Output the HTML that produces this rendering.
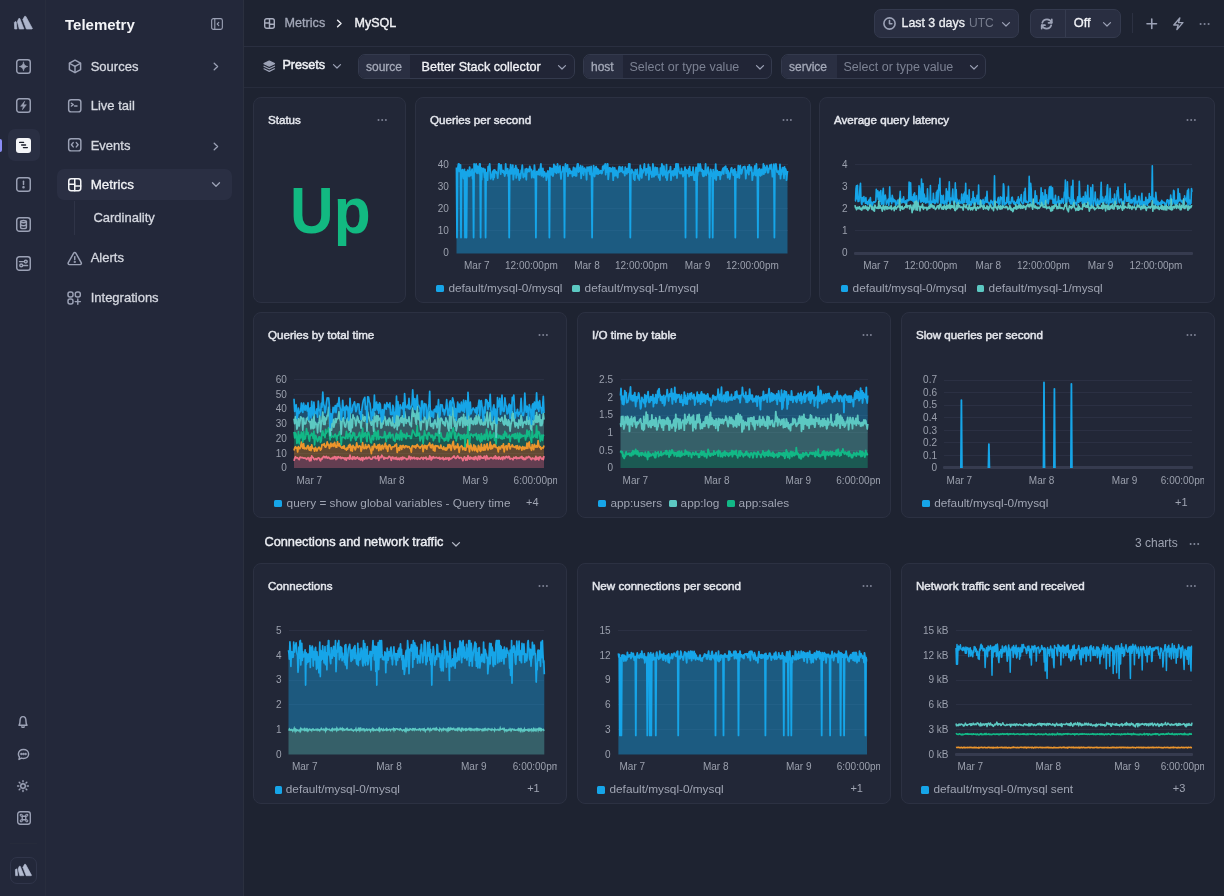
<!DOCTYPE html><html><head><meta charset="utf-8"><style>
html,body{margin:0;padding:0;}
body{width:1224px;height:896px;overflow:hidden;position:relative;background:#1e2331;font-family:"Liberation Sans", sans-serif;}
.t{position:absolute;white-space:nowrap;line-height:1;}
svg{overflow:visible}
.m{-webkit-text-stroke:0.3px currentColor;}
</style></head><body><div id="root" style="position:absolute;left:0;top:0;width:1224px;height:896px;will-change:transform;background:#1e2331;">
<div style="position:absolute;left:0px;top:0px;width:46px;height:896px;background:#23283a;"></div>
<div style="position:absolute;left:46px;top:0px;width:197px;height:896px;background:#23283a;"></div>
<div style="position:absolute;left:45px;top:0px;width:1px;height:896px;background:#282d3d;"></div>
<div style="position:absolute;left:243px;top:0px;width:1px;height:896px;background:#2b303f;"></div>
<div style="position:absolute;left:244px;top:46px;width:980px;height:1px;background:#2a2f40;"></div>
<div style="position:absolute;left:244px;top:87px;width:980px;height:1px;background:#272c3c;"></div>
<svg style="position:absolute;left:14px;top:16px" width="20" height="14" viewBox="14 16 20 14"><g fill="#aeb6cc" stroke="#aeb6cc" stroke-width="0.7" stroke-linejoin="round"><path d="M14.4 22.4 L15.4 21.4 L16.2 21.9 L16.9 28.9 L14.7 29 Z"/><path d="M17.4 21.6 L18.8 18.5 L19.8 18.5 L23.9 28.9 L19.3 29 Z"/><path d="M22.8 19.6 L24.7 16.3 L25.8 16.4 L32.4 28.6 L32 29 L26.4 29 Z"/></g></svg>
<svg style="position:absolute;left:16px;top:59px" width="15" height="15" viewBox="0 0 15 15" fill="none" stroke="#9ca2b6" stroke-width="1.45" stroke-linecap="round" stroke-linejoin="round"><rect x="0.75" y="0.75" width="13.5" height="13.5" rx="2.6"/><path d="M7.5 3.2 C7.9 5.8 9.2 7.1 11.8 7.5 C9.2 7.9 7.9 9.2 7.5 11.8 C7.1 9.2 5.8 7.9 3.2 7.5 C5.8 7.1 7.1 5.8 7.5 3.2 Z" fill="#9ca2b6" stroke-width="0.6"/></svg>
<svg style="position:absolute;left:16px;top:98px" width="15" height="15" viewBox="0 0 15 15" fill="none" stroke="#9ca2b6" stroke-width="1.45" stroke-linecap="round" stroke-linejoin="round"><rect x="0.75" y="0.75" width="13.5" height="13.5" rx="2.6"/><path d="M8.6 3.2 L4.6 8.3 L7.3 8.3 L6.4 11.8 L10.4 6.7 L7.7 6.7 Z" fill="#9ca2b6" stroke-width="0.5"/></svg>
<div style="position:absolute;left:8px;top:129px;width:32px;height:32px;background:#2a2f43;border-radius:7px;"></div>
<div style="position:absolute;left:0px;top:139px;width:2px;height:13px;background:#8b8df7;border-radius:0 2px 2px 0;"></div>
<svg style="position:absolute;left:16px;top:138px" width="15" height="15" viewBox="0 0 15 15"><rect x="0" y="0" width="15" height="15" rx="3" fill="#f4f5f8"/><g stroke="#1b1f2c" stroke-width="1.3" stroke-linecap="round"><path d="M3.6 4.4 H7.6"/><path d="M5.6 7 H9.6"/><path d="M7.4 9.6 H11.4"/></g></svg>
<svg style="position:absolute;left:16px;top:177px" width="15" height="15" viewBox="0 0 15 15" fill="none" stroke="#9ca2b6" stroke-width="1.45" stroke-linecap="round" stroke-linejoin="round"><rect x="0.75" y="0.75" width="13.5" height="13.5" rx="2.6"/><path d="M7.5 4.2 V7.4"/><circle cx="7.5" cy="10.2" r="0.55" fill="#9ca2b6"/></svg>
<svg style="position:absolute;left:16px;top:216.5px" width="15" height="15" viewBox="0 0 15 15" fill="none" stroke="#9ca2b6" stroke-width="1.45" stroke-linecap="round" stroke-linejoin="round"><rect x="0.75" y="0.75" width="13.5" height="13.5" rx="2.6"/><ellipse cx="7.5" cy="4.6" rx="2.9" ry="1.2"/><path d="M4.6 4.6 V10.4 C4.6 11.1 5.9 11.6 7.5 11.6 C9.1 11.6 10.4 11.1 10.4 10.4 V4.6"/><path d="M4.6 7.5 C4.6 8.2 5.9 8.7 7.5 8.7 C9.1 8.7 10.4 8.2 10.4 7.5"/></svg>
<svg style="position:absolute;left:16px;top:256px" width="15" height="15" viewBox="0 0 15 15" fill="none" stroke="#9ca2b6" stroke-width="1.45" stroke-linecap="round" stroke-linejoin="round"><rect x="0.75" y="0.75" width="13.5" height="13.5" rx="2.6"/><path d="M3.5 5.6 H8.3"/><circle cx="9.8" cy="5.6" r="1.4"/><path d="M11.5 9.4 H6.7"/><circle cx="5.2" cy="9.4" r="1.4"/></svg>
<svg style="position:absolute;left:17px;top:715px" width="12" height="14" viewBox="0 0 12 14" fill="none" stroke="#9ca2b6" stroke-width="1.45" stroke-linecap="round" stroke-linejoin="round"><path d="M2 10.2 C3 9.2 3 8.2 3 6.2 C3 3.6 4.3 1.6 6 1.6 C7.7 1.6 9 3.6 9 6.2 C9 8.2 9 9.2 10 10.2 Z"/><path d="M4.8 11.8 C5.2 12.5 6.8 12.5 7.2 11.8"/></svg>
<svg style="position:absolute;left:17px;top:748px" width="13" height="13" viewBox="0 0 13 13" fill="none" stroke="#9ca2b6" stroke-width="1.45" stroke-linecap="round" stroke-linejoin="round"><path d="M6.5 1.4 C9.5 1.4 11.6 3.3 11.6 5.9 C11.6 8.5 9.5 10.4 6.5 10.4 C5.8 10.4 5.1 10.3 4.5 10.1 L2 11.4 L2.5 9.1 C1.8 8.3 1.4 7.2 1.4 5.9 C1.4 3.3 3.5 1.4 6.5 1.4 Z"/><circle cx="4.4" cy="6" r="0.45" fill="#9ca2b6"/><circle cx="6.5" cy="6" r="0.45" fill="#9ca2b6"/><circle cx="8.6" cy="6" r="0.45" fill="#9ca2b6"/></svg>
<svg style="position:absolute;left:17px;top:780px" width="12" height="12" viewBox="0 0 12 12" fill="none" stroke="#9ca2b6" stroke-width="1.45" stroke-linecap="round" stroke-linejoin="round"><circle cx="6" cy="6" r="2.3"/><path d="M6 0.6 V1.8 M6 10.2 V11.4 M0.6 6 H1.8 M10.2 6 H11.4 M2.2 2.2 L3 3 M9 9 L9.8 9.8 M2.2 9.8 L3 9 M9 3 L9.8 2.2"/></svg>
<svg style="position:absolute;left:16.5px;top:811px" width="14" height="14" viewBox="0 0 15 15" fill="none" stroke="#9ca2b6" stroke-width="1.45" stroke-linecap="round" stroke-linejoin="round"><rect x="0.75" y="0.75" width="13.5" height="13.5" rx="2.6"/><path d="M5.6 5.6 H9.4 V9.4 H5.6 Z"/><path d="M5.6 5.6 V4.6 A1.1 1.1 0 1 0 4.6 5.6 H5.6 M9.4 5.6 H10.4 A1.1 1.1 0 1 0 9.4 4.6 V5.6 M9.4 9.4 V10.4 A1.1 1.1 0 1 0 10.4 9.4 H9.4 M5.6 9.4 H4.6 A1.1 1.1 0 1 0 5.6 10.4 V9.4" stroke-width="1.1"/></svg>
<div style="position:absolute;left:10px;top:843px;width:27px;height:1px;background:#262b3b;"></div>
<div style="position:absolute;left:10px;top:856.5px;width:27px;height:27.5px;border:1px solid #30354a;border-radius:7px;box-sizing:border-box;"></div>
<div style="position:absolute;left:0;top:0;transform:translate(1px,848px) scale(0.9);transform-origin:14px 16px">
<svg style="position:absolute;left:14px;top:16px" width="20" height="14" viewBox="14 16 20 14"><g fill="#b3bbd0" stroke="#b3bbd0" stroke-width="0.7" stroke-linejoin="round"><path d="M14.4 22.4 L15.4 21.4 L16.2 21.9 L16.9 28.9 L14.7 29 Z"/><path d="M17.4 21.6 L18.8 18.5 L19.8 18.5 L23.9 28.9 L19.3 29 Z"/><path d="M22.8 19.6 L24.7 16.3 L25.8 16.4 L32.4 28.6 L32 29 L26.4 29 Z"/></g></svg>
</div>
<span class="t" style="left:65.0px;top:17.1px;font-size:15px;font-weight:700;color:#f3f4f7;">Telemetry</span>
<svg style="position:absolute;left:211px;top:18px" width="12" height="12" viewBox="0 0 12 12" fill="none" stroke="#9ca2b6" stroke-width="1.1" stroke-linecap="round" stroke-linejoin="round"><rect x="0.65" y="0.65" width="10.7" height="10.7" rx="1.8"/><path d="M3.8 0.8 V11.2"/><path d="M7.8 4.4 L6.2 6 L7.8 7.6"/></svg>
<svg style="position:absolute;left:67.5px;top:58.5px" width="14" height="15" viewBox="0 0 14 15" fill="none" stroke="#9ca2b6" stroke-width="1.45" stroke-linecap="round" stroke-linejoin="round"><path d="M7 1.2 L12.6 4.2 V10.6 L7 13.6 L1.4 10.6 V4.2 Z"/><path d="M1.6 4.3 L7 7.3 L12.4 4.3"/><path d="M7 7.3 V13.4"/></svg>
<span class="t m" style="left:90.7px;top:60.0px;font-size:13px;font-weight:400;color:#d5d8e0;">Sources</span>
<svg style="position:absolute;left:212px;top:62px" width="8" height="9" viewBox="0 0 8 9" fill="none" stroke="#9ca2b6" stroke-width="1.3" stroke-linecap="round" stroke-linejoin="round"><path d="M2.2 1.2 L5.6 4.5 L2.2 7.8"/></svg>
<svg style="position:absolute;left:68px;top:98.6px" width="13.5" height="13.5" viewBox="0 0 13.5 13.5" fill="none" stroke="#9ca2b6" stroke-width="1.45" stroke-linecap="round" stroke-linejoin="round"><rect x="0.65" y="0.65" width="12.2" height="12.2" rx="2.4"/><path d="M3.4 4.2 L5.2 5.6 L3.4 7"/><path d="M6.6 7 H9"/></svg>
<span class="t m" style="left:90.7px;top:99.2px;font-size:13px;font-weight:400;color:#d5d8e0;">Live tail</span>
<svg style="position:absolute;left:68px;top:138.3px" width="13.5" height="13.5" viewBox="0 0 13.5 13.5" fill="none" stroke="#9ca2b6" stroke-width="1.45" stroke-linecap="round" stroke-linejoin="round"><rect x="0.65" y="0.65" width="12.2" height="12.2" rx="2.4"/><path d="M5.2 4.6 L3.4 6.75 L5.2 8.9"/><path d="M8.3 4.6 L10.1 6.75 L8.3 8.9"/></svg>
<span class="t m" style="left:90.7px;top:138.8px;font-size:13px;font-weight:400;color:#d5d8e0;">Events</span>
<svg style="position:absolute;left:212px;top:141.5px" width="8" height="9" viewBox="0 0 8 9" fill="none" stroke="#9ca2b6" stroke-width="1.3" stroke-linecap="round" stroke-linejoin="round"><path d="M2.2 1.2 L5.6 4.5 L2.2 7.8"/></svg>
<div style="position:absolute;left:57px;top:169px;width:175px;height:31px;background:#2a2f43;border-radius:7px;"></div>
<svg style="position:absolute;left:67.5px;top:178.3px" width="13.5" height="13.5" viewBox="0 0 13.5 13.5" fill="none" stroke="#f4f5f8" stroke-width="1.5" stroke-linecap="round" stroke-linejoin="round"><rect x="0.75" y="0.75" width="12" height="12" rx="2.4"/><path d="M6.75 0.8 V12.7"/><path d="M0.8 6.2 H6.75"/><path d="M6.75 8 H12.7"/></svg>
<span class="t m" style="left:90.7px;top:178.0px;font-size:13.4px;font-weight:400;color:#f3f4f7;">Metrics</span>
<svg style="position:absolute;left:211px;top:181px" width="10" height="7" viewBox="0 0 10 7" fill="none" stroke="#9ca2b6" stroke-width="1.3" stroke-linecap="round" stroke-linejoin="round"><path d="M1.5 1.8 L5 5.2 L8.5 1.8"/></svg>
<div style="position:absolute;left:73.5px;top:201px;width:1px;height:34px;background:#2f3447;"></div>
<span class="t m" style="left:93.4px;top:211.4px;font-size:13px;font-weight:400;color:#d5d8e0;">Cardinality</span>
<svg style="position:absolute;left:66.5px;top:250.5px" width="15.5" height="15" viewBox="0 0 15.5 15" fill="none" stroke="#9ca2b6" stroke-width="1.45" stroke-linecap="round" stroke-linejoin="round"><path d="M7.75 1.4 C8.2 1.4 8.5 1.6 8.8 2.1 L14.2 11.6 C14.7 12.5 14.2 13.6 13.1 13.6 H2.4 C1.3 13.6 0.8 12.5 1.3 11.6 L6.7 2.1 C7 1.6 7.3 1.4 7.75 1.4 Z"/><path d="M7.75 5.6 V8.4"/><circle cx="7.75" cy="10.9" r="0.4" fill="#9ca2b6"/></svg>
<span class="t m" style="left:90.7px;top:251.0px;font-size:13px;font-weight:400;color:#d5d8e0;">Alerts</span>
<svg style="position:absolute;left:66.8px;top:290.8px" width="14.5" height="14" viewBox="0 0 14.5 14" fill="none" stroke="#9ca2b6" stroke-width="1.45" stroke-linecap="round" stroke-linejoin="round"><rect x="1" y="1" width="5" height="5" rx="2"/><rect x="8.3" y="1" width="5" height="5" rx="2"/><rect x="1" y="8" width="5" height="5" rx="2"/><path d="M10.8 8 V13.2 M8.2 10.6 H13.4"/></svg>
<span class="t m" style="left:90.7px;top:290.7px;font-size:13px;font-weight:400;color:#d5d8e0;">Integrations</span>
<svg style="position:absolute;left:264px;top:18px" width="11" height="11" viewBox="0 0 11 11" fill="none" stroke="#a9aebf" stroke-width="1.4" stroke-linecap="round" stroke-linejoin="round"><rect x="0.7" y="0.7" width="9.6" height="9.6" rx="2"/><path d="M5.5 0.7 V10.3"/><path d="M0.7 5 H5.5"/><path d="M5.5 6.3 H10.3"/></svg>
<span class="t m" style="left:284.6px;top:17.3px;font-size:12.6px;font-weight:400;color:#a3a8b8;">Metrics</span>
<svg style="position:absolute;left:335.5px;top:18.5px" width="7" height="9" viewBox="0 0 7 9" fill="none" stroke="#e8eaf0" stroke-width="1.5" stroke-linecap="round" stroke-linejoin="round"><path d="M1.6 1.2 L5 4.5 L1.6 7.8"/></svg>
<span class="t m" style="left:354.6px;top:16.9px;font-size:12.5px;font-weight:400;color:#f1f2f6;-webkit-text-stroke:0.4px currentColor;">MySQL</span>
<div style="position:absolute;left:874px;top:9px;width:145px;height:28.5px;background:#292e41;border:1px solid #343a4e;border-radius:7px;box-sizing:border-box;"></div>
<svg style="position:absolute;left:882.5px;top:17.3px" width="13" height="13" viewBox="0 0 13 13" fill="none" stroke="#9ca2b6" stroke-width="1.6" stroke-linecap="round" stroke-linejoin="round"><circle cx="6.5" cy="6.5" r="5.6"/><path d="M6.5 3.5 V6.7 H8.9"/></svg>
<span class="t m" style="left:901.5px;top:16.7px;font-size:12.4px;font-weight:400;color:#eef0f4;">Last 3 days</span>
<span class="t" style="left:969.0px;top:17.0px;font-size:12px;font-weight:400;color:#777d8e;">UTC</span>
<svg style="position:absolute;left:1000.5px;top:20.5px" width="10" height="7" viewBox="0 0 10 7" fill="none" stroke="#9ca2b6" stroke-width="1.2" stroke-linecap="round" stroke-linejoin="round"><path d="M1.5 1.6 L5 5 L8.5 1.6"/></svg>
<div style="position:absolute;left:1030px;top:9px;width:91px;height:28.5px;background:#292e41;border:1px solid #343a4e;border-radius:7px;box-sizing:border-box;"></div>
<div style="position:absolute;left:1064.5px;top:10px;width:1px;height:26.5px;background:#363c50;"></div>
<svg style="position:absolute;left:1040px;top:17.5px" width="13.5" height="12" viewBox="0 0 13.5 12" fill="none" stroke="#9ca2b6" stroke-width="1.7" stroke-linecap="round" stroke-linejoin="round"><path d="M11.6 4.6 C10.9 2.7 9.1 1.4 7 1.4 C4.8 1.4 2.9 2.8 2.3 4.8"/><path d="M11.8 1.4 V4.8 H8.5"/><path d="M1.9 7.4 C2.6 9.3 4.4 10.6 6.5 10.6 C8.7 10.6 10.6 9.2 11.2 7.2"/><path d="M1.7 10.6 V7.2 H5"/></svg>
<span class="t m" style="left:1073.7px;top:16.6px;font-size:12.8px;font-weight:400;color:#f1f2f6;">Off</span>
<svg style="position:absolute;left:1101.5px;top:20.5px" width="10" height="7" viewBox="0 0 10 7" fill="none" stroke="#9ca2b6" stroke-width="1.2" stroke-linecap="round" stroke-linejoin="round"><path d="M1.5 1.6 L5 5 L8.5 1.6"/></svg>
<div style="position:absolute;left:1132px;top:12.5px;width:1px;height:20.5px;background:#2c3142;"></div>
<svg style="position:absolute;left:1145.5px;top:17.5px" width="11.5" height="11.5" viewBox="0 0 11.5 11.5" fill="none" stroke="#9ca2b6" stroke-width="1.6" stroke-linecap="round" stroke-linejoin="round"><path d="M5.75 1 V10.5 M1 5.75 H10.5"/></svg>
<svg style="position:absolute;left:1172px;top:17px" width="12.5" height="13.5" viewBox="0 0 12.5 13.5" fill="none" stroke="#9ca2b6" stroke-width="1.4" stroke-linecap="round" stroke-linejoin="round"><path d="M7.8 1 L1.8 8 H6.2 L4.9 12.6 L10.9 5.6 H6.5 Z"/></svg>
<svg style="position:absolute;left:1199px;top:21.5px" width="12" height="4" viewBox="0 0 12 4"><g fill="#80869a"><circle cx="1.6" cy="2" r="1.05"/><circle cx="5.6" cy="2" r="1.05"/><circle cx="9.6" cy="2" r="1.05"/></g></svg>
<svg style="position:absolute;left:262.5px;top:60px" width="12.5" height="12.5" viewBox="0 0 12.5 12.5" fill="none" stroke="#9ca2b6" stroke-width="1.2" stroke-linecap="round" stroke-linejoin="round"><path d="M6.25 1 L11.5 3.6 L6.25 6.2 L1 3.6 Z" fill="#9ca2b6"/><path d="M1 6.2 L6.25 8.8 L11.5 6.2"/><path d="M1 8.8 L6.25 11.4 L11.5 8.8"/></svg>
<span class="t m" style="left:282.4px;top:59.3px;font-size:12.6px;font-weight:400;color:#eef0f4;-webkit-text-stroke:0.5px currentColor;">Presets</span>
<svg style="position:absolute;left:332px;top:63px" width="10" height="7" viewBox="0 0 10 7" fill="none" stroke="#9ca2b6" stroke-width="1.2" stroke-linecap="round" stroke-linejoin="round"><path d="M1.5 1.6 L5 5 L8.5 1.6"/></svg>
<div style="position:absolute;left:358px;top:54px;width:217px;height:25px;background:#212536;border:1px solid #343a4d;border-radius:7px;box-sizing:border-box;overflow:hidden;"></div>
<div style="position:absolute;left:359px;top:55px;width:51px;height:23px;background:#2a2f42;border-radius:6px 0 0 6px;"></div>
<span class="t m" style="left:366.0px;top:61.4px;font-size:12px;font-weight:400;color:#a4a9b8;">source</span>
<span class="t m" style="left:421.6px;top:61.1px;font-size:12.6px;font-weight:400;color:#f1f2f6;">Better Stack collector</span>
<svg style="position:absolute;left:557px;top:63.5px" width="10" height="7" viewBox="0 0 10 7" fill="none" stroke="#9ca2b6" stroke-width="1.2" stroke-linecap="round" stroke-linejoin="round"><path d="M1.5 1.6 L5 5 L8.5 1.6"/></svg>
<div style="position:absolute;left:583px;top:54px;width:189px;height:25px;background:#212536;border:1px solid #343a4d;border-radius:7px;box-sizing:border-box;overflow:hidden;"></div>
<div style="position:absolute;left:584px;top:55px;width:39px;height:23px;background:#2a2f42;border-radius:6px 0 0 6px;"></div>
<span class="t m" style="left:591.0px;top:61.4px;font-size:12px;font-weight:400;color:#a4a9b8;">host</span>
<span class="t" style="left:629.5px;top:61.2px;font-size:12.5px;font-weight:400;color:#7b8192;">Select or type value</span>
<svg style="position:absolute;left:755px;top:63.5px" width="10" height="7" viewBox="0 0 10 7" fill="none" stroke="#9ca2b6" stroke-width="1.2" stroke-linecap="round" stroke-linejoin="round"><path d="M1.5 1.6 L5 5 L8.5 1.6"/></svg>
<div style="position:absolute;left:781px;top:54px;width:205px;height:25px;background:#212536;border:1px solid #343a4d;border-radius:7px;box-sizing:border-box;overflow:hidden;"></div>
<div style="position:absolute;left:782px;top:55px;width:55px;height:23px;background:#2a2f42;border-radius:6px 0 0 6px;"></div>
<span class="t m" style="left:789.0px;top:61.4px;font-size:12px;font-weight:400;color:#a4a9b8;">service</span>
<span class="t" style="left:843.5px;top:61.2px;font-size:12.5px;font-weight:400;color:#7b8192;">Select or type value</span>
<svg style="position:absolute;left:968.5px;top:63.5px" width="10" height="7" viewBox="0 0 10 7" fill="none" stroke="#9ca2b6" stroke-width="1.2" stroke-linecap="round" stroke-linejoin="round"><path d="M1.5 1.6 L5 5 L8.5 1.6"/></svg>
<div style="position:absolute;left:253px;top:97px;width:153px;height:206px;background:#222737;border:1px solid #2c3142;border-radius:8px;box-sizing:border-box;"></div>
<span class="t m" style="left:268.0px;top:114.1px;font-size:11.6px;font-weight:400;color:#e6e8ee;-webkit-text-stroke:0.45px currentColor;">Status</span>
<svg style="position:absolute;left:377px;top:118px" width="11" height="4" viewBox="0 0 11 4"><g fill="#7d8294"><circle cx="1.5" cy="2" r="1"/><circle cx="5.2" cy="2" r="1"/><circle cx="8.9" cy="2" r="1"/></g></svg>
<span class="t" style="left:289.5px;top:177.8px;font-size:65px;font-weight:700;color:#12b981;transform:scaleX(0.93);transform-origin:0 0;">Up</span>
<div style="position:absolute;left:415px;top:97px;width:396px;height:206px;background:#222737;border:1px solid #2c3142;border-radius:8px;box-sizing:border-box;"></div>
<span class="t m" style="left:430.0px;top:114.1px;font-size:11.6px;font-weight:400;color:#e6e8ee;-webkit-text-stroke:0.45px currentColor;">Queries per second</span>
<svg style="position:absolute;left:782px;top:118px" width="11" height="4" viewBox="0 0 11 4"><g fill="#7d8294"><circle cx="1.5" cy="2" r="1"/><circle cx="5.2" cy="2" r="1"/><circle cx="8.9" cy="2" r="1"/></g></svg>
<span class="t" style="right:775.2px;top:159.9px;font-size:10px;font-weight:400;color:#9ba0ad;">40</span>
<div style="position:absolute;left:456px;top:164px;width:332px;height:1px;background:#2b3043;"></div>
<span class="t" style="right:775.2px;top:182.0px;font-size:10px;font-weight:400;color:#9ba0ad;">30</span>
<div style="position:absolute;left:456px;top:186px;width:332px;height:1px;background:#2b3043;"></div>
<span class="t" style="right:775.2px;top:204.1px;font-size:10px;font-weight:400;color:#9ba0ad;">20</span>
<div style="position:absolute;left:456px;top:208px;width:332px;height:1px;background:#2b3043;"></div>
<span class="t" style="right:775.2px;top:226.2px;font-size:10px;font-weight:400;color:#9ba0ad;">10</span>
<div style="position:absolute;left:456px;top:230px;width:332px;height:1px;background:#2b3043;"></div>
<span class="t" style="right:775.2px;top:248.2px;font-size:10px;font-weight:400;color:#9ba0ad;">0</span>
<svg style="position:absolute;left:0;top:0" width="1224" height="896" viewBox="0 0 1224 896" fill="none"><path d="M456.5 167.5l.5 70 .5-64 .5-6.7 .5-2.8 .5 0 .5 7.4 .5-.7 .5-5.8 .5 72.6 .5-62.3 .5-4.1 .5-1.5 .5 5 .5 3.9 .5-.7 .5-8.4 .5 68.1 .5-64.2 .5-1.3 .5 65.5 .5-63.4 .6-3.9 .5 5.5 .5-2 .5 2.8 .5-9.3 .5 4.9 .5 3.4 .5-1.6 .5-.9 .5-3.8 .5 9.4 .5-2.1 .5 61 .5-73.5 .5 3.4 .5 4.3 .5-3.2 .5-4.5 .5 8.5 .5 .7 .5-7 .5 3.3 .5-.9 .5 4.9 .5-9.5 .5 0 .5 73.5 .5-69.5 .5 11.6 .5-11.3 .5 3.4 .5-2.4 .5-.8 .5 3.9 .5 5.3 .5-8.3 .5 68.1 .5-65 .5 1.1 .5-.7 .5 7.3 .5-13.5 .5 3.9 .5-4 .6-2.6 .5 7.4 .5 7.4 .5-3.4 .5 1.6 .5-2.7 .5-3 .5 8.4 .5-9.6 .5 7.4 .5-7.6 .5 1.3 .5 1.3 .5-.8 .5 1.8 .5 .2 .5 4.5 .5-6.4 .5-7.8 .5 0 .5 1.9 .5 2.5 .5 5.7 .5-9.3 .5 6.4 .5-.3 .5 1.2 .5-1.6 .5 2.5 .5-1.4 .5 4.5 .5-2.3 .5-9.8 .5 8.9 .5 .4 .5-3.7 .5-.9 .5 7.3 .5-3.9 .5 65.4 .5-67.6 .5 1.2 .5-6.4 .5 9.1 .6-2.9 .5 2.7 .5-8.5 .5 14.6 .5-5.3 .5-.3 .5-5.4 .5 .2 .5-3.3 .5 12.3 .5-9.7 .5 4.7 .5 2 .5-5.1 .5 6.6 .5 3.8 .5-6 .5 4.1 .5-3.6 .5-4.4 .5-.3 .5-4.8 .5 6.8 .5 5.5 .5-3.4 .5 .9 .5 1.3 .5-7.1 .5 4.6 .5 6 .5-11.2 .5 3.5 .5-1.9 .5 1.2 .5-2.3 .5 2.4 .5-5.2 .5 3.2 .5 .2 .5-.3 .5 8.2 .5-5.5 .5 .7 .5-1.9 .6 6.8 .5-12.5 .5 5.9 .5 5.7 .5 60.7 .5-64.6 .5-1.4 .5 2.8 .5-3 .5 3.1 .5-4.9 .5 5.3 .5-2.6 .5-4.6 .5-3.6 .5 11.8 .5-2.5 .5 1.8 .5-6.6 .5 8.4 .5-3.3 .5-1.7 .5 3.8 .5-.1 .5-2.2 .5 6.7 .5-2.6 .5-4.4 .5-2.2 .5 1.4 .5 6.3 .5 58.9 .5-69.9 .5 1 .5 3 .5 3.2 .5-6.4 .5 5.3 .5 2.4 .5-1.8 .5-9.9 .5 5.1 .5-3.6 .5 6.5 .6-5.5 .5 6.4 .5-1.8 .5-7.5 .5 3.1 .5 5.4 .5-1.8 .5-1.2 .5-3.7 .5 7.5 .5 5.7 .5-6 .5-1.1 .5-.3 .5-5 .5 4 .5-2.1 .5 69 .5-69.2 .5-4.3 .5 4.7 .5 2.4 .5 .7 .5-6.9 .5 11.2 .5-3.9 .5-2.2 .5-1.3 .5 4.9 .5-2.9 .5 2.4 .5-1.4 .5 .8 .5 4 .5-5.4 .5-3.6 .5 7.6 .5-3.2 .5-3.8 .5 7.7 .5-4.7 .5 4.8 .5-9 .5-2.9 .6 0 .5 8 .5-4.1 .5 3.2 .5 .2 .5-5.6 .5 12.7 .5-9.6 .5 4.3 .5-6.6 .5 5.3 .5 3.3 .5-4.9 .5-2.1 .5 3.2 .5-1.8 .5 3.9 .5 6.4 .5-12.6 .5 .8 .5 2.6 .5 .2 .5-3.9 .5 6.2 .5 1.4 .5-2 .5-6.1 .5 11.3 .5 59.8 .5-63.6 .5 1.8 .5-10.1 .5 5.6 .5 5.3 .5-3.6 .5-5.1 .5-1.2 .5 7.2 .5-3.4 .5-1.8 .5 5.5 .5-4.3 .5 1.7 .5 1.5 .6-.1 .5-2.3 .5 .8 .5 2.2 .5-.8 .5-6.3 .5 3.5 .5-2.9 .5-1.8 .5 3 .5-4.3 .5 10.7 .5-7.1 .5 4.6 .5-8.2 .5 0 .5 15.3 .5-4.4 .5-6.7 .5-.4 .5 .3 .5 3.5 .5-2.3 .5-.7 .5 3.3 .5-4.6 .5 12.9 .5-11.6 .5 7.4 .5-8.1 .5 5 .5 2.6 .5-5.2 .5 5.3 .5-.7 .5 2.8 .5-6.6 .5-2 .5-2.4 .5 5.3 .5-4.8 .5 3.8 .5 .4 .5-2.7 .6-1.8 .5 5.6 .5-.1 .5 .4 .5-1.4 .5 4.3 .5-8.6 .5 5.8 .5-4 .5 5 .5-5.1 .5-.3 .5 3.8 .5-8.3 .5 5.7 .5-5.7 .5 73.5 .5-63.3 .5-1.1 .5-3.6 .5 1.5 .5 .4 .5 1.6 .5 6.1 .5-6.8 .5 7.9 .5-10.5 .5 4.6 .5-.1 .5-2.4 .5-2.3 .5 7.1 .5 1.8 .5-3 .5 4.6 .5-3.7 .5-10.8 .5 10.9 .5-7.5 .5 9 .5-7.4 .5 2.5 .5-1.1 .5-3 .6-4.9 .5 6.2 .5 .5 .5 4.5 .5-6.4 .5 4.2 .5-4.5 .5 3.8 .5-8 .5 15.4 .5-7.4 .5-5.1 .5 5.1 .5 1.6 .5-1.8 .5 5 .5-5.8 .5-7.3 .5 3.1 .5 9.5 .5-1.1 .5-2.3 .5-5.8 .5 7.5 .5-.4 .5-6.7 .5 .2 .5 5.2 .5 2.7 .5 1.9 .5-3.3 .5 5.7 .5-12.1 .5 6.4 .5-4.9 .5-5.6 .5 1.8 .5 10 .5-8.3 .5-1.4 .5 7.8 .5 1 .5-3.6 .5 6.3 .6-13 .5 15.6 .5-4 .5-3.8 .5 .5 .5-2 .5-.5 .5 1.9 .5-5.7 .5 13.6 .5-8.7 .5 3.3 .5-3.3 .5-.5 .5 4.9 .5-1 .5-6 .5 1.5 .5 4.5 .5-10.9 .5 0 .5 14 .5-7.6 .5-6.4 .5 4 .5 2.5 .5 1.6 .5 1.2 .5-1 .5 1.2 .5-5.1 .5 4.5 .5 .3 .5 3.4 .5-5 .5 3.6 .5-3.2 .5-4.8 .5 70.3 .5-67.9 .5 .5 .5 1.4 .5 1.4 .5 .6 .6-4.7 .5 7.7 .5-9.8 .5 5.4 .5 3.1 .5-1.2 .5 1.2 .5-3.6 .5 3.3 .5-7.8 .5 7.7 .5 5.4 .5-5.2 .5 5.2 .5-8.2 .5-4.7 .5 70.2 .5-60.3 .5-2.7 .5-10.5 .5 5.5 .5 1.5 .5-4 .5-3 .5 2.5 .5 4.7 .5-.6 .5-1.1 .5 5.1 .5 1.7 .5-5.3 .5 5 .5-3.6 .5-.7 .5-7.7 .5 11.3 .5-2.7 .5-.1 .5-2.2 .5-3.1 .5 6.5 .5 1.3 .5 62.5 .5-61.9 .6-6.2 .5 2.3 .5 4.7 .5-2.8 .5 63.9 .5-67.9 .5 4.5 .5-1.7 .5 6.1 .5-2.7 .5-11.7 .5 15.9 .5-7.6 .5-1.9 .5 2.9 .5 2 .5-3.4 .5-.2 .5 .1 .5 7.4 .5-7.1 .5 3 .5-1.1 .5-3.2 .5-1.7 .5-1.1 .5 5.9 .5-6.1 .5-.8 .5 .1 .5-.9 .5 6.9 .5-.2 .5-4.2 .5 8.9 .5-6.7 .5 3.2 .5-1 .5 5.9 .5-3.4 .5-3.7 .5-3.7 .5-.5 .5 4.2 .6 .4 .5 2.7 .5-5.3 .5 2.9 .5-3.7 .5 68.5 .5-65.9 .5 5.9 .5-2.4 .5 2.2 .5-1.1 .5-10.5 .5 4.5 .5 7.8 .5-9.4 .5-2.9 .5 6.7 .5 1.4 .5-1 .5-3.2 .5-1.3 .5-1.5 .5 0 .5 .5 .5-.8 .5 3.3 .5 8.9 .5-6.4 .5-1.8 .5 2.2 .5-6.1 .5 5.3 .5 2.7 .5-9.8 .5 3.5 .5 2.2 .5-2.7 .5-.7 .5 2.8 .5 10.3 .5-6.3 .5-1 .5 2.2 .5-5.2 .6-4 .5 6.9 .5 2.7 .5-11.5 .5 9.5 .5 3.3 .5 60.7 .5-67.6 .5 5.2 .5-6.5 .5 5.2 .5 2.1 .5-4.1 .5-2.4 .5 5.4 .5-4.3 .5 1.8 .5-8.3 .5 10.1 .5-8.3 .5 6.3 .5 .2 .5-3.8 .5-1.1 .5-1.7 .5 3.3 .5 3.8 .5-.3 .5-4.1 .5 .1 .5-3.4 .5 3.7 .5-2.6 .5-1.7 .5 5.5 .5 6.6 .5-1.1 .5 1.2 .5-12.5 .5 73.3 .5-71.7 .5 2.9 .5-4.7 .5 3.3 .6 4.7 .5 .3 .5-1.1 .5 .1 .5 3 .5-2.6 .5-7.2 .5 14.1 .5-8.6 .5 4.6 .5-4.6 .5-2.4 .5 4 .5-3.6 .5 10.3 .5-11.5 .5 7.3 .5-5.1 .5 1.6 .5 9.6 .5-5.6 .5-3.8 0 82.7-.5 0-.5 0-.5 0-.5 0-.5 0-.5 0-.5 0-.5 0-.5 0-.5 0-.5 0-.5 0-.5 0-.5 0-.5 0-.5 0-.5 0-.5 0-.5 0-.5 0-.5 0-.6 0-.5 0-.5 0-.5 0-.5 0-.5 0-.5 0-.5 0-.5 0-.5 0-.5 0-.5 0-.5 0-.5 0-.5 0-.5 0-.5 0-.5 0-.5 0-.5 0-.5 0-.5 0-.5 0-.5 0-.5 0-.5 0-.5 0-.5 0-.5 0-.5 0-.5 0-.5 0-.5 0-.5 0-.5 0-.5 0-.5 0-.5 0-.5 0-.5 0-.5 0-.5 0-.5 0-.5 0-.6 0-.5 0-.5 0-.5 0-.5 0-.5 0-.5 0-.5 0-.5 0-.5 0-.5 0-.5 0-.5 0-.5 0-.5 0-.5 0-.5 0-.5 0-.5 0-.5 0-.5 0-.5 0-.5 0-.5 0-.5 0-.5 0-.5 0-.5 0-.5 0-.5 0-.5 0-.5 0-.5 0-.5 0-.5 0-.5 0-.5 0-.5 0-.5 0-.5 0-.5 0-.5 0-.5 0-.5 0-.6 0-.5 0-.5 0-.5 0-.5 0-.5 0-.5 0-.5 0-.5 0-.5 0-.5 0-.5 0-.5 0-.5 0-.5 0-.5 0-.5 0-.5 0-.5 0-.5 0-.5 0-.5 0-.5 0-.5 0-.5 0-.5 0-.5 0-.5 0-.5 0-.5 0-.5 0-.5 0-.5 0-.5 0-.5 0-.5 0-.5 0-.5 0-.5 0-.5 0-.5 0-.5 0-.5 0-.5 0-.6 0-.5 0-.5 0-.5 0-.5 0-.5 0-.5 0-.5 0-.5 0-.5 0-.5 0-.5 0-.5 0-.5 0-.5 0-.5 0-.5 0-.5 0-.5 0-.5 0-.5 0-.5 0-.5 0-.5 0-.5 0-.5 0-.5 0-.5 0-.5 0-.5 0-.5 0-.5 0-.5 0-.5 0-.5 0-.5 0-.5 0-.5 0-.5 0-.5 0-.5 0-.5 0-.5 0-.5 0-.6 0-.5 0-.5 0-.5 0-.5 0-.5 0-.5 0-.5 0-.5 0-.5 0-.5 0-.5 0-.5 0-.5 0-.5 0-.5 0-.5 0-.5 0-.5 0-.5 0-.5 0-.5 0-.5 0-.5 0-.5 0-.5 0-.5 0-.5 0-.5 0-.5 0-.5 0-.5 0-.5 0-.5 0-.5 0-.5 0-.5 0-.5 0-.5 0-.5 0-.5 0-.5 0-.5 0-.5 0-.6 0-.5 0-.5 0-.5 0-.5 0-.5 0-.5 0-.5 0-.5 0-.5 0-.5 0-.5 0-.5 0-.5 0-.5 0-.5 0-.5 0-.5 0-.5 0-.5 0-.5 0-.5 0-.5 0-.5 0-.5 0-.5 0-.5 0-.5 0-.5 0-.5 0-.5 0-.5 0-.5 0-.5 0-.5 0-.5 0-.5 0-.5 0-.5 0-.5 0-.5 0-.5 0-.5 0-.5 0-.6 0-.5 0-.5 0-.5 0-.5 0-.5 0-.5 0-.5 0-.5 0-.5 0-.5 0-.5 0-.5 0-.5 0-.5 0-.5 0-.5 0-.5 0-.5 0-.5 0-.5 0-.5 0-.5 0-.5 0-.5 0-.5 0-.5 0-.5 0-.5 0-.5 0-.5 0-.5 0-.5 0-.5 0-.5 0-.5 0-.5 0-.5 0-.5 0-.5 0-.5 0-.5 0-.5 0-.5 0-.6 0-.5 0-.5 0-.5 0-.5 0-.5 0-.5 0-.5 0-.5 0-.5 0-.5 0-.5 0-.5 0-.5 0-.5 0-.5 0-.5 0-.5 0-.5 0-.5 0-.5 0-.5 0-.5 0-.5 0-.5 0-.5 0-.5 0-.5 0-.5 0-.5 0-.5 0-.5 0-.5 0-.5 0-.5 0-.5 0-.5 0-.5 0-.5 0-.5 0-.5 0-.5 0-.5 0-.5 0-.6 0-.5 0-.5 0-.5 0-.5 0-.5 0-.5 0-.5 0-.5 0-.5 0-.5 0-.5 0-.5 0-.5 0-.5 0-.5 0-.5 0-.5 0-.5 0-.5 0-.5 0-.5 0-.5 0-.5 0-.5 0-.5 0-.5 0-.5 0-.5 0-.5 0-.5 0-.5 0-.5 0-.5 0-.5 0-.5 0-.5 0-.5 0-.5 0-.5 0-.5 0-.5 0-.5 0-.5 0-.6 0-.5 0-.5 0-.5 0-.5 0-.5 0-.5 0-.5 0-.5 0-.5 0-.5 0-.5 0-.5 0-.5 0-.5 0-.5 0-.5 0-.5 0-.5 0-.5 0-.5 0-.5 0-.5 0-.5 0-.5 0-.5 0-.5 0-.5 0-.5 0-.5 0-.5 0-.5 0-.5 0-.5 0-.5 0-.5 0-.5 0-.5 0-.5 0-.5 0-.5 0-.5 0-.5 0-.5 0-.6 0-.5 0-.5 0-.5 0-.5 0-.5 0-.5 0-.5 0-.5 0-.5 0-.5 0-.5 0-.5 0-.5 0-.5 0-.5 0-.5 0-.5 0-.5 0-.5 0-.5 0-.5 0-.5 0-.5 0-.5 0-.5 0-.5 0-.5 0-.5 0-.5 0-.5 0-.5 0-.5 0-.5 0-.5 0-.5 0-.5 0-.5 0-.5 0-.5 0-.5 0-.5 0-.5 0-.5 0-.6 0-.5 0-.5 0-.5 0-.5 0-.5 0-.5 0-.5 0-.5 0-.5 0-.5 0-.5 0-.5 0-.5 0-.5 0-.5 0-.5 0-.5 0-.5 0-.5 0-.5 0-.5 0-.5 0-.5 0-.5 0-.5 0-.5 0-.5 0-.5 0-.5 0-.5 0-.5 0-.5 0-.5 0-.5 0-.5 0-.5 0-.5 0-.5 0-.5 0-.5 0-.5 0-.5 0-.5 0-.6 0-.5 0-.5 0-.5 0-.5 0-.5 0-.5 0-.5 0-.5 0-.5 0-.5 0-.5 0-.5 0-.5 0-.5 0-.5 0-.5 0-.5 0-.5 0-.5 0-.5 0-.5 0-.5 0-.5 0-.5 0-.5 0-.5 0-.5 0-.5 0-.5 0-.5 0-.5 0-.5 0-.5 0-.5 0-.5 0-.5 0-.5 0-.5 0-.5 0-.5 0-.5 0-.5 0-.5 0-.6 0-.5 0-.5 0-.5 0-.5 0-.5 0-.5 0-.5 0-.5 0-.5 0-.5 0-.5 0-.5 0-.5 0-.5 0-.5 0-.5 0-.5 0-.5 0-.5 0-.5 0-.5 0-.5 0-.5 0-.5 0-.5 0-.5 0-.5 0-.5 0-.5 0-.5 0-.5 0-.5 0-.5 0-.5 0-.5 0-.5 0-.5 0-.5 0-.5 0-.5 0-.5 0-.5 0-.5 0-.6 0-.5 0-.5 0-.5 0-.5 0-.5 0-.5 0-.5 0-.5 0-.5 0-.5 0-.5 0-.5 0-.5 0-.5 0-.5 0-.5 0-.5 0-.5 0-.5 0-.5 0-.5 0Z" fill="rgba(22,165,232,0.42)"/><path d="M456.5 167.5l.5 70 .5-64 .5-6.7 .5-2.8 .5 0 .5 7.4 .5-.7 .5-5.8 .5 72.6 .5-62.3 .5-4.1 .5-1.5 .5 5 .5 3.9 .5-.7 .5-8.4 .5 68.1 .5-64.2 .5-1.3 .5 65.5 .5-63.4 .6-3.9 .5 5.5 .5-2 .5 2.8 .5-9.3 .5 4.9 .5 3.4 .5-1.6 .5-.9 .5-3.8 .5 9.4 .5-2.1 .5 61 .5-73.5 .5 3.4 .5 4.3 .5-3.2 .5-4.5 .5 8.5 .5 .7 .5-7 .5 3.3 .5-.9 .5 4.9 .5-9.5 .5 0 .5 73.5 .5-69.5 .5 11.6 .5-11.3 .5 3.4 .5-2.4 .5-.8 .5 3.9 .5 5.3 .5-8.3 .5 68.1 .5-65 .5 1.1 .5-.7 .5 7.3 .5-13.5 .5 3.9 .5-4 .6-2.6 .5 7.4 .5 7.4 .5-3.4 .5 1.6 .5-2.7 .5-3 .5 8.4 .5-9.6 .5 7.4 .5-7.6 .5 1.3 .5 1.3 .5-.8 .5 1.8 .5 .2 .5 4.5 .5-6.4 .5-7.8 .5 0 .5 1.9 .5 2.5 .5 5.7 .5-9.3 .5 6.4 .5-.3 .5 1.2 .5-1.6 .5 2.5 .5-1.4 .5 4.5 .5-2.3 .5-9.8 .5 8.9 .5 .4 .5-3.7 .5-.9 .5 7.3 .5-3.9 .5 65.4 .5-67.6 .5 1.2 .5-6.4 .5 9.1 .6-2.9 .5 2.7 .5-8.5 .5 14.6 .5-5.3 .5-.3 .5-5.4 .5 .2 .5-3.3 .5 12.3 .5-9.7 .5 4.7 .5 2 .5-5.1 .5 6.6 .5 3.8 .5-6 .5 4.1 .5-3.6 .5-4.4 .5-.3 .5-4.8 .5 6.8 .5 5.5 .5-3.4 .5 .9 .5 1.3 .5-7.1 .5 4.6 .5 6 .5-11.2 .5 3.5 .5-1.9 .5 1.2 .5-2.3 .5 2.4 .5-5.2 .5 3.2 .5 .2 .5-.3 .5 8.2 .5-5.5 .5 .7 .5-1.9 .6 6.8 .5-12.5 .5 5.9 .5 5.7 .5 60.7 .5-64.6 .5-1.4 .5 2.8 .5-3 .5 3.1 .5-4.9 .5 5.3 .5-2.6 .5-4.6 .5-3.6 .5 11.8 .5-2.5 .5 1.8 .5-6.6 .5 8.4 .5-3.3 .5-1.7 .5 3.8 .5-.1 .5-2.2 .5 6.7 .5-2.6 .5-4.4 .5-2.2 .5 1.4 .5 6.3 .5 58.9 .5-69.9 .5 1 .5 3 .5 3.2 .5-6.4 .5 5.3 .5 2.4 .5-1.8 .5-9.9 .5 5.1 .5-3.6 .5 6.5 .6-5.5 .5 6.4 .5-1.8 .5-7.5 .5 3.1 .5 5.4 .5-1.8 .5-1.2 .5-3.7 .5 7.5 .5 5.7 .5-6 .5-1.1 .5-.3 .5-5 .5 4 .5-2.1 .5 69 .5-69.2 .5-4.3 .5 4.7 .5 2.4 .5 .7 .5-6.9 .5 11.2 .5-3.9 .5-2.2 .5-1.3 .5 4.9 .5-2.9 .5 2.4 .5-1.4 .5 .8 .5 4 .5-5.4 .5-3.6 .5 7.6 .5-3.2 .5-3.8 .5 7.7 .5-4.7 .5 4.8 .5-9 .5-2.9 .6 0 .5 8 .5-4.1 .5 3.2 .5 .2 .5-5.6 .5 12.7 .5-9.6 .5 4.3 .5-6.6 .5 5.3 .5 3.3 .5-4.9 .5-2.1 .5 3.2 .5-1.8 .5 3.9 .5 6.4 .5-12.6 .5 .8 .5 2.6 .5 .2 .5-3.9 .5 6.2 .5 1.4 .5-2 .5-6.1 .5 11.3 .5 59.8 .5-63.6 .5 1.8 .5-10.1 .5 5.6 .5 5.3 .5-3.6 .5-5.1 .5-1.2 .5 7.2 .5-3.4 .5-1.8 .5 5.5 .5-4.3 .5 1.7 .5 1.5 .6-.1 .5-2.3 .5 .8 .5 2.2 .5-.8 .5-6.3 .5 3.5 .5-2.9 .5-1.8 .5 3 .5-4.3 .5 10.7 .5-7.1 .5 4.6 .5-8.2 .5 0 .5 15.3 .5-4.4 .5-6.7 .5-.4 .5 .3 .5 3.5 .5-2.3 .5-.7 .5 3.3 .5-4.6 .5 12.9 .5-11.6 .5 7.4 .5-8.1 .5 5 .5 2.6 .5-5.2 .5 5.3 .5-.7 .5 2.8 .5-6.6 .5-2 .5-2.4 .5 5.3 .5-4.8 .5 3.8 .5 .4 .5-2.7 .6-1.8 .5 5.6 .5-.1 .5 .4 .5-1.4 .5 4.3 .5-8.6 .5 5.8 .5-4 .5 5 .5-5.1 .5-.3 .5 3.8 .5-8.3 .5 5.7 .5-5.7 .5 73.5 .5-63.3 .5-1.1 .5-3.6 .5 1.5 .5 .4 .5 1.6 .5 6.1 .5-6.8 .5 7.9 .5-10.5 .5 4.6 .5-.1 .5-2.4 .5-2.3 .5 7.1 .5 1.8 .5-3 .5 4.6 .5-3.7 .5-10.8 .5 10.9 .5-7.5 .5 9 .5-7.4 .5 2.5 .5-1.1 .5-3 .6-4.9 .5 6.2 .5 .5 .5 4.5 .5-6.4 .5 4.2 .5-4.5 .5 3.8 .5-8 .5 15.4 .5-7.4 .5-5.1 .5 5.1 .5 1.6 .5-1.8 .5 5 .5-5.8 .5-7.3 .5 3.1 .5 9.5 .5-1.1 .5-2.3 .5-5.8 .5 7.5 .5-.4 .5-6.7 .5 .2 .5 5.2 .5 2.7 .5 1.9 .5-3.3 .5 5.7 .5-12.1 .5 6.4 .5-4.9 .5-5.6 .5 1.8 .5 10 .5-8.3 .5-1.4 .5 7.8 .5 1 .5-3.6 .5 6.3 .6-13 .5 15.6 .5-4 .5-3.8 .5 .5 .5-2 .5-.5 .5 1.9 .5-5.7 .5 13.6 .5-8.7 .5 3.3 .5-3.3 .5-.5 .5 4.9 .5-1 .5-6 .5 1.5 .5 4.5 .5-10.9 .5 0 .5 14 .5-7.6 .5-6.4 .5 4 .5 2.5 .5 1.6 .5 1.2 .5-1 .5 1.2 .5-5.1 .5 4.5 .5 .3 .5 3.4 .5-5 .5 3.6 .5-3.2 .5-4.8 .5 70.3 .5-67.9 .5 .5 .5 1.4 .5 1.4 .5 .6 .6-4.7 .5 7.7 .5-9.8 .5 5.4 .5 3.1 .5-1.2 .5 1.2 .5-3.6 .5 3.3 .5-7.8 .5 7.7 .5 5.4 .5-5.2 .5 5.2 .5-8.2 .5-4.7 .5 70.2 .5-60.3 .5-2.7 .5-10.5 .5 5.5 .5 1.5 .5-4 .5-3 .5 2.5 .5 4.7 .5-.6 .5-1.1 .5 5.1 .5 1.7 .5-5.3 .5 5 .5-3.6 .5-.7 .5-7.7 .5 11.3 .5-2.7 .5-.1 .5-2.2 .5-3.1 .5 6.5 .5 1.3 .5 62.5 .5-61.9 .6-6.2 .5 2.3 .5 4.7 .5-2.8 .5 63.9 .5-67.9 .5 4.5 .5-1.7 .5 6.1 .5-2.7 .5-11.7 .5 15.9 .5-7.6 .5-1.9 .5 2.9 .5 2 .5-3.4 .5-.2 .5 .1 .5 7.4 .5-7.1 .5 3 .5-1.1 .5-3.2 .5-1.7 .5-1.1 .5 5.9 .5-6.1 .5-.8 .5 .1 .5-.9 .5 6.9 .5-.2 .5-4.2 .5 8.9 .5-6.7 .5 3.2 .5-1 .5 5.9 .5-3.4 .5-3.7 .5-3.7 .5-.5 .5 4.2 .6 .4 .5 2.7 .5-5.3 .5 2.9 .5-3.7 .5 68.5 .5-65.9 .5 5.9 .5-2.4 .5 2.2 .5-1.1 .5-10.5 .5 4.5 .5 7.8 .5-9.4 .5-2.9 .5 6.7 .5 1.4 .5-1 .5-3.2 .5-1.3 .5-1.5 .5 0 .5 .5 .5-.8 .5 3.3 .5 8.9 .5-6.4 .5-1.8 .5 2.2 .5-6.1 .5 5.3 .5 2.7 .5-9.8 .5 3.5 .5 2.2 .5-2.7 .5-.7 .5 2.8 .5 10.3 .5-6.3 .5-1 .5 2.2 .5-5.2 .6-4 .5 6.9 .5 2.7 .5-11.5 .5 9.5 .5 3.3 .5 60.7 .5-67.6 .5 5.2 .5-6.5 .5 5.2 .5 2.1 .5-4.1 .5-2.4 .5 5.4 .5-4.3 .5 1.8 .5-8.3 .5 10.1 .5-8.3 .5 6.3 .5 .2 .5-3.8 .5-1.1 .5-1.7 .5 3.3 .5 3.8 .5-.3 .5-4.1 .5 .1 .5-3.4 .5 3.7 .5-2.6 .5-1.7 .5 5.5 .5 6.6 .5-1.1 .5 1.2 .5-12.5 .5 73.3 .5-71.7 .5 2.9 .5-4.7 .5 3.3 .6 4.7 .5 .3 .5-1.1 .5 .1 .5 3 .5-2.6 .5-7.2 .5 14.1 .5-8.6 .5 4.6 .5-4.6 .5-2.4 .5 4 .5-3.6 .5 10.3 .5-11.5 .5 7.3 .5-5.1 .5 1.6 .5 9.6 .5-5.6 .5-3.8" stroke="#16a5e8" stroke-width="1.8" stroke-linejoin="round"/></svg>
<span class="t" style="left:464.0px;top:260.7px;font-size:10px;font-weight:400;color:#9ba0ad;">Mar 7</span>
<span class="t" style="left:505.0px;top:260.7px;font-size:10px;font-weight:400;color:#9ba0ad;">12:00:00pm</span>
<span class="t" style="left:574.2px;top:260.7px;font-size:10px;font-weight:400;color:#9ba0ad;">Mar 8</span>
<span class="t" style="left:615.0px;top:260.7px;font-size:10px;font-weight:400;color:#9ba0ad;">12:00:00pm</span>
<span class="t" style="left:684.8px;top:260.7px;font-size:10px;font-weight:400;color:#9ba0ad;">Mar 9</span>
<span class="t" style="left:726.0px;top:260.7px;font-size:10px;font-weight:400;color:#9ba0ad;">12:00:00pm</span>
<div style="position:absolute;left:436px;top:284.90000000000003px;width:7.6px;height:7.6px;background:#16a5e8;border-radius:1.5px;"></div>
<span class="t" style="left:448.4px;top:282.6px;font-size:11.8px;font-weight:400;color:#a0a5b3;">default/mysql-0/mysql</span>
<div style="position:absolute;left:572.3px;top:284.90000000000003px;width:7.6px;height:7.6px;background:#5cc8c2;border-radius:1.5px;"></div>
<span class="t" style="left:584.6px;top:282.6px;font-size:11.8px;font-weight:400;color:#a0a5b3;">default/mysql-1/mysql</span>
<div style="position:absolute;left:819px;top:97px;width:396px;height:206px;background:#222737;border:1px solid #2c3142;border-radius:8px;box-sizing:border-box;"></div>
<span class="t m" style="left:834.0px;top:114.1px;font-size:11.6px;font-weight:400;color:#e6e8ee;-webkit-text-stroke:0.45px currentColor;">Average query latency</span>
<svg style="position:absolute;left:1186px;top:118px" width="11" height="4" viewBox="0 0 11 4"><g fill="#7d8294"><circle cx="1.5" cy="2" r="1"/><circle cx="5.2" cy="2" r="1"/><circle cx="8.9" cy="2" r="1"/></g></svg>
<span class="t" style="right:376.4px;top:159.9px;font-size:10px;font-weight:400;color:#9ba0ad;">4</span>
<div style="position:absolute;left:855px;top:164px;width:337px;height:1px;background:#2b3043;"></div>
<span class="t" style="right:376.4px;top:182.0px;font-size:10px;font-weight:400;color:#9ba0ad;">3</span>
<div style="position:absolute;left:855px;top:186px;width:337px;height:1px;background:#2b3043;"></div>
<span class="t" style="right:376.4px;top:204.1px;font-size:10px;font-weight:400;color:#9ba0ad;">2</span>
<div style="position:absolute;left:855px;top:208px;width:337px;height:1px;background:#2b3043;"></div>
<span class="t" style="right:376.4px;top:226.2px;font-size:10px;font-weight:400;color:#9ba0ad;">1</span>
<div style="position:absolute;left:855px;top:230px;width:337px;height:1px;background:#2b3043;"></div>
<span class="t" style="right:376.4px;top:248.2px;font-size:10px;font-weight:400;color:#9ba0ad;">0</span>
<div style="position:absolute;left:854px;top:252px;width:339px;height:3px;background:#363b4f;border-radius:1px;"></div>
<svg style="position:absolute;left:0;top:0" width="1224" height="896" viewBox="0 0 1224 896" fill="none"><path d="M855 201.2l.5-.3 .5-12.3 .5-2.9 .5 13.2 .5-13.7 .5 16.4 .5-1 .5 .6 .5-5.6 .5-8.8 .5-3.6 .5 16.3 .5 3.9 .4 1 .5-6.8 .5 2.3 .5 1.8 .5-5.2 .5 4.3 .5-1.3 .5 3.8 .5-5.8 .5 5.9 .5-.5 .5-1.2 .5 3.1 .5-3.2 .5-1.3 .5-1 .5 4.8 .5-6.6 .5 7.5 .5-2.9 .5 1.2 .5 2.2 .5-2 .5-1.8 .5 0 .5 .5 .5 .3 .4-1.3 .5-.1 .5-11.9 .5 5.5 .5 2 .5-5.8 .5 8.6 .5-4.1 .5-3.3 .5 9.4 .5-7 .5-4 .5 13.6 .5 .4 .5-.8 .5-11.6 .5-3.9 .5 16.4 .5-6.7 .5-1.2 .5-1.6 .5 3.4 .5 5.7 .5-1.5 .5-.9 .5-1.5 .5-1.3 .4 6.4 .5-4.2 .5-14.5 .5 14.6 .5-3.2 .5 3.2 .5 2.3 .5-8.4 .5 2.6 .5 3.9 .5-2.3 .5 2.2 .5-1.5 .5 .4 .5 4.9 .5-.3 .5-1.6 .5-2.7 .5-.7 .5 4 .5-3.5 .5-1.1 .5-.5 .5-7.7 .5 10.5 .5-1.3 .5 2.4 .5-3.7 .4-.1 .5 3.1 .5-5.4 .5 5 .5 .9 .5 .2 .5-2 .5 .8 .5 2.4 .5-4.3 .5 .8 .5-.1 .5 .1 .5-18.6 .5 16.6 .5 1.4 .5-17.2 .5 13.8 .5 3.5 .5-2 .5-1.3 .5 4.5 .5-6.9 .5 8.4 .5-10 .5 8.2 .5-1.5 .4 3.9 .5-7.7 .5 8.4 .5-2 .5 1.2 .5-1.7 .5-15.9 .5 2.6 .5 10.4 .5 .9 .5 2.7 .5-23.3 .5 22.3 .5-1.8 .5-16 .5 18.7 .5-8.3 .5 1.5 .5 6 .5 1.7 .5-4.9 .5 .2 .5 4.3 .5-13.9 .5 11.6 .5 1.6 .5-.4 .4 4.1 .5-.8 .5-19.4 .5 21.5 .5-5.9 .5 .4 .5 1 .5-.6 .5-8.5 .5 9.3 .5-2.8 .5 3.7 .5-1 .5 0 .5-10.2 .5 8.9 .5-11 .5 12.7 .5-10.2 .5-7.9 .5 5 .5-11.5 .5 20.9 .5 6.1 .5-9.9 .5 1.8 .5 5.4 .4 .3 .5-7.6 .5 8.2 .5-1.5 .5 2.2 .5-3.6 .5 1.4 .5-13.2 .5 15.4 .5-13 .5 10 .5-2.6 .5-3.3 .5-13.6 .5 20.4 .5 1.3 .5-5.5 .5 1.6 .5 .3 .5-4.1 .5-6.7 .5 11.6 .5 2.7 .5-2.7 .5-.7 .5-17.1 .5 19 .4-12.3 .5 13.9 .5-4.4 .5 4.1 .5 1.9 .5-1.4 .5-3.7 .5 3.3 .5-.1 .5-1.4 .5 .6 .5-8.4 .5 9.6 .5-.7 .5-.3 .5-8.5 .5 8.3 .5-10.3 .5 6.6 .5-15.5 .5 19.3 .5-2.9 .5-4.3 .5 9.4 .5-5 .5 4 .5-14 .4 16.7 .5-2.2 .5-2.6 .5 3.4 .5-1.8 .5-4.6 .5 3.9 .5-11 .5 10.8 .5 1.9 .5-6.3 .5 6.3 .5-4.1 .5 1.6 .5-2.2 .5-4.1 .5 8.6 .5-1.3 .5-17.6 .5 19.1 .5 .2 .5-2.4 .5-2.1 .5 2.8 .5 1.4 .5-3.2 .5 .3 .5-1.8 .4 5.7 .5-3.3 .5 1.5 .5-1.4 .5-4.6 .5 .5 .5 4.3 .5-10.7 .5 10.5 .5 .7 .5-.2 .5 1 .5 1.2 .5 .9 .5-3.6 .5-1.6 .5 1.6 .5 .8 .5 1.3 .5-2.6 .5 4.9 .5-6.5 .5-24.1 .5 26.2 .5 0 .5 .4 .5-.3 .4 .1 .5 .8 .5-3.8 .5-1.7 .5 7.8 .5-4.6 .5 3.4 .5-7.2 .5 2.1 .5-.6 .5-.7 .5 8 .5-5.6 .5-16.3 .5 2.8 .5 18.4 .5-.3 .5-1.6 .5 .6 .5-.2 .5-6.2 .5 4.5 .5 .6 .5-16.1 .5 18.3 .5-3 .5 1.4 .4 .1 .5 .7 .5-3 .5-3.3 .5-.2 .5 4.2 .5 1.2 .5 1.1 .5-2.5 .5 3.1 .5 .2 .5-1.7 .5 .1 .5-1 .5-2 .5 3.5 .5-6.6 .5 8.7 .5-1.8 .5-4.3 .5 1.3 .5-2.7 .5-3.4 .5 7.8 .5 .4 .5 1 .5-.7 .4-.2 .5-10.8 .5 8.8 .5-12.5 .5 13.6 .5 .3 .5-1.1 .5 1.1 .5 .5 .5 .2 .5-1.8 .5-24.8 .5 22.1 .5 2.9 .5-18.1 .5 5.8 .5 15.6 .5-.2 .5-.3 .5-2.2 .5 2.5 .5-2.7 .5-2.7 .5-8.2 .5 11.3 .5-3.5 .5-2.9 .4 6.8 .5 1.2 .5-1 .5-.1 .5 .6 .5 1.2 .5-4.6 .5 2.8 .5-14.8 .5 15.3 .5 2.2 .5-12.5 .5 12.2 .5-8.9 .5 6.7 .5 1.5 .5-14.6 .5 12.3 .5 .7 .5-8.1 .5 7 .5-1.8 .5 3.9 .5-2.2 .5-12 .5-2.8 .5 12.1 .4-5.3 .5-7.3 .5 10.3 .5 2.5 .5-11.3 .5 15.5 .5-4.2 .5 .6 .5 3.9 .5-3.7 .5-4.7 .5 11.3 .5-3.7 .5 0 .5-1.4 .5 .1 .5-4.9 .5 9.7 .5-5.1 .5-.7 .5 2.2 .5 .7 .5-1.7 .5-3.1 .5 3.1 .5 .1 .5 1.4 .4-4.3 .5-6.9 .5 2 .5-13.9 .5 25.1 .5-1.7 .5-1 .5-20.7 .5 15.5 .5 .7 .5-.5 .5 4 .5-1.7 .5 3.8 .5 .4 .5-17.7 .5 17.3 .5 .5 .5-23.9 .5 25 .5-5.5 .5 .6 .5 3.1 .5-.4 .5-.3 .5 2.3 .5-1.7 .5-4.4 .4-2 .5 4.7 .5 1 .5-21.3 .5 13.1 .5 6.7 .5-1.5 .5-.7 .5-.6 .5 5.3 .5-1.9 .5-5.2 .5 5.3 .5 3.1 .5 .2 .5-13.1 .5 6.7 .5 3.8 .5-3.5 .5-3.3 .5-10.4 .5 19.3 .5-3 .5-3.2 .5 4.1 .5 3.3 .5-18.3 .4 17.3 .5-9.9 .5 3.8 .5-13.8 .5 22.7 .5-6 .5-1 .5 0 .5-8.5 .5 11.2 .5 2 .5 .3 .5-3.6 .5-3 .5 4.9 .5 .1 .5-3 .5 3.4 .5-2.6 .5-7.7 .5-11.8 .5 20 .5-2.5 .5-2.8 .5 7.6 .5-1.8 .5-1.8 .4-2 .5 .4 .5-3 .5 6.9 .5-1.8 .5-13.9 .5-2.9 .5 18.3 .5 2.8 .5-4.9 .5 1.9 .5-14.4 .5 12.9 .5 1.5 .5-1.2 .5 .2 .5-2.9 .5 1.8 .5 2.8 .5-.6 .5-8.8 .5 6.1 .5-1.2 .5 1.8 .5 2.7 .5-13 .5 4.7 .4-8.2 .5 7.9 .5 6.5 .5 1.4 .5-3 .5-.2 .5-.7 .5 1.2 .5 3.7 .5 1.8 .5-3.7 .5-.7 .5 .4 .5 2 .5-19.8 .5 12.3 .5-2.3 .5 7.5 .5-2.4 .5 2.3 .5-4.4 .5 3.4 .5 1.3 .5-10.6 .5 12.2 .5-.3 .5-.5 .4-2.8 .5 3.6 .5-1.4 .5-.8 .5-2.6 .5-.2 .5 7.2 .5-1.7 .5-8.1 .5 7.1 .5-1.4 .5 1.6 .5 1.6 .5-3.5 .5 .4 .5-5.1 .5 5.5 .5 4.1 .5-4.5 .5 2.9 .5-5.9 .5-5 .5 13.9 .5-2.5 .5 2.1 .5-5.3 .5 1.7 .4-.4 .5 2.1 .5-7.7 .5 3.3 .5 2.6 .5 2.4 .5-5.9 .5 3.3 .5-1.6 .5-7.8 .5 8.4 .5-2.1 .5-3 .5 2.5 .5-1.8 .5-31.7 .5 37.9 .5-2 .5-3.6 .5 4.9 .5-2.9 .5 4.3 .5-12 .5 5.1 .5 6.8 .5 .9 .5-3.9 .5 1.8 .4 1.8 .5-2 .5 .4 .5 .8 .5-2.1 .5 2.3 .5-3.9 .5 3 .5-1.9 .5 .9 .5 .6 .5-.6 .5 .7 .5 3.5 .5-.6 .5-1.9 .5-3 .5-1.4 .5 0 .5 2.4 .5 3.3 .5-5.2 .5 3.3 .5-1.1 .5-7.4 .5 5.7 .5-.9 .4 4.4 .5-.5 .5-3.3 .5-10.1 .5 .9 .5 11.4 .5 1.6 .5-3.6 .5 .6 .5 3.2 .5-4.7 .5 3.7 .5-14.6 .5 12.6 .5-.5 .5-7.3 .5 6.4 .5-.3 .5 1.9 .5-.5 .5 1.2 .5-1.5 .5 3.4 .5-5.4 .5 5.7 .5-8.7 .5 4.2 .4-1.5 .5 .1 .5 3.1 .5-5.8 .5-5.3 .5 15.1 .5-16.6 .5 13.6 .5-2.9 .5 5.1 .5-3 .5 1.3 .5-14.6 .5 3.2" stroke="#16a5e8" stroke-width="1.6" stroke-linejoin="round"/><path d="M855 205.1l.5 2.7 .5 0 .5 1.9 .5-2.4 .5 0 .5 1.3 .5-1.3 .5 1.5 .5-2 .5 1.4 .5 1.2 .5-1.1 .5 .9 .4 .9 .5-2.7 .5-.1 .5-1.1 .5 2.6 .5-.7 .5 .1 .5-2.5 .5 1.5 .5 1.9 .5-2 .5 0 .5 3.3 .5-2.8 .5 1 .5 .1 .5-3.8 .5 .3 .5 1 .5 0 .5 3.3 .5-.6 .5-2.2 .5 3.8 .5-.7 .5 1.3 .5-6 .4 1 .5 1.2 .5 .4 .5 .6 .5-.1 .5-1.3 .5 1.6 .5-7.5 .5 6.5 .5 .7 .5-2.4 .5 2.2 .5-.6 .5 1.6 .5 2.1 .5-3.7 .5-1.9 .5 .8 .5 2.9 .5 .6 .5-3 .5-.6 .5 .8 .5 2 .5-2.3 .5 2.3 .5-1.8 .4 .7 .5 .3 .5-1 .5 1.6 .5-1.8 .5-1.3 .5 3.9 .5-1 .5-.4 .5-.1 .5-.8 .5 3.3 .5-3.8 .5-.4 .5 1.6 .5 1.1 .5-1.3 .5-.4 .5-1.2 .5 .3 .5-.7 .5 1.3 .5-8.8 .5 12.2 .5-1.6 .5-2.2 .5 1.6 .5-2 .4 2.9 .5-1.3 .5 1 .5-.6 .5-1.2 .5-.6 .5 .6 .5-3.1 .5 2.9 .5 .7 .5-2.1 .5 .5 .5 0 .5-.4 .5 3.4 .5-3 .5-1 .5 1.9 .5 .7 .5 5.1 .5-3.5 .5-4.1 .5 4.6 .5-1.3 .5-6.3 .5 4.7 .5-5.3 .4 8.5 .5-8.9 .5 5.3 .5 3.7 .5-7.2 .5 3.2 .5 0 .5 .4 .5 4.4 .5-3.2 .5-1.3 .5 1 .5-.4 .5-3 .5 4.6 .5 .7 .5-2.2 .5 .4 .5 .5 .5-.3 .5-.5 .5 .5 .5 2.3 .5-1.7 .5-1 .5 1.4 .5-2.2 .4-.1 .5 1.8 .5-2.5 .5-1.5 .5 .5 .5 2.3 .5-1.7 .5 1.5 .5 1.4 .5-2.3 .5 1.3 .5 .9 .5 1.3 .5-.5 .5-.4 .5-1.6 .5-.9 .5 .9 .5-1.2 .5 3.3 .5-1.4 .5-3.3 .5 .4 .5 2.1 .5 .7 .5 1.4 .5-1.7 .4-.4 .5 2.5 .5-3 .5-.6 .5 .3 .5 2.6 .5-1.7 .5 2.6 .5-4.1 .5 .7 .5 2.1 .5-3.2 .5 .9 .5 2 .5-4 .5 4.8 .5-1.7 .5-1.4 .5 1.8 .5-1.7 .5 1.6 .5-.1 .5 1 .5-6.9 .5 8.9 .5 .4 .5-1.8 .4 .7 .5-4.4 .5 3.6 .5-.7 .5-5.3 .5 4.2 .5-.9 .5-.1 .5 1.6 .5-.3 .5 .3 .5-.6 .5 .5 .5 .9 .5 1.8 .5-5.9 .5 1.6 .5 1 .5-.1 .5 1 .5-2.9 .5 2.9 .5 0 .5 .9 .5 1.1 .5-1.2 .5-3.6 .4 3.6 .5-.9 .5 2.3 .5-2 .5-.2 .5 1.5 .5 .6 .5-2.6 .5 1.3 .5-1.4 .5-4.1 .5 4.3 .5 1.4 .5 1.6 .5-2.6 .5 .2 .5-1.1 .5 1.8 .5-.3 .5-.7 .5-.7 .5 .8 .5-6.9 .5 5.8 .5-.3 .5-.5 .5 1.1 .5 .9 .4 1.4 .5-3.8 .5 2.4 .5-.3 .5 1.1 .5-.1 .5-1.1 .5-1.5 .5 3.1 .5-2.4 .5 3.3 .5-2.1 .5 .2 .5-2.1 .5-.9 .5 1.6 .5 .8 .5 1.4 .5-.4 .5-.8 .5 3 .5-3.6 .5 0 .5-6 .5 6.4 .5-.5 .5 1.3 .4-.5 .5 2 .5-2.8 .5-1.2 .5 1.7 .5-.2 .5 1.7 .5-3 .5 3.3 .5-2.7 .5 1.1 .5 1 .5-2.9 .5 .9 .5 .6 .5 .1 .5 .4 .5 0 .5-1.5 .5 1.3 .5-.9 .5 1.5 .5 1.5 .5-.8 .5-.4 .5-1 .5-1.8 .4 3.9 .5-2.2 .5 3.1 .5-1.1 .5-.4 .5 2.8 .5-1.1 .5-2.8 .5-.1 .5 .5 .5 .5 .5-4.1 .5 3.4 .5 1.1 .5-2.8 .5 .2 .5 1.5 .5-2.4 .5 2 .5-.8 .5-2.6 .5 4.2 .5-2.8 .5 .7 .5 1.7 .5 .2 .5-2.6 .4 1.9 .5-1.3 .5 .2 .5 .6 .5 2.4 .5-3 .5-.9 .5 0 .5-1.1 .5 2.4 .5-.6 .5-1.6 .5 2.3 .5-2.8 .5-.1 .5 1.9 .5-.7 .5 2.2 .5 1.8 .5-10.1 .5 7.2 .5 .3 .5 1 .5-1.8 .5 .9 .5 1.6 .5-1.3 .4 .1 .5 1.6 .5-.4 .5-.9 .5 .9 .5-.8 .5-.5 .5-1.6 .5 .6 .5-3.6 .5 2.9 .5-.8 .5 2.6 .5-.5 .5 .4 .5 .4 .5-.3 .5-6.6 .5 6.5 .5 1.8 .5-1.7 .5 .8 .5 .1 .5-.1 .5-1.2 .5 1.6 .5-.7 .4 2.4 .5 1.2 .5-1 .5-3.9 .5 4.2 .5-2.7 .5-1.7 .5 2.1 .5-3 .5-.5 .5 1.3 .5-1 .5 1.8 .5 1.9 .5-2.2 .5 1 .5 1 .5-.5 .5-4.5 .5 4.4 .5-.3 .5 .9 .5-.9 .5 .1 .5 .4 .5 .3 .5 1.1 .4-.9 .5-1.3 .5-2.6 .5 1.4 .5-.2 .5-2.7 .5 5.1 .5 1.7 .5-1 .5 2.8 .5-3.5 .5-2.5 .5 1.3 .5-.5 .5 .8 .5 1.2 .5-2.2 .5 1.1 .5-2.2 .5 0 .5-3 .5 5.5 .5 0 .5 .9 .5 1.9 .5-1.8 .5-.6 .5-.1 .4 2.1 .5-5.5 .5 5.4 .5-3.6 .5 2.8 .5-.8 .5-.1 .5 .2 .5 .3 .5 .6 .5-5.2 .5 2.3 .5-.4 .5-2.8 .5 3 .5-.1 .5 .9 .5-1.4 .5 .7 .5 .7 .5-5 .5 5.2 .5-.5 .5 4.2 .5-1.9 .5-1.1 .5-.9 .4 1 .5-2.8 .5 2.3 .5-.9 .5 .1 .5 1.6 .5-.8 .5 2.1 .5-.7 .5-.7 .5 .1 .5-.4 .5-.6 .5-2.9 .5 1.8 .5 2 .5-1.2 .5 .9 .5-.1 .5 .1 .5 .3 .5-2.9 .5 2.3 .5 1.2 .5-6.2 .5 5.2 .5-3 .4 1 .5-.6 .5 5.5 .5-4.4 .5-.4 .5-.9 .5 2.7 .5 1.5 .5-3.7 .5 1.4 .5 2.3 .5-.7 .5-2 .5-1 .5 .3 .5 2.3 .5-4 .5 4.7 .5-1.6 .5 1.6 .5-3.4 .5-4.2 .5 4.3 .5 .5 .5 .3 .5-.4 .5 3.1 .4-3.3 .5 .4 .5 2.1 .5-.2 .5-.9 .5-1.8 .5 1 .5 .4 .5 1.9 .5 1.4 .5-7.9 .5 1.6 .5 4.8 .5-1.1 .5-1.3 .5 .7 .5 .2 .5 0 .5 .7 .5 .1 .5-.7 .5-4 .5 2.9 .5 2.2 .5-2.8 .5 1.5 .5 0 .4 1.5 .5 .7 .5-3 .5 1.5 .5-.3 .5 .2 .5-1.1 .5 .8 .5 .7 .5 1.5 .5-2 .5-.6 .5-2 .5 2 .5-.3 .5-1.4 .5 1.6 .5 .4 .5-.1 .5 2.3 .5-3.1 .5 .5 .5 .8 .5 .9 .5-2.4 .5-1.3 .5 3 .4 .1 .5-1.6 .5 2.6 .5 1.4 .5-2.8 .5 .1 .5-.2 .5 .1 .5-1.4 .5 .9 .5 .7 .5 .3 .5-1.4 .5-.3 .5 .4 .5-6.1 .5 10.6 .5-4.1 .5-1.1 .5 .3 .5 2.5 .5-3.3 .5 1.2 .5 1.1 .5-.9 .5 .3 .5 1.1 .5-2 .4 1.9 .5 1.2 .5-.9 .5-1.4 .5 1 .5-2.8 .5 3.7 .5-3.2 .5 1.1 .5 2.7 .5-1.6 .5-1.8 .5 2 .5 1.6 .5-2 .5-2.6 .5 4.7 .5-3.1 .5-.2 .5 .4 .5 1.5 .5 .2 .5-1.9 .5 .1 .5 2.5 .5-10.5 .5 11 .4-1.9 .5 1.3 .5-2.7 .5 .4 .5-.8 .5 1.7 .5-1.7 .5 .3 .5-2.1 .5 3.9 .5-3 .5 .8 .5 .3 .5 1.4 .5-1.1 .5-2.7 .5 5.5 .5-2.8 .5 2.8 .5-4.2 .5 2 .5-1.1 .5 1.1 .5-8.2 .5 9.2 .5-.2 .5 .2 .4-2.2 .5-.7 .5-.2 .5 2 .5 1.1 .5 1.8 .5-4.1 .5 .3 .5 2.2 .5-.9 .5-1.2 .5 .8 .5-1.6 .5 .7" stroke="#5cc8c2" stroke-width="1.6" stroke-linejoin="round"/></svg>
<span class="t" style="left:863.2px;top:260.7px;font-size:10px;font-weight:400;color:#9ba0ad;">Mar 7</span>
<span class="t" style="left:904.5px;top:260.7px;font-size:10px;font-weight:400;color:#9ba0ad;">12:00:00pm</span>
<span class="t" style="left:975.6px;top:260.7px;font-size:10px;font-weight:400;color:#9ba0ad;">Mar 8</span>
<span class="t" style="left:1017.0px;top:260.7px;font-size:10px;font-weight:400;color:#9ba0ad;">12:00:00pm</span>
<span class="t" style="left:1087.8px;top:260.7px;font-size:10px;font-weight:400;color:#9ba0ad;">Mar 9</span>
<span class="t" style="left:1129.6px;top:260.7px;font-size:10px;font-weight:400;color:#9ba0ad;">12:00:00pm</span>
<div style="position:absolute;left:840.5px;top:284.90000000000003px;width:7.6px;height:7.6px;background:#16a5e8;border-radius:1.5px;"></div>
<span class="t" style="left:852.6px;top:282.6px;font-size:11.8px;font-weight:400;color:#a0a5b3;">default/mysql-0/mysql</span>
<div style="position:absolute;left:976.5px;top:284.90000000000003px;width:7.6px;height:7.6px;background:#5cc8c2;border-radius:1.5px;"></div>
<span class="t" style="left:988.6px;top:282.6px;font-size:11.8px;font-weight:400;color:#a0a5b3;">default/mysql-1/mysql</span>
<div style="position:absolute;left:253px;top:312px;width:314px;height:206px;background:#222737;border:1px solid #2c3142;border-radius:8px;box-sizing:border-box;"></div>
<span class="t m" style="left:268.0px;top:329.1px;font-size:11.6px;font-weight:400;color:#e6e8ee;-webkit-text-stroke:0.45px currentColor;">Queries by total time</span>
<svg style="position:absolute;left:538px;top:333px" width="11" height="4" viewBox="0 0 11 4"><g fill="#7d8294"><circle cx="1.5" cy="2" r="1"/><circle cx="5.2" cy="2" r="1"/><circle cx="8.9" cy="2" r="1"/></g></svg>
<span class="t" style="right:937.2px;top:375.0px;font-size:10px;font-weight:400;color:#9ba0ad;">60</span>
<div style="position:absolute;left:294px;top:379px;width:250px;height:1px;background:#2b3043;"></div>
<span class="t" style="right:937.2px;top:389.7px;font-size:10px;font-weight:400;color:#9ba0ad;">50</span>
<div style="position:absolute;left:294px;top:394px;width:250px;height:1px;background:#2b3043;"></div>
<span class="t" style="right:937.2px;top:404.4px;font-size:10px;font-weight:400;color:#9ba0ad;">40</span>
<div style="position:absolute;left:294px;top:409px;width:250px;height:1px;background:#2b3043;"></div>
<span class="t" style="right:937.2px;top:419.1px;font-size:10px;font-weight:400;color:#9ba0ad;">30</span>
<div style="position:absolute;left:294px;top:423px;width:250px;height:1px;background:#2b3043;"></div>
<span class="t" style="right:937.2px;top:433.8px;font-size:10px;font-weight:400;color:#9ba0ad;">20</span>
<div style="position:absolute;left:294px;top:438px;width:250px;height:1px;background:#2b3043;"></div>
<span class="t" style="right:937.2px;top:448.5px;font-size:10px;font-weight:400;color:#9ba0ad;">10</span>
<div style="position:absolute;left:294px;top:453px;width:250px;height:1px;background:#2b3043;"></div>
<span class="t" style="right:937.2px;top:463.2px;font-size:10px;font-weight:400;color:#9ba0ad;">0</span>
<svg style="position:absolute;left:0;top:0" width="1224" height="896" viewBox="0 0 1224 896" fill="none"><path d="M294 460.9l.7-2.6 .8-1.6 .7 1.3 .7-.2 .8 .1 .7 1 .8 .8 .7-2.4 .7-.2 .8 .6 .7 0 .7 0 .8 .5 .7-.3 .8 .5 .7-.3 .7 1.3 .8-.5 .7-1.3 .7 .9 .8 2.3 .7-2.9 .8 2.8 .7-4.8 .7 1.4 .8 .2 .7 1.6 .7 .6 .8-.8 .7-.3 .8 1 .7-1.2 .7-.6 .8 .2 .7 1.8 .7 1.1 .8-2.5 .7 .7 .8-1.3 .7-1.4 .7 .1 .8 1.4 .7-.9 .7-.6 .8 1.8 .7-.4 .8-.6 .7 1.1 .7 .4 .8 .2 .7-.7 .7 .6 .8-1.6 .7 1.4 .8-1.9 .7 .1 .7 2.8 .8-2.5 .7 1.4 .7-1.8 .8 .7 .7 .4 .8-.8 .7 1.6 .7-.9 .8 0 .7 .7 .7-.6 .8 1.7 .7-1.5 .8 2.1 .7-2.3 .7 .4 .8-.5 .7 1.5 .7-4.1 .8 3.6 .7-.4 .8 1 .7-2.6 .7 1.9 .8-1.6 .7 2.2 .7-1.4 .8 .7 .7-1.6 .8 1.4 .7 .9 .7-1.3 .8 2 .7-.4 .7-2 .8 3.1 .7-2.9 .8 1.1 .7 .3 .7-1.2 .8-.6 .7 1.5 .7-.3 .8-1.1 .7-.2 .8 1 .7 .9 .7 .1 .8-.4 .7-1.6 .7 .1 .8 .5 .7-1.2 .8 2 .7-.1 .7 0 .8-2.7 .7 4.6 .7-2.8 .8-.4 .7 .5 .8-2.5 .7 1.4 .7 .5 .8 2 .7-1.6 .7 .9 .8-.4 .7 0 .8 .6 .7-1.2 .7-1.1 .8 .7 .7 .9 .7 2.4 .8-3.3 .7 0 .8 1.6 .7 .3 .7-1.3 .8 1.4 .7-1.7 .7 2.1 .8-.1 .7-1.2 .8 1.6 .7-1.5 .7-.5 .8 2 .7-2.6 .7 1.8 .8-1.4 .7 .4 .8 .6 .7 0 .7 1.2 .8-.9 .7 .1 .7-2.8 .8 .7 .7 2.7 .8-2.3 .7 .7 .7 .8 .8-1.2 .7-.2 .7 1.5 .8-.3 .7-.5 .8 1.3 .7-1.3 .7 .3 .8 .7 .7 .1 .7-1.2 .8-.5 .7 .7 .8 1.3 .7-1.9 .7 .7 .8-.3 .7-.7 .7 2.2 .8-.9 .7 .3 .8 .3 .7-3.2 .7 1.1 .8 2.9 .7-2.5 .7 1.1 .8-1.8 .7 1.1 .8 .1 .7-.2 .7-.4 .8 .5 .7 .4 .7 0 .8-.8 .7 1.9 .8-1.2 .7 .2 .7 .5 .8-1.3 .7 2.2 .7-1.1 .8 .6 .7-1.5 .8 1.3 .7-.8 .7-.3 .8 2.2 .7-2.2 .7 1.2 .8-.5 .7-.2 .8-1.2 .7 0 .7-1.2 .8 1.6 .7 .8 .7 0 .8-1.4 .7-1.1 .8 1.4 .7 1.1 .7-.8 .8 0 .7 .1 .7 1 .8 2 .7-2.2 .8-1.7 .7 .9 .7 2.5 .8-2.4 .7 2.1 .7-4.2 .8 2 .7 1.5 .8-2.1 .7 1.7 .7-1.2 .8 .6 .7 1.2 .7-2.1 .8 2.2 .7-3 .8 1.3 .7 1.4 .7 .7 .8-3.7 .7 .2 .7 3 .8-3.2 .7 1.6 .8 .4 .7-.3 .7 .2 .8-1.9 .7 1.4 .7 2.2 .8-4.2 .7 1.3 .8 2.1 .7-.7 .7 .5 .8-1 .7-.2 .7 .1 .8 .8 .7 .3 .8-1.6 .7 1.1 .7-2.5 .8 3.2 .7-1.8 .7 .8 .8 1.1 .7-2.4 .8 1.3 .7 1.2 .7-.7 .8-1.3 .7 2.4 .7-2.8 .8 .7 .7 1.2 .8-1.8 .7-.6 .7 1.4 .8 .3 .7-1.6 .7 .3 .8 2.5 .7-.7 .8 0 .7 .2 .7 1.1 .8-2.5 .7 .8 .7 0 .8-1.3 .7 1.9 .8-.6 .7-.3 .7 .7 .8-.5 .7-.9 .7 .7 .8-1.4 .7 2.5 .8-1.1 .7 1.9 .7-1.3 .8 1 .7-2.3 .7 .7 .8 .1 .7-1.5 .8 .5 .7 .7 .7 1.3 .8 .7 .7-1.6 .7 .3 .8 .4 .7-.4 .8 1.6 .7-3.5 .7 3 .8-.6 .7-1.4 .7 2.5 .8-2.9 .7-.2 .8 1.4 .7 .8 .7-.8 .8 1.5 .7-3.7 0 12-.7 0-.8 0-.7 0-.7 0-.8 0-.7 0-.8 0-.7 0-.7 0-.8 0-.7 0-.7 0-.8 0-.7 0-.8 0-.7 0-.7 0-.8 0-.7 0-.7 0-.8 0-.7 0-.8 0-.7 0-.7 0-.8 0-.7 0-.7 0-.8 0-.7 0-.8 0-.7 0-.7 0-.8 0-.7 0-.7 0-.8 0-.7 0-.8 0-.7 0-.7 0-.8 0-.7 0-.7 0-.8 0-.7 0-.8 0-.7 0-.7 0-.8 0-.7 0-.7 0-.8 0-.7 0-.8 0-.7 0-.7 0-.8 0-.7 0-.7 0-.8 0-.7 0-.8 0-.7 0-.7 0-.8 0-.7 0-.7 0-.8 0-.7 0-.8 0-.7 0-.7 0-.8 0-.7 0-.7 0-.8 0-.7 0-.8 0-.7 0-.7 0-.8 0-.7 0-.7 0-.8 0-.7 0-.8 0-.7 0-.7 0-.8 0-.7 0-.7 0-.8 0-.7 0-.8 0-.7 0-.7 0-.8 0-.7 0-.7 0-.8 0-.7 0-.8 0-.7 0-.7 0-.8 0-.7 0-.7 0-.8 0-.7 0-.8 0-.7 0-.7 0-.8 0-.7 0-.7 0-.8 0-.7 0-.8 0-.7 0-.7 0-.8 0-.7 0-.7 0-.8 0-.7 0-.8 0-.7 0-.7 0-.8 0-.7 0-.7 0-.8 0-.7 0-.8 0-.7 0-.7 0-.8 0-.7 0-.7 0-.8 0-.7 0-.8 0-.7 0-.7 0-.8 0-.7 0-.7 0-.8 0-.7 0-.8 0-.7 0-.7 0-.8 0-.7 0-.7 0-.8 0-.7 0-.8 0-.7 0-.7 0-.8 0-.7 0-.7 0-.8 0-.7 0-.8 0-.7 0-.7 0-.8 0-.7 0-.7 0-.8 0-.7 0-.8 0-.7 0-.7 0-.8 0-.7 0-.7 0-.8 0-.7 0-.8 0-.7 0-.7 0-.8 0-.7 0-.7 0-.8 0-.7 0-.8 0-.7 0-.7 0-.8 0-.7 0-.7 0-.8 0-.7 0-.8 0-.7 0-.7 0-.8 0-.7 0-.7 0-.8 0-.7 0-.8 0-.7 0-.7 0-.8 0-.7 0-.7 0-.8 0-.7 0-.8 0-.7 0-.7 0-.8 0-.7 0-.7 0-.8 0-.7 0-.8 0-.7 0-.7 0-.8 0-.7 0-.7 0-.8 0-.7 0-.8 0-.7 0-.7 0-.8 0-.7 0-.7 0-.8 0-.7 0-.8 0-.7 0-.7 0-.8 0-.7 0-.7 0-.8 0-.7 0-.8 0-.7 0-.7 0-.8 0-.7 0-.7 0-.8 0-.7 0-.8 0-.7 0-.7 0-.8 0-.7 0-.7 0-.8 0-.7 0-.8 0-.7 0-.7 0-.8 0-.7 0-.7 0-.8 0-.7 0-.8 0-.7 0-.7 0-.8 0-.7 0-.7 0-.8 0-.7 0-.8 0-.7 0-.7 0-.8 0-.7 0-.7 0-.8 0-.7 0-.8 0-.7 0-.7 0-.8 0-.7 0-.7 0-.8 0-.7 0-.8 0-.7 0-.7 0-.8 0-.7 0-.7 0-.8 0-.7 0-.8 0-.7 0-.7 0-.8 0-.7 0-.7 0-.8 0-.7 0-.8 0-.7 0-.7 0-.8 0-.7 0-.7 0-.8 0-.7 0-.8 0-.7 0-.7 0-.8 0-.7 0-.7 0-.8 0-.7 0-.8 0-.7 0-.7 0-.8 0-.7 0-.7 0-.8 0-.7 0-.8 0-.7 0-.7 0-.8 0-.7 0Z" fill="rgba(238,112,136,0.32)"/><path d="M294 450.5l.7-2.5 .8-1.3 .7 1.4 .7-.5 .8 4.4 .7-5.3 .8 2 .7-.1 .7-1.8 .8-4.7 .7 4.1 .7 1.9 .8-4.4 .7 5.1 .8-.9 .7 .8 .7 .2 .8-2.6 .7-.9 .7 3.5 .8 1.3 .7-3.4 .8 3.9 .7-5.9 .7 3.3 .8 .3 .7 .1 .7 2.7 .8-3.8 .7 1.3 .8 2.3 .7-1.7 .7-1.3 .8-.8 .7 1 .7 1.9 .8-1.1 .7-4.3 .8-.1 .7 .4 .7-1.4 .8 3.1 .7 .5 .7-1.4 .8-3.9 .7 3.1 .8-.7 .7 4.1 .7-1.8 .8-3.4 .7 3.3 .7-.7 .8-2.1 .7 2.7 .8-4.1 .7 3.1 .7 1.9 .8-.2 .7-5.5 .7 3.3 .8 1.2 .7-2.5 .8 3.2 .7 .5 .7 .9 .8-1.5 .7 1.5 .7-2.5 .8 3.3 .7-.2 .8 1.4 .7-2.5 .7 1.4 .8-3.7 .7 1.8 .7-2.9 .8 6.3 .7-4.3 .8 4.9 .7-5.8 .7 2 .8-.3 .7 2.8 .7-1.8 .8-5.2 .7 3.4 .8 1.2 .7-1.5 .7-.1 .8 .8 .7 4.6 .7-2.4 .8-6.2 .7 4.4 .8 1.6 .7-.7 .7-3.3 .8 3.9 .7-1.6 .7 .4 .8-2.6 .7 .9 .8 2.5 .7 1.7 .7 3.7 .8-7.3 .7 3.6 .7-2.3 .8-3.8 .7 3.1 .8-.2 .7 1.7 .7-2.1 .8-1.4 .7 5.7 .7-6.3 .8 2.9 .7 2.8 .8-4.4 .7-.5 .7 3.9 .8-2 .7-1.7 .7-2.2 .8 5.6 .7-2.7 .8 5.4 .7-4.1 .7-2.4 .8 .2 .7 1.9 .7 2.4 .8-2.4 .7-.2 .8 0 .7-.2 .7-1.5 .8 .8 .7-1.9 .7 8.5 .8-2.7 .7-2.1 .8 2.6 .7-4.8 .7 .2 .8 3.6 .7-3.2 .7-.7 .8 1.9 .7 .5 .8-1.9 .7 .8 .7-.7 .8 1.3 .7-.8 .7 0 .8 1.6 .7 .6 .8 3.4 .7-5.8 .7-.7 .8 1 .7 .5 .7-1.3 .8 2.2 .7-2.3 .8-1.3 .7 1.8 .7 0 .8 1.4 .7 .6 .7-1.6 .8-.1 .7-1.7 .8 6.8 .7-4.7 .7-1.6 .8 2.7 .7-2.3 .7 3.5 .8-3.4 .7-.4 .8-1.3 .7-1.2 .7 4.1 .8 .8 .7-2.8 .7-.6 .8 5.9 .7-4.2 .8 5 .7-5.6 .7 .2 .8 .7 .7-.6 .7 1.2 .8 1.2 .7-.1 .8-3.1 .7 3.1 .7 .2 .8 1.2 .7-2.8 .7 2.2 .8 1.1 .7-2.2 .8 2.2 .7-1.8 .7-3.5 .8 3.2 .7-3.4 .7 1.2 .8 4.6 .7-3.6 .8-3.3 .7-2.1 .7 6.4 .8 1.7 .7-3.3 .7 1.6 .8-.1 .7-3.7 .8 3.8 .7 4.6 .7-5.3 .8-.3 .7-1 .7 .6 .8 3.4 .7-1.4 .8-.9 .7 2.8 .7-.1 .8-5.7 .7 2.6 .7-7.1 .8 6.8 .7 5.1 .8-7.9 .7 1.4 .7 3.6 .8 1.6 .7-2.4 .7-3.3 .8 5.8 .7-4.5 .8 2.7 .7 2.3 .7 .8 .8-6.6 .7 1.3 .7 3.7 .8 1.1 .7-7.4 .8 6 .7-2.2 .7 2.3 .8-5.4 .7 5.4 .7-1.2 .8-3.9 .7-1.2 .8 6.2 .7-1.7 .7-.4 .8-5.9 .7 7.1 .7-3.7 .8 3.1 .7-1.6 .8-2.2 .7 2.1 .7-2.6 .8 3.3 .7 .1 .7 .2 .8 4.1 .7-5.2 .8 2 .7 .2 .7-2.8 .8-.5 .7 2.2 .7-4 .8 8 .7-4.6 .8-.9 .7-.5 .7 4.1 .8-3.4 .7-2.9 .7 .3 .8 5 .7-2 .8-.5 .7-1.7 .7 2.3 .8-.5 .7 .8 .7 .1 .8-1.6 .7 3 .8-3.1 .7 2.8 .7 .8 .8-2.9 .7 1.3 .7-.1 .8 2.6 .7-3.6 .8 .8 .7 2 .7-2.2 .8 1.4 .7-.3 .7-5.1 .8 5.1 .7-4.6 .8-1.7 .7 6 .7-.3 .8 2.6 .7-5.8 .7 3.2 .8 2 .7-5.4 .8 2.5 .7 .3 .7-1.5 .8 1.5 .7-6.5 .7 4.7 .8 2 .7-.7 .8 2.7 .7-1.2 .7-.4 .8 .2 .7-2.3 0 10.4-.7 3.7-.8-1.5-.7 .8-.7-.8-.8-1.4-.7 .2-.8 2.9-.7-2.5-.7 1.4-.8 .6-.7-3-.7 3.5-.8-1.6-.7 .4-.8-.4-.7-.3-.7 1.6-.8-.7-.7-1.3-.7-.7-.8-.5-.7 1.5-.8-.1-.7-.7-.7 2.3-.8-1-.7 1.3-.7-1.9-.8 1.1-.7-2.5-.8 1.4-.7-.7-.7 .9-.8 .5-.7-.7-.7 .3-.8 .6-.7-1.9-.8 1.3-.7 0-.7-.8-.8 2.5-.7-1.1-.7-.2-.8 0-.7 .7-.8-2.5-.7-.3-.7 1.6-.8-.3-.7-1.4-.7 .6-.8 1.8-.7-1.2-.8-.7-.7 2.8-.7-2.4-.8 1.3-.7 .7-.7-1.2-.8-1.3-.7 2.4-.8-1.1-.7-.8-.7 1.8-.8-3.2-.7 2.5-.7-1.1-.8 1.6-.7-.3-.8-.8-.7-.1-.7 .2-.8 1-.7-.5-.7 .7-.8-2.1-.7-1.3-.8 4.2-.7-2.2-.7-1.4-.8 1.9-.7-.2-.7 .3-.8-.4-.7-1.6-.8 3.2-.7-3-.7-.2-.8 3.7-.7-.7-.7-1.4-.8-1.3-.7 3-.8-2.2-.7 2.1-.7-1.2-.8-.6-.7 1.2-.7-1.7-.8 2.1-.7-1.5-.8-2-.7 4.2-.7-2.1-.8 2.4-.7-2.5-.7-.9-.8 1.7-.7 2.2-.8-2-.7-1-.7-.1-.8 0-.7 .8-.7-1.1-.8-1.4-.7 1.1-.8 1.4-.7 0-.7-.8-.8-1.6-.7 1.2-.7 0-.8 1.2-.7 .2-.8 .5-.7-1.2-.7 2.2-.8-2.2-.7 .3-.7 .8-.8-1.3-.7 1.5-.8-.6-.7 1.1-.7-2.2-.8 1.3-.7-.5-.7-.2-.8 1.2-.7-1.9-.8 .8-.7 0-.7-.4-.8-.5-.7 .4-.7 .2-.8-.1-.7-1.1-.8 1.8-.7-1.1-.7 2.5-.8-2.9-.7-1.1-.7 3.2-.8-.3-.7-.3-.8 .9-.7-2.2-.7 .7-.8 .3-.7-.7-.7 1.9-.8-1.3-.7-.7-.8 .5-.7 1.2-.7-.1-.8-.7-.7-.3-.7 1.3-.8-1.3-.7 .5-.8 .3-.7-1.5-.7 .2-.8 1.2-.7-.8-.7-.7-.8 2.3-.7-2.7-.8-.7-.7 2.8-.7-.1-.8 .9-.7-1.2-.7 0-.8-.6-.7-.4-.8 1.4-.7-1.8-.7 2.6-.8-2-.7 .5-.7 1.5-.8-1.6-.7 1.2-.8 .1-.7-2.1-.7 1.7-.8-1.4-.7 1.3-.7-.3-.8-1.6-.7 0-.8 3.3-.7-2.4-.7-.9-.8-.7-.7 1.1-.7 1.2-.8-.6-.7 0-.8 .4-.7-.9-.7 1.6-.8-2-.7-.5-.7-1.4-.8 2.5-.7-.5-.8 .4-.7 2.8-.7-4.6-.8 2.7-.7 0-.7 .1-.8-2-.7 1.2-.8-.5-.7-.1-.7 1.6-.8 .4-.7-.1-.7-.9-.8-1-.7 .2-.8 1.1-.7 .3-.7-1.5-.8 .6-.7 1.2-.7-.3-.8-1.1-.7 2.9-.8-3.1-.7 2-.7 .4-.8-2-.7 1.3-.7-.9-.8-1.4-.7 1.6-.8-.7-.7 1.4-.7-2.2-.8 1.6-.7-1.9-.7 2.6-.8-1-.7 .4-.8-3.6-.7 4.1-.7-1.5-.8 .5-.7-.4-.7 2.3-.8-2.1-.7 1.5-.8-1.7-.7 .6-.7-.7-.8 0-.7 .9-.7-1.6-.8 .8-.7-.4-.8-.7-.7 1.8-.7-1.4-.8 2.5-.7-2.8-.7-.1-.8 1.9-.7-1.4-.8 1.6-.7-.6-.7 .7-.8-.2-.7-.4-.7-1.1-.8 .6-.7 .4-.8-1.8-.7 .6-.7 .9-.8-1.4-.7-.1-.7 1.4-.8 1.3-.7-.7-.8 2.5-.7-1.1-.7-1.8-.8-.2-.7 .6-.7 1.2-.8-1-.7 .3-.8 .8-.7-.6-.7-1.6-.8-.2-.7-1.4-.7 4.8-.8-2.8-.7 2.9-.8-2.3-.7-.9-.7 1.3-.8 .5-.7-1.3-.7 .3-.8-.5-.7 .3-.8-.5-.7 0-.7 0-.8-.6-.7 .2-.7 2.4-.8-.8-.7-1-.8-.1-.7 .2-.7-1.3-.8 1.6-.7 2.6Z" fill="rgba(236,149,44,0.32)"/><path d="M294 431.9l.7 5.9 .8-4.9 .7 1.8 .7 8.7 .8-1.7 .7-10.1 .8 12.2 .7-8.8 .7 2.9 .8-5.8 .7 2.1 .7 7.6 .8-10.1 .7 7.6 .8-.6 .7-3 .7-7.2 .8 5.7 .7-1.6 .7 5.3 .8 3.2 .7-6 .8 .5 .7-2.4 .7 1.7 .8 3.4 .7-7.1 .7 13.8 .8-9.7 .7 1.2 .8 3 .7 1.9 .7-1.5 .8-3.1 .7 .3 .7 5.3 .8-1.7 .7-8.5 .8-1.3 .7 4.6 .7-1.1 .8 3.1 .7-8.1 .7 3.9 .8-2 .7 .2 .8-4 .7 7.2 .7 5.3 .8-7.1 .7 4.2 .7-.9 .8 .4 .7 .6 .8-2.5 .7-.5 .7 2.5 .8 3.5 .7-4.7 .7 0 .8-1.9 .7-2.1 .8 4.5 .7 8.6 .7-6.6 .8-.8 .7 .1 .7 0 .8 .9 .7 .5 .8-7.3 .7 3 .7 3.9 .8-4.3 .7 2.5 .7-4 .8 8.2 .7-5.4 .8 2.3 .7-5.2 .7 3.3 .8-2.6 .7 5.6 .7 1.6 .8-3.4 .7 .5 .8-.7 .7-2.6 .7-1.8 .8 5 .7 4.8 .7-6.6 .8-7.3 .7 8.9 .8-.6 .7-3.3 .7-.5 .8 5 .7 3.9 .7-8.6 .8-.8 .7 2.2 .8 4.3 .7 3.6 .7 .6 .8-7.2 .7 .2 .7 3.9 .8-10.7 .7 6.7 .8-3.6 .7 7.4 .7-5.3 .8-3.6 .7 8.6 .7-2.3 .8-.3 .7 .4 .8 .8 .7-.5 .7-.4 .8 .7 .7-6.1 .7 2.6 .8 7.4 .7-5.3 .8-.8 .7 2.5 .7-5 .8-.5 .7 5.4 .7-2.7 .8 .1 .7-1 .8 5.8 .7-.2 .7 1.5 .8-6 .7-2.1 .7 5.9 .8-4.7 .7 2.8 .8 2.5 .7-6.8 .7-2.6 .8 9.8 .7-7 .7 1.6 .8 2.2 .7-2.6 .8 2.6 .7 1.7 .7-5.5 .8 3.2 .7-.1 .7-.5 .8 0 .7 2.6 .8 0 .7-4.6 .7-3.7 .8 1.5 .7 1.6 .7 1.4 .8 1.5 .7 0 .8-10.4 .7 9.9 .7-1.7 .8-.8 .7 7.7 .7-2.5 .8-1.5 .7-.6 .8 7.5 .7-6.5 .7-6.5 .8 4.4 .7-.2 .7 3.4 .8 1.2 .7-6.5 .8-.4 .7 2.3 .7 .6 .8 1.8 .7-2.3 .7 .5 .8 5.1 .7-3.6 .8 1.4 .7-5.1 .7 .4 .8 2 .7-.3 .7-5 .8 11.5 .7-8.3 .8-.8 .7 3.9 .7 1.5 .8 .5 .7 0 .7 2.3 .8-2.7 .7 1.9 .8-4.5 .7-3.1 .7 8.5 .8-1.6 .7-8.3 .7 1.8 .8 5.1 .7-4.3 .8-4 .7-2.1 .7 4.3 .8 6.1 .7-5.2 .7 8 .8-4.1 .7-.8 .8-2.7 .7 1.8 .7-.4 .8 4.8 .7-4.4 .7 .4 .8 3 .7-3.4 .8-.8 .7 12.5 .7-11 .8-.9 .7 2.8 .7-12.5 .8 11.4 .7 7.7 .8-8.3 .7-2.1 .7 1.3 .8-.1 .7 1.9 .7-2.4 .8 .1 .7 .9 .8-2.1 .7 5.4 .7 1 .8-5.2 .7 .1 .7 5.5 .8 1.7 .7-8.5 .8 7.4 .7-4.7 .7 2.8 .8-4.6 .7 5.2 .7-1.2 .8-9 .7 3.2 .8 7.6 .7-2.3 .7-3.1 .8-3.5 .7 7.2 .7-3.3 .8 2 .7-2.3 .8-2.1 .7 7.7 .7-4.3 .8 7.6 .7-8.8 .7-.8 .8 3.6 .7-1.6 .8-.8 .7 3 .7-2.4 .8 2.9 .7-.1 .7-4.5 .8 4.1 .7-7.1 .8 4.5 .7-2.6 .7 4.3 .8-.1 .7-.3 .7-2 .8 6.5 .7-4.8 .8-.8 .7-1.4 .7 2 .8-2.3 .7 4.4 .7-5.2 .8 5.2 .7-1.5 .8-4.1 .7 5.7 .7 3 .8-8.6 .7 4.7 .7-3.2 .8 2.3 .7-1.6 .8 .9 .7-.6 .7-.5 .8 4.8 .7-3.5 .7-6.3 .8 6.5 .7-4.7 .8-1.1 .7 5.8 .7 1.8 .8 3.9 .7-12.4 .7 7.5 .8-.6 .7-.9 .8-1.6 .7 2.9 .7-11.5 .8 12.2 .7-6.4 .7 .1 .8 1.6 .7 8 .8-3.6 .7-2.7 .7 5.3 .8-5.1 .7 .7 0 9.7-.7 2.3-.8-.2-.7 .4-.7 1.2-.8-2.7-.7 .7-.8-2-.7-4.7-.7 6.5-.8-1.5-.7 1.5-.7-.3-.8-2.5-.7 5.4-.8-2-.7-3.2-.7 5.8-.8-2.6-.7 .3-.7-6-.8 1.7-.7 4.6-.8-5.1-.7 5.1-.7 .3-.8-1.4-.7 2.2-.7-2-.8-.8-.7 3.6-.8-2.6-.7 .1-.7-1.3-.8 2.9-.7-.8-.7-2.8-.8 3.1-.7-3-.8 1.6-.7-.1-.7-.8-.8 .5-.7-2.3-.7 1.7-.8 .5-.7 2-.8-5-.7-.3-.7 2.9-.8 3.4-.7-4.1-.7 .5-.8 .9-.7 4.6-.8-8-.7 4-.7-2.2-.8 .5-.7 2.8-.7-.2-.8-2-.7 5.2-.8-4.1-.7-.2-.7-.1-.8-3.3-.7 2.6-.7-2.1-.8 2.2-.7 1.6-.8-3.1-.7 3.7-.7-7.1-.8 5.9-.7 .4-.7 1.7-.8-6.2-.7 1.2-.8 3.9-.7 1.2-.7-5.4-.8 5.4-.7-2.3-.7 2.2-.8-6-.7 7.4-.8-1.1-.7-3.7-.7-1.3-.8 6.6-.7-.8-.7-2.3-.8-2.7-.7 4.5-.8-5.8-.7 3.3-.7 2.4-.8-1.6-.7-3.6-.7-1.4-.8 7.9-.7-5.1-.8-6.8-.7 7.1-.7-2.6-.8 5.7-.7 .1-.7-2.8-.8 .9-.7 1.4-.8-3.4-.7-.6-.7 1-.8 .3-.7 5.3-.7-4.6-.8-3.8-.7 3.7-.8 .1-.7-1.6-.7 3.3-.8-1.7-.7-6.4-.7 2.1-.8 3.3-.7 3.6-.8-4.6-.7-1.2-.7 3.4-.8-3.2-.7 3.5-.7 1.8-.8-2.2-.7 2.2-.8-1.1-.7-2.2-.7 2.8-.8-1.2-.7-.2-.7-3.1-.8 3.1-.7 .1-.8-1.2-.7-1.2-.7 .6-.8-.7-.7-.2-.7 5.6-.8-5-.7 4.2-.8-5.9-.7 .6-.7 2.8-.8-.8-.7-4.1-.7 1.2-.8 1.3-.7 .4-.8 3.4-.7-3.5-.7 2.3-.8-2.7-.7 1.6-.7 4.7-.8-6.8-.7 1.7-.8 .1-.7 1.6-.7-.6-.8-1.4-.7 0-.7-1.8-.8 1.3-.7 2.3-.8-2.2-.7 1.3-.7-.5-.8-1-.7 .7-.7 5.8-.8-3.4-.7-.6-.8-1.6-.7 0-.7 .8-.8-1.3-.7 .7-.7-.8-.8 1.9-.7-.5-.8-1.9-.7 .7-.7 3.2-.8-3.6-.7-.2-.7 4.8-.8-2.6-.7 2.1-.8 2.7-.7-8.5-.7 1.9-.8-.8-.7 1.5-.7 .2-.8 0-.7 .2-.8 2.4-.7-2.4-.7-1.9-.8-.2-.7 2.4-.7 4.1-.8-5.4-.7 2.7-.8-5.6-.7 2.2-.7 1.7-.8 2-.7-3.9-.7 .5-.8 4.4-.7-2.8-.8-2.9-.7 6.3-.7-5.7-.8 1.4-.7 2.1-.7-1.7-.8 .2-.7-3.1-.8 3.8-.7 2.3-.7-3.6-.8 7.3-.7-3.7-.7-1.7-.8-2.5-.7-.9-.8 2.6-.7-.4-.7 1.6-.8-3.9-.7 3.3-.7 .7-.8-1.6-.7-4.4-.8 6.2-.7 2.4-.7-4.6-.8-.8-.7 .1-.7 1.5-.8-1.2-.7-3.4-.8 5.2-.7 1.8-.7-2.8-.8 .3-.7-2-.7 5.8-.8-4.9-.7 4.3-.8-6.3-.7 2.9-.7-1.8-.8 3.7-.7-1.4-.7 2.5-.8-1.4-.7 .2-.8-3.3-.7 2.5-.7-1.5-.8 1.5-.7-.9-.7-.5-.8-3.2-.7 2.5-.8-1.2-.7-3.3-.7 5.5-.8 .2-.7-1.9-.7-3.1-.8 4.1-.7-2.7-.8 2.1-.7 .7-.7-3.3-.8 3.4-.7 1.8-.7-4.1-.8 .7-.7-3.1-.8 3.9-.7 1.4-.7-.5-.8-3.1-.7 1.4-.7-.4-.8 .1-.7 4.3-.8 1.1-.7-1.9-.7-1-.8 .8-.7 1.3-.7 1.7-.8-2.3-.7-1.3-.8 3.8-.7-2.7-.7-.1-.8-.3-.7-3.3-.7 5.9-.8-3.9-.7 3.4-.8-1.3-.7-3.5-.7 .9-.8 2.6-.7-.2-.7-.8-.8 .9-.7-5.1-.8 4.4-.7-1.9-.7-4.1-.8 4.7-.7 1.8-.7 .1-.8-2-.7 5.3-.8-4.4-.7 .5-.7-1.4-.8 1.3-.7 2.5Z" fill="rgba(18,184,134,0.32)"/><path d="M294 418.7l.7 5 .8-7.2 .7 2.1 .7 10.5 .8-3 .7-7.5 .8 7.4 .7-3.8 .7-5.3 .8 .6 .7 1 .7 11.6 .8-12 .7 5.8 .8 0 .7-.4 .7-5.1 .8 .9 .7-2.2 .7 3.9 .8 1 .7-.4 .8 7.2 .7-9.7 .7 8.3 .8 1.3 .7-16.1 .7 15.2 .8-5.4 .7 1.4 .8 .8 .7 8.2 .7-10 .8-.1 .7-7.4 .7 16.4 .8-9.4 .7-2.2 .8-8 .7 12.4 .7-7.6 .8 7.8 .7-6.6 .7 1.6 .8-4.3 .7 .3 .8-8.3 .7 9.8 .7 18.4 .8-15.2 .7 9.8 .7-7.1 .8-3.8 .7 8 .8-3.2 .7-5.6 .7 4 .8-3.7 .7 .1 .7-.8 .8-6.5 .7 6.9 .8 3 .7 12.6 .7-11.2 .8-4 .7-1.1 .7 5.2 .8 3.7 .7 .4 .8-4.9 .7-3 .7-1.2 .8 10.3 .7 1.8 .7-17.5 .8 19.3 .7-12.5 .8 8.2 .7-12.7 .7 3.5 .8-.5 .7 2.9 .7 5 .8-5 .7-4.6 .8 2.1 .7 4.1 .7-1.5 .8 2.5 .7 4.8 .7-8.2 .8-5.1 .7 4.3 .8 2.1 .7-4.8 .7 1.2 .8 2.6 .7 10.8 .7-19.1 .8 4 .7 1.9 .8 3.3 .7 2 .7 1.9 .8-5.3 .7 2 .7 9.3 .8-18 .7 8.8 .8-3.2 .7-3.1 .7 11 .8-10.8 .7 4.3 .7-.9 .8-1.3 .7 10.2 .8-.5 .7-6.4 .7 2.8 .8-7.1 .7-.4 .7 2.5 .8 6.3 .7-2.9 .8-2.3 .7 5.4 .7-7.5 .8 1.3 .7 2.8 .7 3.6 .8 .1 .7-8.4 .8 6.2 .7 4.2 .7-1.1 .8-2.7 .7-14.2 .7 20 .8-16.7 .7 12.7 .8-1.9 .7-4.1 .7-2 .8 4.6 .7-6.5 .7 5.6 .8 4.5 .7-14.3 .8 5.3 .7 6.4 .7-3.6 .8 1.2 .7 .7 .7-4.8 .8 8.1 .7-1.5 .8 3.1 .7-12.8 .7-5.8 .8 8.4 .7-.9 .7-2 .8 8.2 .7 2.7 .8-18.2 .7 12.4 .7 1 .8-7 .7 12.3 .7 5 .8-9.7 .7 1.5 .8 .2 .7 .5 .7-5.6 .8 1.9 .7 .8 .7 10.3 .8-4.8 .7-5.2 .8-7.1 .7-1.1 .7 13.8 .8 1.2 .7-2.8 .7-.4 .8 5.1 .7-6.4 .8-2.2 .7 3.6 .7 1.2 .8 3.1 .7-11.4 .7-5.8 .8 22.7 .7-7.6 .8-7.6 .7 .2 .7 1.6 .8 3.7 .7-1.7 .7 3.1 .8 .8 .7-7.9 .8 2.5 .7 1.5 .7 6.1 .8 2.8 .7-14.6 .7-1.9 .8 14.2 .7-13.3 .8-7.8 .7 4.3 .7 10.1 .8 4.6 .7-7.1 .7 11.5 .8-4 .7-4.5 .8-2.5 .7-1 .7 6.6 .8-6.9 .7-1.2 .7 1 .8 8.8 .7-12.7 .8 7.1 .7 4.1 .7-8.4 .8 6.9 .7 1.2 .7-21.5 .8 14.3 .7 12 .8-10 .7-2.1 .7 5.4 .8-2.3 .7 3.5 .7-3.1 .8-3.3 .7 6.1 .8-8.6 .7 8.1 .7-1.8 .8-6 .7-1.2 .7 7.9 .8 2 .7-5.1 .8 4.4 .7 .7 .7 .4 .8-8.5 .7 8.2 .7-3.1 .8-3.6 .7-6.1 .8 15.3 .7-6 .7-1.6 .8-7 .7 12.1 .7-1 .8 5.6 .7-8.6 .8 1.2 .7 1.2 .7-7.6 .8 21.8 .7-12.3 .7-6.9 .8-.1 .7 2.1 .8-.9 .7 1.9 .7-2.6 .8-1.3 .7 3.8 .7 2.6 .8 1.3 .7-9.7 .8 8.5 .7-4.4 .7 5.7 .8 .4 .7-5.6 .7 2 .8 9.3 .7-6.2 .8-3.8 .7-9.3 .7 8.8 .8-7.1 .7 8.2 .7 5.1 .8-4.4 .7 2.9 .8-1.9 .7 4.6 .7-8.3 .8 4.3 .7 1.3 .7-10 .8 4.1 .7 7.8 .8-5 .7 .7 .7-1.5 .8 1.2 .7 1.6 .7-7.5 .8-.4 .7 8 .8-7 .7 2.8 .7 8.4 .8 1.5 .7-9.6 .7 2 .8 2.2 .7-6.3 .8-2.6 .7 6.7 .7-10 .8 9.7 .7-5.6 .7 5 .8-6.9 .7 11 .8-5.9 .7 5.8 .7-3 .8-9.6 .7 6.6 0 16.3-.7-.7-.8 5.1-.7-5.3-.7 2.7-.8 3.6-.7-8-.8-1.6-.7-.1-.7 6.4-.8-12.2-.7 11.5-.7-2.9-.8 1.6-.7 .9-.8 .6-.7-7.5-.7 12.4-.8-3.9-.7-1.8-.7-5.8-.8 1.1-.7 4.7-.8-6.5-.7 6.3-.7 3.5-.8-4.8-.7 .5-.7 .6-.8-.9-.7 1.6-.8-2.3-.7 3.2-.7-4.7-.8 8.6-.7-3-.7-5.7-.8 4.1-.7 1.5-.8-5.2-.7 5.2-.7-4.4-.8 2.3-.7-2-.7 1.4-.8 .8-.7 4.8-.8-6.5-.7 2-.7 .3-.8 .1-.7-4.3-.7 2.6-.8-4.5-.7 7.1-.8-4.1-.7 4.5-.7 .1-.8-2.9-.7 2.4-.7-3-.8 .8-.7 1.6-.8-3.6-.7 .8-.7 8.8-.8-7.6-.7 4.3-.7-7.7-.8 2.1-.7 2.3-.8-2-.7 3.3-.7-7.2-.8 3.5-.7 3.1-.7 2.3-.8-7.6-.7-3.2-.8 9-.7 1.2-.7-5.2-.8 4.6-.7-2.8-.7 4.7-.8-7.4-.7 8.5-.8-1.7-.7-5.5-.7-.1-.8 5.2-.7-1-.7-5.4-.8 2.1-.7-.9-.8-.1-.7 2.4-.7-1.9-.8 .1-.7-1.3-.7 2.1-.8 8.3-.7-7.7-.8-11.4-.7 12.5-.7-2.8-.8 .9-.7 11-.7-12.5-.8 .8-.7 3.4-.8-3-.7-.4-.7 4.4-.8-4.8-.7 .4-.7-1.8-.8 2.7-.7 .8-.8 4.1-.7-8-.7 5.2-.8-6.1-.7-4.3-.7 2.1-.8 4-.7 4.3-.8-5.1-.7-1.8-.7 8.3-.8 1.6-.7-8.5-.7 3.1-.8 4.5-.7-1.9-.8 2.7-.7-2.3-.7 0-.8-.5-.7-1.5-.7-3.9-.8 .8-.7 8.3-.8-11.5-.7 5-.7 .3-.8-2-.7-.4-.7 5.1-.8-1.4-.7 3.6-.8-5.1-.7-.5-.7 2.3-.8-1.8-.7-.6-.7-2.3-.8 .4-.7 6.5-.8-1.2-.7-3.4-.7 .2-.8-4.4-.7 6.5-.7 6.5-.8-7.5-.7 .6-.8 1.5-.7 2.5-.7-7.7-.8 .8-.7 1.7-.7-9.9-.8 10.4-.7 0-.8-1.5-.7-1.4-.7-1.6-.8-1.5-.7 3.7-.7 4.6-.8 0-.7-2.6-.8 0-.7 .5-.7 .1-.8-3.2-.7 5.5-.7-1.7-.8-2.6-.7 2.6-.8-2.2-.7-1.6-.7 7-.8-9.8-.7 2.6-.7 6.8-.8-2.5-.7-2.8-.8 4.7-.7-5.9-.7 2.1-.8 6-.7-1.5-.7 .2-.8-5.8-.7 1-.8-.1-.7 2.7-.7-5.4-.8 .5-.7 5-.7-2.5-.8 .8-.7 5.3-.8-7.4-.7-2.6-.7 6.1-.8-.7-.7 .4-.7 .5-.8-.8-.7-.4-.8 .3-.7 2.3-.7-8.6-.8 3.6-.7 5.3-.7-7.4-.8 3.6-.7-6.7-.8 10.7-.7-3.9-.7-.2-.8 7.2-.7-.6-.7-3.6-.8-4.3-.7-2.2-.8 .8-.7 8.6-.7-3.9-.8-5-.7 .5-.7 3.3-.8 .6-.7-8.9-.8 7.3-.7 6.6-.7-4.8-.8-5-.7 1.8-.7 2.6-.8 .7-.7-.5-.8 3.4-.7-1.6-.7-5.6-.8 2.6-.7-3.3-.7 5.2-.8-2.3-.7 5.4-.8-8.2-.7 4-.7-2.5-.8 4.3-.7-3.9-.7-3-.8 7.3-.7-.5-.8-.9-.7 0-.7-.1-.8 .8-.7 6.6-.7-8.6-.8-4.5-.7 2.1-.8 1.9-.7 0-.7 4.7-.8-3.5-.7-2.5-.7 .5-.8 2.5-.7-.6-.8-.4-.7 .9-.7-4.2-.8 7.1-.7-5.3-.7-7.2-.8 4-.7-.2-.8 2-.7-3.9-.7 8.1-.8-3.1-.7 1.1-.7-4.6-.8 1.3-.7 8.5-.8 1.7-.7-5.3-.7-.3-.8 3.1-.7 1.5-.7-1.9-.8-3-.7-1.2-.8 9.7-.7-13.8-.7 7.1-.8-3.4-.7-1.7-.7 2.4-.8-.5-.7 6-.8-3.2-.7-5.3-.7 1.6-.8-5.7-.7 7.2-.7 3-.8 .6-.7-7.6-.8 10.1-.7-7.6-.7-2.1-.8 5.8-.7-2.9-.7 8.8-.8-12.2-.7 10.1-.8 1.7-.7-8.7-.7-1.8-.8 4.9-.7-5.9Z" fill="rgba(92,200,194,0.32)"/><path d="M294 398.8l.7 12.7 .8-4 .7-2.8 .7 13.8 .8-2.9 .7-7.4 .8 5.1 .7-1.8 .7 .1 .8-8.6 .7 5.3 .7 4.1 .8-9.3 .7 5.3 .8 1.8 .7-4.9 .7 1.7 .8 4 .7-8.2 .7 16.8 .8-9.1 .7-2.7 .8 10.2 .7-16.7 .7 10.6 .8 3.7 .7-13.5 .7 9.1 .8 2 .7 .4 .8-4.8 .7 8.3 .7-16.1 .8 9.4 .7-.8 .7 5.8 .8-12.1 .7 3.8 .8-15 .7 11.7 .7 2.1 .8 6.8 .7-3.3 .7-6.6 .8-5 .7 .9 .8-.7 .7 7.9 .7 21.8 .8-14 .7 8.8 .7-5.9 .8-9.2 .7 5.1 .8-3.8 .7-3.2 .7 7.1 .8-6.9 .7-2.2 .7 2.6 .8-8.5 .7 8.4 .8 3.5 .7 10.4 .7-6.5 .8-13.1 .7 9.8 .7-3 .8 11.7 .7-11.2 .8-2 .7 4.2 .7-2.7 .8 13.2 .7-2.7 .7-19.2 .8 10.3 .7 4 .8-2.8 .7-4.9 .7-.4 .8-2.8 .7 4.7 .7 5.2 .8-2.4 .7-5.5 .8 .8 .7-.6 .7 9.8 .8-2 .7 7.6 .7-9.5 .8-5.7 .7-3.6 .8-1.8 .7-1.5 .7 11.8 .8-2.5 .7 15.8 .7-25.6 .8 .2 .7 4.7 .8 1.8 .7 6.6 .7 10 .8-5.3 .7-5.8 .7 6.5 .8-20.5 .7 15.3 .8-4.7 .7-3.6 .7 8 .8-5.5 .7 8.8 .7-10.5 .8 1.6 .7 10.7 .8 6.7 .7-12.2 .7 9.5 .8-6.4 .7-8.3 .7 3.3 .8 1.5 .7-6.5 .8 3.8 .7-1.9 .7 3 .8-4.8 .7 11.7 .7-1.9 .8 2.1 .7-9.4 .8 2.7 .7 14.3 .7-10 .8 1.6 .7-17.8 .7 18.7 .8-13.3 .7 13.1 .8 1.3 .7-11.1 .7 3 .8 0 .7 1 .7-6 .8 14.4 .7-23.7 .8 12.2 .7 2 .7-.5 .8-2.1 .7 3.6 .7-10.3 .8 10.7 .7-1.3 .8-1 .7-2.6 .7-14.3 .8 13.2 .7 6 .7-10.4 .8 11 .7-5.3 .8-9.3 .7 10 .7-.1 .8 2.4 .7 1.4 .7 11.6 .8-19.3 .7 .1 .8 7.6 .7 7.4 .7-12.7 .8 2.1 .7-1.4 .7 14.7 .8-1.4 .7-9.8 .8-3.8 .7-12.6 .7 24.5 .8 .6 .7-5.4 .7 4.6 .8 1.9 .7-7.6 .8-.7 .7 2.5 .7-5.7 .8 6.7 .7-3.8 .7-9.3 .8 17.5 .7-1.6 .8-10.9 .7 .9 .7-.5 .8 6.3 .7-1.8 .7 5.4 .8-4.4 .7-2.2 .8-8.6 .7 9 .7 6.8 .8-1.5 .7-10.9 .7-2.3 .8 14.7 .7-11 .8-6.7 .7 3.2 .7 3.1 .8 12.3 .7-7.8 .7 11.7 .8-8.8 .7-9.4 .8 9.8 .7-7.7 .7 8 .8-5.1 .7-5.1 .7 8.7 .8 .2 .7-10.7 .8 12.1 .7-6.4 .7-5.3 .8 5.7 .7 12.7 .7-26.7 .8 15.2 .7 7.7 .8-13.2 .7 11.7 .7-2.4 .8-2 .7-1.3 .7 .9 .8 1.8 .7 1.8 .8-5 .7 6.9 .7-5.6 .8-3.9 .7-4.8 .7 15.6 .8-14.3 .7-.8 .8 6.6 .7 9.4 .7 4.2 .8-13.8 .7 5.9 .7-13.3 .8 .2 .7 1.4 .8 8.2 .7-6.5 .7 3.5 .8-12.1 .7 15.7 .7 2.8 .8 8 .7-12.7 .8-3.3 .7 10.9 .7-6.7 .8 12.8 .7 1.5 .7-25.8 .8 9.4 .7-2.8 .8-5.8 .7 16 .7-4.3 .8-15 .7 14.6 .7 1.8 .8-.2 .7-13.4 .8 7.4 .7 .9 .7 7.8 .8-.7 .7-7 .7-2.2 .8 14.4 .7-13.2 .8 7.3 .7-15.2 .7 3.2 .8-5.4 .7 12.4 .7 10.5 .8-5.2 .7 .2 .8-3.7 .7 6.9 .7-3.5 .8 1.5 .7-4.3 .7-11.5 .8 13.4 .7 3.4 .8 .3 .7-4 .7-18.5 .8 15.9 .7 3.3 .7-6.2 .8 2.4 .7 10.9 .8-14.6 .7 3.9 .7 1.2 .8 14.5 .7-18.4 .7-2 .8 15.4 .7-17.1 .8 7.1 .7-2.4 .7-14.1 .8 16 .7-6.6 .7 9.3 .8-10.8 .7 7 .8-.2 .7 5.6 .7-5.2 .8-11.6 .7 16.7 0 6.6-.7-6.6-.8 9.6-.7 3-.7-5.8-.8 5.9-.7-11-.8 6.9-.7-5-.7 5.6-.8-9.7-.7 10-.7-6.7-.8 2.6-.7 6.3-.8-2.2-.7-2-.7 9.6-.8-1.5-.7-8.4-.7-2.8-.8 7-.7-8-.8 .4-.7 7.5-.7-1.6-.8-1.2-.7 1.5-.7-.7-.8 5-.7-7.8-.8-4.1-.7 10-.7-1.3-.8-4.3-.7 8.3-.7-4.6-.8 1.9-.7-2.9-.8 4.4-.7-5.1-.7-8.2-.8 7.1-.7-8.8-.7 9.3-.8 3.8-.7 6.2-.8-9.3-.7-2-.7 5.6-.8-.4-.7-5.7-.7 4.4-.8-8.5-.7 9.7-.8-1.3-.7-2.6-.7-3.8-.8 1.3-.7 2.6-.7-1.9-.8 .9-.7-2.1-.8 .1-.7 6.9-.7 12.3-.8-21.8-.7 7.6-.7-1.2-.8-1.2-.7 8.6-.8-5.6-.7 1-.7-12.1-.8 7-.7 1.6-.7 6-.8-15.3-.7 6.1-.8 3.6-.7 3.1-.7-8.2-.8 8.5-.7-.4-.7-.7-.8-4.4-.7 5.1-.8-2-.7-7.9-.7 1.2-.8 6-.7 1.8-.7-8.1-.8 8.6-.7-6.1-.8 3.3-.7 3.1-.7-3.5-.8 2.3-.7-5.4-.7 2.1-.8 10-.7-12-.8-14.3-.7 21.5-.7-1.2-.8-6.9-.7 8.4-.7-4.1-.8-7.1-.7 12.7-.8-8.8-.7-1-.7 1.2-.8 6.9-.7-6.6-.7 1-.8 2.5-.7 4.5-.8 4-.7-11.5-.7 7.1-.8-4.6-.7-10.1-.7-4.3-.8 7.8-.7 13.3-.8-14.2-.7 1.9-.7 14.6-.8-2.8-.7-6.1-.7-1.5-.8-2.5-.7 7.9-.8-.8-.7-3.1-.7 1.7-.8-3.7-.7-1.6-.7-.2-.8 7.6-.7 7.6-.8-22.7-.7 5.8-.7 11.4-.8-3.1-.7-1.2-.7-3.6-.8 2.2-.7 6.4-.8-5.1-.7 .4-.7 2.8-.8-1.2-.7-13.8-.7 1.1-.8 7.1-.7 5.2-.8 4.8-.7-10.3-.7-.8-.8-1.9-.7 5.6-.7-.5-.8-.2-.7-1.5-.8 9.7-.7-5-.7-12.3-.8 7-.7-1-.7-12.4-.8 18.2-.7-2.7-.8-8.2-.7 2-.7 .9-.8-8.4-.7 5.8-.7 12.8-.8-3.1-.7 1.5-.8-8.1-.7 4.8-.7-.7-.8-1.2-.7 3.6-.7-6.4-.8-5.3-.7 14.3-.8-4.5-.7-5.6-.7 6.5-.8-4.6-.7 2-.7 4.1-.8 1.9-.7-12.7-.8 16.7-.7-20-.7 14.2-.8 2.7-.7 1.1-.7-4.2-.8-6.2-.7 8.4-.8-.1-.7-3.6-.7-2.8-.8-1.3-.7 7.5-.7-5.4-.8 2.3-.7 2.9-.8-6.3-.7-2.5-.7 .4-.8 7.1-.7-2.8-.7 6.4-.8 .5-.7-10.2-.8 1.3-.7 .9-.7-4.3-.8 10.8-.7-11-.7 3.1-.8 3.2-.7-8.8-.8 18-.7-9.3-.7-2-.8 5.3-.7-1.9-.7-2-.8-3.3-.7-1.9-.8-4-.7 19.1-.7-10.8-.8-2.6-.7-1.2-.7 4.8-.8-2.1-.7-4.3-.8 5.1-.7 8.2-.7-4.8-.8-2.5-.7 1.5-.7-4.1-.8-2.1-.7 4.6-.8 5-.7-5-.7-2.9-.8 .5-.7-3.5-.7 12.7-.8-8.2-.7 12.5-.8-19.3-.7 17.5-.7-1.8-.8-10.3-.7 1.2-.7 3-.8 4.9-.7-.4-.8-3.7-.7-5.2-.7 1.1-.8 4-.7 11.2-.7-12.6-.8-3-.7-6.9-.8 6.5-.7 .8-.7-.1-.8 3.7-.7-4-.7 5.6-.8 3.2-.7-8-.8 3.8-.7 7.1-.7-9.8-.8 15.2-.7-18.4-.7-9.8-.8 8.3-.7-.3-.8 4.3-.7-1.6-.7 6.6-.8-7.8-.7 7.6-.7-12.4-.8 8-.7 2.2-.8 9.4-.7-16.4-.7 7.4-.8 .1-.7 10-.7-8.2-.8-.8-.7-1.4-.8 5.4-.7-15.2-.7 16.1-.8-1.3-.7-8.3-.7 9.7-.8-7.2-.7 .4-.8-1-.7-3.9-.7 2.2-.8-.9-.7 5.1-.7 .4-.8 0-.7-5.8-.8 12-.7-11.6-.7-1-.8-.6-.7 5.3-.7 3.8-.8-7.4-.7 7.5-.8 3-.7-10.5-.7-2.1-.8 7.2-.7-5Z" fill="rgba(22,165,232,0.32)"/><path d="M294 460.9l.7-2.6 .8-1.6 .7 1.3 .7-.2 .8 .1 .7 1 .8 .8 .7-2.4 .7-.2 .8 .6 .7 0 .7 0 .8 .5 .7-.3 .8 .5 .7-.3 .7 1.3 .8-.5 .7-1.3 .7 .9 .8 2.3 .7-2.9 .8 2.8 .7-4.8 .7 1.4 .8 .2 .7 1.6 .7 .6 .8-.8 .7-.3 .8 1 .7-1.2 .7-.6 .8 .2 .7 1.8 .7 1.1 .8-2.5 .7 .7 .8-1.3 .7-1.4 .7 .1 .8 1.4 .7-.9 .7-.6 .8 1.8 .7-.4 .8-.6 .7 1.1 .7 .4 .8 .2 .7-.7 .7 .6 .8-1.6 .7 1.4 .8-1.9 .7 .1 .7 2.8 .8-2.5 .7 1.4 .7-1.8 .8 .7 .7 .4 .8-.8 .7 1.6 .7-.9 .8 0 .7 .7 .7-.6 .8 1.7 .7-1.5 .8 2.1 .7-2.3 .7 .4 .8-.5 .7 1.5 .7-4.1 .8 3.6 .7-.4 .8 1 .7-2.6 .7 1.9 .8-1.6 .7 2.2 .7-1.4 .8 .7 .7-1.6 .8 1.4 .7 .9 .7-1.3 .8 2 .7-.4 .7-2 .8 3.1 .7-2.9 .8 1.1 .7 .3 .7-1.2 .8-.6 .7 1.5 .7-.3 .8-1.1 .7-.2 .8 1 .7 .9 .7 .1 .8-.4 .7-1.6 .7 .1 .8 .5 .7-1.2 .8 2 .7-.1 .7 0 .8-2.7 .7 4.6 .7-2.8 .8-.4 .7 .5 .8-2.5 .7 1.4 .7 .5 .8 2 .7-1.6 .7 .9 .8-.4 .7 0 .8 .6 .7-1.2 .7-1.1 .8 .7 .7 .9 .7 2.4 .8-3.3 .7 0 .8 1.6 .7 .3 .7-1.3 .8 1.4 .7-1.7 .7 2.1 .8-.1 .7-1.2 .8 1.6 .7-1.5 .7-.5 .8 2 .7-2.6 .7 1.8 .8-1.4 .7 .4 .8 .6 .7 0 .7 1.2 .8-.9 .7 .1 .7-2.8 .8 .7 .7 2.7 .8-2.3 .7 .7 .7 .8 .8-1.2 .7-.2 .7 1.5 .8-.3 .7-.5 .8 1.3 .7-1.3 .7 .3 .8 .7 .7 .1 .7-1.2 .8-.5 .7 .7 .8 1.3 .7-1.9 .7 .7 .8-.3 .7-.7 .7 2.2 .8-.9 .7 .3 .8 .3 .7-3.2 .7 1.1 .8 2.9 .7-2.5 .7 1.1 .8-1.8 .7 1.1 .8 .1 .7-.2 .7-.4 .8 .5 .7 .4 .7 0 .8-.8 .7 1.9 .8-1.2 .7 .2 .7 .5 .8-1.3 .7 2.2 .7-1.1 .8 .6 .7-1.5 .8 1.3 .7-.8 .7-.3 .8 2.2 .7-2.2 .7 1.2 .8-.5 .7-.2 .8-1.2 .7 0 .7-1.2 .8 1.6 .7 .8 .7 0 .8-1.4 .7-1.1 .8 1.4 .7 1.1 .7-.8 .8 0 .7 .1 .7 1 .8 2 .7-2.2 .8-1.7 .7 .9 .7 2.5 .8-2.4 .7 2.1 .7-4.2 .8 2 .7 1.5 .8-2.1 .7 1.7 .7-1.2 .8 .6 .7 1.2 .7-2.1 .8 2.2 .7-3 .8 1.3 .7 1.4 .7 .7 .8-3.7 .7 .2 .7 3 .8-3.2 .7 1.6 .8 .4 .7-.3 .7 .2 .8-1.9 .7 1.4 .7 2.2 .8-4.2 .7 1.3 .8 2.1 .7-.7 .7 .5 .8-1 .7-.2 .7 .1 .8 .8 .7 .3 .8-1.6 .7 1.1 .7-2.5 .8 3.2 .7-1.8 .7 .8 .8 1.1 .7-2.4 .8 1.3 .7 1.2 .7-.7 .8-1.3 .7 2.4 .7-2.8 .8 .7 .7 1.2 .8-1.8 .7-.6 .7 1.4 .8 .3 .7-1.6 .7 .3 .8 2.5 .7-.7 .8 0 .7 .2 .7 1.1 .8-2.5 .7 .8 .7 0 .8-1.3 .7 1.9 .8-.6 .7-.3 .7 .7 .8-.5 .7-.9 .7 .7 .8-1.4 .7 2.5 .8-1.1 .7 1.9 .7-1.3 .8 1 .7-2.3 .7 .7 .8 .1 .7-1.5 .8 .5 .7 .7 .7 1.3 .8 .7 .7-1.6 .7 .3 .8 .4 .7-.4 .8 1.6 .7-3.5 .7 3 .8-.6 .7-1.4 .7 2.5 .8-2.9 .7-.2 .8 1.4 .7 .8 .7-.8 .8 1.5 .7-3.7" stroke="#ee7088" stroke-width="1.7" stroke-linejoin="round"/><path d="M294 450.5l.7-2.5 .8-1.3 .7 1.4 .7-.5 .8 4.4 .7-5.3 .8 2 .7-.1 .7-1.8 .8-4.7 .7 4.1 .7 1.9 .8-4.4 .7 5.1 .8-.9 .7 .8 .7 .2 .8-2.6 .7-.9 .7 3.5 .8 1.3 .7-3.4 .8 3.9 .7-5.9 .7 3.3 .8 .3 .7 .1 .7 2.7 .8-3.8 .7 1.3 .8 2.3 .7-1.7 .7-1.3 .8-.8 .7 1 .7 1.9 .8-1.1 .7-4.3 .8-.1 .7 .4 .7-1.4 .8 3.1 .7 .5 .7-1.4 .8-3.9 .7 3.1 .8-.7 .7 4.1 .7-1.8 .8-3.4 .7 3.3 .7-.7 .8-2.1 .7 2.7 .8-4.1 .7 3.1 .7 1.9 .8-.2 .7-5.5 .7 3.3 .8 1.2 .7-2.5 .8 3.2 .7 .5 .7 .9 .8-1.5 .7 1.5 .7-2.5 .8 3.3 .7-.2 .8 1.4 .7-2.5 .7 1.4 .8-3.7 .7 1.8 .7-2.9 .8 6.3 .7-4.3 .8 4.9 .7-5.8 .7 2 .8-.3 .7 2.8 .7-1.8 .8-5.2 .7 3.4 .8 1.2 .7-1.5 .7-.1 .8 .8 .7 4.6 .7-2.4 .8-6.2 .7 4.4 .8 1.6 .7-.7 .7-3.3 .8 3.9 .7-1.6 .7 .4 .8-2.6 .7 .9 .8 2.5 .7 1.7 .7 3.7 .8-7.3 .7 3.6 .7-2.3 .8-3.8 .7 3.1 .8-.2 .7 1.7 .7-2.1 .8-1.4 .7 5.7 .7-6.3 .8 2.9 .7 2.8 .8-4.4 .7-.5 .7 3.9 .8-2 .7-1.7 .7-2.2 .8 5.6 .7-2.7 .8 5.4 .7-4.1 .7-2.4 .8 .2 .7 1.9 .7 2.4 .8-2.4 .7-.2 .8 0 .7-.2 .7-1.5 .8 .8 .7-1.9 .7 8.5 .8-2.7 .7-2.1 .8 2.6 .7-4.8 .7 .2 .8 3.6 .7-3.2 .7-.7 .8 1.9 .7 .5 .8-1.9 .7 .8 .7-.7 .8 1.3 .7-.8 .7 0 .8 1.6 .7 .6 .8 3.4 .7-5.8 .7-.7 .8 1 .7 .5 .7-1.3 .8 2.2 .7-2.3 .8-1.3 .7 1.8 .7 0 .8 1.4 .7 .6 .7-1.6 .8-.1 .7-1.7 .8 6.8 .7-4.7 .7-1.6 .8 2.7 .7-2.3 .7 3.5 .8-3.4 .7-.4 .8-1.3 .7-1.2 .7 4.1 .8 .8 .7-2.8 .7-.6 .8 5.9 .7-4.2 .8 5 .7-5.6 .7 .2 .8 .7 .7-.6 .7 1.2 .8 1.2 .7-.1 .8-3.1 .7 3.1 .7 .2 .8 1.2 .7-2.8 .7 2.2 .8 1.1 .7-2.2 .8 2.2 .7-1.8 .7-3.5 .8 3.2 .7-3.4 .7 1.2 .8 4.6 .7-3.6 .8-3.3 .7-2.1 .7 6.4 .8 1.7 .7-3.3 .7 1.6 .8-.1 .7-3.7 .8 3.8 .7 4.6 .7-5.3 .8-.3 .7-1 .7 .6 .8 3.4 .7-1.4 .8-.9 .7 2.8 .7-.1 .8-5.7 .7 2.6 .7-7.1 .8 6.8 .7 5.1 .8-7.9 .7 1.4 .7 3.6 .8 1.6 .7-2.4 .7-3.3 .8 5.8 .7-4.5 .8 2.7 .7 2.3 .7 .8 .8-6.6 .7 1.3 .7 3.7 .8 1.1 .7-7.4 .8 6 .7-2.2 .7 2.3 .8-5.4 .7 5.4 .7-1.2 .8-3.9 .7-1.2 .8 6.2 .7-1.7 .7-.4 .8-5.9 .7 7.1 .7-3.7 .8 3.1 .7-1.6 .8-2.2 .7 2.1 .7-2.6 .8 3.3 .7 .1 .7 .2 .8 4.1 .7-5.2 .8 2 .7 .2 .7-2.8 .8-.5 .7 2.2 .7-4 .8 8 .7-4.6 .8-.9 .7-.5 .7 4.1 .8-3.4 .7-2.9 .7 .3 .8 5 .7-2 .8-.5 .7-1.7 .7 2.3 .8-.5 .7 .8 .7 .1 .8-1.6 .7 3 .8-3.1 .7 2.8 .7 .8 .8-2.9 .7 1.3 .7-.1 .8 2.6 .7-3.6 .8 .8 .7 2 .7-2.2 .8 1.4 .7-.3 .7-5.1 .8 5.1 .7-4.6 .8-1.7 .7 6 .7-.3 .8 2.6 .7-5.8 .7 3.2 .8 2 .7-5.4 .8 2.5 .7 .3 .7-1.5 .8 1.5 .7-6.5 .7 4.7 .8 2 .7-.7 .8 2.7 .7-1.2 .7-.4 .8 .2 .7-2.3" stroke="#ec952c" stroke-width="1.7" stroke-linejoin="round"/><path d="M294 431.9l.7 5.9 .8-4.9 .7 1.8 .7 8.7 .8-1.7 .7-10.1 .8 12.2 .7-8.8 .7 2.9 .8-5.8 .7 2.1 .7 7.6 .8-10.1 .7 7.6 .8-.6 .7-3 .7-7.2 .8 5.7 .7-1.6 .7 5.3 .8 3.2 .7-6 .8 .5 .7-2.4 .7 1.7 .8 3.4 .7-7.1 .7 13.8 .8-9.7 .7 1.2 .8 3 .7 1.9 .7-1.5 .8-3.1 .7 .3 .7 5.3 .8-1.7 .7-8.5 .8-1.3 .7 4.6 .7-1.1 .8 3.1 .7-8.1 .7 3.9 .8-2 .7 .2 .8-4 .7 7.2 .7 5.3 .8-7.1 .7 4.2 .7-.9 .8 .4 .7 .6 .8-2.5 .7-.5 .7 2.5 .8 3.5 .7-4.7 .7 0 .8-1.9 .7-2.1 .8 4.5 .7 8.6 .7-6.6 .8-.8 .7 .1 .7 0 .8 .9 .7 .5 .8-7.3 .7 3 .7 3.9 .8-4.3 .7 2.5 .7-4 .8 8.2 .7-5.4 .8 2.3 .7-5.2 .7 3.3 .8-2.6 .7 5.6 .7 1.6 .8-3.4 .7 .5 .8-.7 .7-2.6 .7-1.8 .8 5 .7 4.8 .7-6.6 .8-7.3 .7 8.9 .8-.6 .7-3.3 .7-.5 .8 5 .7 3.9 .7-8.6 .8-.8 .7 2.2 .8 4.3 .7 3.6 .7 .6 .8-7.2 .7 .2 .7 3.9 .8-10.7 .7 6.7 .8-3.6 .7 7.4 .7-5.3 .8-3.6 .7 8.6 .7-2.3 .8-.3 .7 .4 .8 .8 .7-.5 .7-.4 .8 .7 .7-6.1 .7 2.6 .8 7.4 .7-5.3 .8-.8 .7 2.5 .7-5 .8-.5 .7 5.4 .7-2.7 .8 .1 .7-1 .8 5.8 .7-.2 .7 1.5 .8-6 .7-2.1 .7 5.9 .8-4.7 .7 2.8 .8 2.5 .7-6.8 .7-2.6 .8 9.8 .7-7 .7 1.6 .8 2.2 .7-2.6 .8 2.6 .7 1.7 .7-5.5 .8 3.2 .7-.1 .7-.5 .8 0 .7 2.6 .8 0 .7-4.6 .7-3.7 .8 1.5 .7 1.6 .7 1.4 .8 1.5 .7 0 .8-10.4 .7 9.9 .7-1.7 .8-.8 .7 7.7 .7-2.5 .8-1.5 .7-.6 .8 7.5 .7-6.5 .7-6.5 .8 4.4 .7-.2 .7 3.4 .8 1.2 .7-6.5 .8-.4 .7 2.3 .7 .6 .8 1.8 .7-2.3 .7 .5 .8 5.1 .7-3.6 .8 1.4 .7-5.1 .7 .4 .8 2 .7-.3 .7-5 .8 11.5 .7-8.3 .8-.8 .7 3.9 .7 1.5 .8 .5 .7 0 .7 2.3 .8-2.7 .7 1.9 .8-4.5 .7-3.1 .7 8.5 .8-1.6 .7-8.3 .7 1.8 .8 5.1 .7-4.3 .8-4 .7-2.1 .7 4.3 .8 6.1 .7-5.2 .7 8 .8-4.1 .7-.8 .8-2.7 .7 1.8 .7-.4 .8 4.8 .7-4.4 .7 .4 .8 3 .7-3.4 .8-.8 .7 12.5 .7-11 .8-.9 .7 2.8 .7-12.5 .8 11.4 .7 7.7 .8-8.3 .7-2.1 .7 1.3 .8-.1 .7 1.9 .7-2.4 .8 .1 .7 .9 .8-2.1 .7 5.4 .7 1 .8-5.2 .7 .1 .7 5.5 .8 1.7 .7-8.5 .8 7.4 .7-4.7 .7 2.8 .8-4.6 .7 5.2 .7-1.2 .8-9 .7 3.2 .8 7.6 .7-2.3 .7-3.1 .8-3.5 .7 7.2 .7-3.3 .8 2 .7-2.3 .8-2.1 .7 7.7 .7-4.3 .8 7.6 .7-8.8 .7-.8 .8 3.6 .7-1.6 .8-.8 .7 3 .7-2.4 .8 2.9 .7-.1 .7-4.5 .8 4.1 .7-7.1 .8 4.5 .7-2.6 .7 4.3 .8-.1 .7-.3 .7-2 .8 6.5 .7-4.8 .8-.8 .7-1.4 .7 2 .8-2.3 .7 4.4 .7-5.2 .8 5.2 .7-1.5 .8-4.1 .7 5.7 .7 3 .8-8.6 .7 4.7 .7-3.2 .8 2.3 .7-1.6 .8 .9 .7-.6 .7-.5 .8 4.8 .7-3.5 .7-6.3 .8 6.5 .7-4.7 .8-1.1 .7 5.8 .7 1.8 .8 3.9 .7-12.4 .7 7.5 .8-.6 .7-.9 .8-1.6 .7 2.9 .7-11.5 .8 12.2 .7-6.4 .7 .1 .8 1.6 .7 8 .8-3.6 .7-2.7 .7 5.3 .8-5.1 .7 .7" stroke="#12b886" stroke-width="1.7" stroke-linejoin="round"/><path d="M294 418.7l.7 5 .8-7.2 .7 2.1 .7 10.5 .8-3 .7-7.5 .8 7.4 .7-3.8 .7-5.3 .8 .6 .7 1 .7 11.6 .8-12 .7 5.8 .8 0 .7-.4 .7-5.1 .8 .9 .7-2.2 .7 3.9 .8 1 .7-.4 .8 7.2 .7-9.7 .7 8.3 .8 1.3 .7-16.1 .7 15.2 .8-5.4 .7 1.4 .8 .8 .7 8.2 .7-10 .8-.1 .7-7.4 .7 16.4 .8-9.4 .7-2.2 .8-8 .7 12.4 .7-7.6 .8 7.8 .7-6.6 .7 1.6 .8-4.3 .7 .3 .8-8.3 .7 9.8 .7 18.4 .8-15.2 .7 9.8 .7-7.1 .8-3.8 .7 8 .8-3.2 .7-5.6 .7 4 .8-3.7 .7 .1 .7-.8 .8-6.5 .7 6.9 .8 3 .7 12.6 .7-11.2 .8-4 .7-1.1 .7 5.2 .8 3.7 .7 .4 .8-4.9 .7-3 .7-1.2 .8 10.3 .7 1.8 .7-17.5 .8 19.3 .7-12.5 .8 8.2 .7-12.7 .7 3.5 .8-.5 .7 2.9 .7 5 .8-5 .7-4.6 .8 2.1 .7 4.1 .7-1.5 .8 2.5 .7 4.8 .7-8.2 .8-5.1 .7 4.3 .8 2.1 .7-4.8 .7 1.2 .8 2.6 .7 10.8 .7-19.1 .8 4 .7 1.9 .8 3.3 .7 2 .7 1.9 .8-5.3 .7 2 .7 9.3 .8-18 .7 8.8 .8-3.2 .7-3.1 .7 11 .8-10.8 .7 4.3 .7-.9 .8-1.3 .7 10.2 .8-.5 .7-6.4 .7 2.8 .8-7.1 .7-.4 .7 2.5 .8 6.3 .7-2.9 .8-2.3 .7 5.4 .7-7.5 .8 1.3 .7 2.8 .7 3.6 .8 .1 .7-8.4 .8 6.2 .7 4.2 .7-1.1 .8-2.7 .7-14.2 .7 20 .8-16.7 .7 12.7 .8-1.9 .7-4.1 .7-2 .8 4.6 .7-6.5 .7 5.6 .8 4.5 .7-14.3 .8 5.3 .7 6.4 .7-3.6 .8 1.2 .7 .7 .7-4.8 .8 8.1 .7-1.5 .8 3.1 .7-12.8 .7-5.8 .8 8.4 .7-.9 .7-2 .8 8.2 .7 2.7 .8-18.2 .7 12.4 .7 1 .8-7 .7 12.3 .7 5 .8-9.7 .7 1.5 .8 .2 .7 .5 .7-5.6 .8 1.9 .7 .8 .7 10.3 .8-4.8 .7-5.2 .8-7.1 .7-1.1 .7 13.8 .8 1.2 .7-2.8 .7-.4 .8 5.1 .7-6.4 .8-2.2 .7 3.6 .7 1.2 .8 3.1 .7-11.4 .7-5.8 .8 22.7 .7-7.6 .8-7.6 .7 .2 .7 1.6 .8 3.7 .7-1.7 .7 3.1 .8 .8 .7-7.9 .8 2.5 .7 1.5 .7 6.1 .8 2.8 .7-14.6 .7-1.9 .8 14.2 .7-13.3 .8-7.8 .7 4.3 .7 10.1 .8 4.6 .7-7.1 .7 11.5 .8-4 .7-4.5 .8-2.5 .7-1 .7 6.6 .8-6.9 .7-1.2 .7 1 .8 8.8 .7-12.7 .8 7.1 .7 4.1 .7-8.4 .8 6.9 .7 1.2 .7-21.5 .8 14.3 .7 12 .8-10 .7-2.1 .7 5.4 .8-2.3 .7 3.5 .7-3.1 .8-3.3 .7 6.1 .8-8.6 .7 8.1 .7-1.8 .8-6 .7-1.2 .7 7.9 .8 2 .7-5.1 .8 4.4 .7 .7 .7 .4 .8-8.5 .7 8.2 .7-3.1 .8-3.6 .7-6.1 .8 15.3 .7-6 .7-1.6 .8-7 .7 12.1 .7-1 .8 5.6 .7-8.6 .8 1.2 .7 1.2 .7-7.6 .8 21.8 .7-12.3 .7-6.9 .8-.1 .7 2.1 .8-.9 .7 1.9 .7-2.6 .8-1.3 .7 3.8 .7 2.6 .8 1.3 .7-9.7 .8 8.5 .7-4.4 .7 5.7 .8 .4 .7-5.6 .7 2 .8 9.3 .7-6.2 .8-3.8 .7-9.3 .7 8.8 .8-7.1 .7 8.2 .7 5.1 .8-4.4 .7 2.9 .8-1.9 .7 4.6 .7-8.3 .8 4.3 .7 1.3 .7-10 .8 4.1 .7 7.8 .8-5 .7 .7 .7-1.5 .8 1.2 .7 1.6 .7-7.5 .8-.4 .7 8 .8-7 .7 2.8 .7 8.4 .8 1.5 .7-9.6 .7 2 .8 2.2 .7-6.3 .8-2.6 .7 6.7 .7-10 .8 9.7 .7-5.6 .7 5 .8-6.9 .7 11 .8-5.9 .7 5.8 .7-3 .8-9.6 .7 6.6" stroke="#5cc8c2" stroke-width="1.7" stroke-linejoin="round"/><path d="M294 398.8l.7 12.7 .8-4 .7-2.8 .7 13.8 .8-2.9 .7-7.4 .8 5.1 .7-1.8 .7 .1 .8-8.6 .7 5.3 .7 4.1 .8-9.3 .7 5.3 .8 1.8 .7-4.9 .7 1.7 .8 4 .7-8.2 .7 16.8 .8-9.1 .7-2.7 .8 10.2 .7-16.7 .7 10.6 .8 3.7 .7-13.5 .7 9.1 .8 2 .7 .4 .8-4.8 .7 8.3 .7-16.1 .8 9.4 .7-.8 .7 5.8 .8-12.1 .7 3.8 .8-15 .7 11.7 .7 2.1 .8 6.8 .7-3.3 .7-6.6 .8-5 .7 .9 .8-.7 .7 7.9 .7 21.8 .8-14 .7 8.8 .7-5.9 .8-9.2 .7 5.1 .8-3.8 .7-3.2 .7 7.1 .8-6.9 .7-2.2 .7 2.6 .8-8.5 .7 8.4 .8 3.5 .7 10.4 .7-6.5 .8-13.1 .7 9.8 .7-3 .8 11.7 .7-11.2 .8-2 .7 4.2 .7-2.7 .8 13.2 .7-2.7 .7-19.2 .8 10.3 .7 4 .8-2.8 .7-4.9 .7-.4 .8-2.8 .7 4.7 .7 5.2 .8-2.4 .7-5.5 .8 .8 .7-.6 .7 9.8 .8-2 .7 7.6 .7-9.5 .8-5.7 .7-3.6 .8-1.8 .7-1.5 .7 11.8 .8-2.5 .7 15.8 .7-25.6 .8 .2 .7 4.7 .8 1.8 .7 6.6 .7 10 .8-5.3 .7-5.8 .7 6.5 .8-20.5 .7 15.3 .8-4.7 .7-3.6 .7 8 .8-5.5 .7 8.8 .7-10.5 .8 1.6 .7 10.7 .8 6.7 .7-12.2 .7 9.5 .8-6.4 .7-8.3 .7 3.3 .8 1.5 .7-6.5 .8 3.8 .7-1.9 .7 3 .8-4.8 .7 11.7 .7-1.9 .8 2.1 .7-9.4 .8 2.7 .7 14.3 .7-10 .8 1.6 .7-17.8 .7 18.7 .8-13.3 .7 13.1 .8 1.3 .7-11.1 .7 3 .8 0 .7 1 .7-6 .8 14.4 .7-23.7 .8 12.2 .7 2 .7-.5 .8-2.1 .7 3.6 .7-10.3 .8 10.7 .7-1.3 .8-1 .7-2.6 .7-14.3 .8 13.2 .7 6 .7-10.4 .8 11 .7-5.3 .8-9.3 .7 10 .7-.1 .8 2.4 .7 1.4 .7 11.6 .8-19.3 .7 .1 .8 7.6 .7 7.4 .7-12.7 .8 2.1 .7-1.4 .7 14.7 .8-1.4 .7-9.8 .8-3.8 .7-12.6 .7 24.5 .8 .6 .7-5.4 .7 4.6 .8 1.9 .7-7.6 .8-.7 .7 2.5 .7-5.7 .8 6.7 .7-3.8 .7-9.3 .8 17.5 .7-1.6 .8-10.9 .7 .9 .7-.5 .8 6.3 .7-1.8 .7 5.4 .8-4.4 .7-2.2 .8-8.6 .7 9 .7 6.8 .8-1.5 .7-10.9 .7-2.3 .8 14.7 .7-11 .8-6.7 .7 3.2 .7 3.1 .8 12.3 .7-7.8 .7 11.7 .8-8.8 .7-9.4 .8 9.8 .7-7.7 .7 8 .8-5.1 .7-5.1 .7 8.7 .8 .2 .7-10.7 .8 12.1 .7-6.4 .7-5.3 .8 5.7 .7 12.7 .7-26.7 .8 15.2 .7 7.7 .8-13.2 .7 11.7 .7-2.4 .8-2 .7-1.3 .7 .9 .8 1.8 .7 1.8 .8-5 .7 6.9 .7-5.6 .8-3.9 .7-4.8 .7 15.6 .8-14.3 .7-.8 .8 6.6 .7 9.4 .7 4.2 .8-13.8 .7 5.9 .7-13.3 .8 .2 .7 1.4 .8 8.2 .7-6.5 .7 3.5 .8-12.1 .7 15.7 .7 2.8 .8 8 .7-12.7 .8-3.3 .7 10.9 .7-6.7 .8 12.8 .7 1.5 .7-25.8 .8 9.4 .7-2.8 .8-5.8 .7 16 .7-4.3 .8-15 .7 14.6 .7 1.8 .8-.2 .7-13.4 .8 7.4 .7 .9 .7 7.8 .8-.7 .7-7 .7-2.2 .8 14.4 .7-13.2 .8 7.3 .7-15.2 .7 3.2 .8-5.4 .7 12.4 .7 10.5 .8-5.2 .7 .2 .8-3.7 .7 6.9 .7-3.5 .8 1.5 .7-4.3 .7-11.5 .8 13.4 .7 3.4 .8 .3 .7-4 .7-18.5 .8 15.9 .7 3.3 .7-6.2 .8 2.4 .7 10.9 .8-14.6 .7 3.9 .7 1.2 .8 14.5 .7-18.4 .7-2 .8 15.4 .7-17.1 .8 7.1 .7-2.4 .7-14.1 .8 16 .7-6.6 .7 9.3 .8-10.8 .7 7 .8-.2 .7 5.6 .7-5.2 .8-11.6 .7 16.7" stroke="#16a5e8" stroke-width="1.7" stroke-linejoin="round"/></svg>
<span class="t" style="left:296.5px;top:475.7px;font-size:10px;font-weight:400;color:#9ba0ad;">Mar 7</span>
<span class="t" style="left:379.0px;top:475.7px;font-size:10px;font-weight:400;color:#9ba0ad;">Mar 8</span>
<span class="t" style="left:462.4px;top:475.7px;font-size:10px;font-weight:400;color:#9ba0ad;">Mar 9</span>
<span class="t" style="left:513.6px;top:475.7px;font-size:10px;font-weight:400;color:#9ba0ad;width:43.4px;overflow:hidden;">6:00:00pm</span>
<div style="position:absolute;left:274.2px;top:499.90000000000003px;width:7.6px;height:7.6px;background:#16a5e8;border-radius:1.5px;"></div>
<span class="t" style="left:286.6px;top:497.6px;font-size:11.8px;font-weight:400;color:#a0a5b3;width:223.9px;overflow:hidden;padding-bottom:4px;">query = show global variables - Query time per second</span>
<span class="t" style="left:526.0px;top:496.5px;font-size:11px;font-weight:400;color:#a0a5b3;">+4</span>
<div style="position:absolute;left:577px;top:312px;width:314px;height:206px;background:#222737;border:1px solid #2c3142;border-radius:8px;box-sizing:border-box;"></div>
<span class="t m" style="left:592.0px;top:329.1px;font-size:11.6px;font-weight:400;color:#e6e8ee;-webkit-text-stroke:0.45px currentColor;">I/O time by table</span>
<svg style="position:absolute;left:862px;top:333px" width="11" height="4" viewBox="0 0 11 4"><g fill="#7d8294"><circle cx="1.5" cy="2" r="1"/><circle cx="5.2" cy="2" r="1"/><circle cx="8.9" cy="2" r="1"/></g></svg>
<span class="t" style="right:611.0px;top:375.0px;font-size:10px;font-weight:400;color:#9ba0ad;">2.5</span>
<div style="position:absolute;left:620.5px;top:379px;width:247.5px;height:1px;background:#2b3043;"></div>
<span class="t" style="right:611.0px;top:392.7px;font-size:10px;font-weight:400;color:#9ba0ad;">2</span>
<div style="position:absolute;left:620.5px;top:397px;width:247.5px;height:1px;background:#2b3043;"></div>
<span class="t" style="right:611.0px;top:410.3px;font-size:10px;font-weight:400;color:#9ba0ad;">1.5</span>
<div style="position:absolute;left:620.5px;top:415px;width:247.5px;height:1px;background:#2b3043;"></div>
<span class="t" style="right:611.0px;top:428.0px;font-size:10px;font-weight:400;color:#9ba0ad;">1</span>
<div style="position:absolute;left:620.5px;top:432px;width:247.5px;height:1px;background:#2b3043;"></div>
<span class="t" style="right:611.0px;top:445.6px;font-size:10px;font-weight:400;color:#9ba0ad;">0.5</span>
<div style="position:absolute;left:620.5px;top:450px;width:247.5px;height:1px;background:#2b3043;"></div>
<span class="t" style="right:611.0px;top:463.2px;font-size:10px;font-weight:400;color:#9ba0ad;">0</span>
<svg style="position:absolute;left:0;top:0" width="1224" height="896" viewBox="0 0 1224 896" fill="none"><path d="M620.5 452.5l.5-1.4 .5 1.5 .4-.2 .5-.5 .5 4.6 .5-1.8 .4 3 .5 .7 .5-2.7 .5 .6 .4-3.4 .5-1.1 .5 2.7 .5-.1 .4-.2 .5 0 .5-.6 .5-.4 .4 1.8 .5 .6 .5-.1 .5-2 .5 2.3 .4-3.4 .5 2.3 .5-4 .5 4 .4-1.1 .5-2.3 .5 .6 .5 1.8 .4-4.4 .5 4.2 .5-.3 .5 1.5 .4-3.7 .5 1.2 .5 .5 .5 3.7 .5-2.8 .4 1.2 .5-1.4 .5-.7 .5 2.9 .4-1.5 .5-1.3 .5 .8 .5 .6 .4 .9 .5-.3 .5 1.1 .5-3.8 .4 2.1 .5 2.4 .5-2.1 .5 2.1 .4 2.9 .5-7.7 .5 .2 .5 4.6 .5-.8 .4-2.2 .5 1.1 .5 1.2 .5-1.1 .4-.1 .5 .2 .5-1.5 .5 1.3 .4 .8 .5-.9 .5 3.1 .5-5.8 .4 5.8 .5-3.4 .5-1.2 .5-.4 .5 0 .4-.8 .5 4.6 .5-1.5 .5-.7 .4 .7 .5 0 .5-3.4 .5 4 .4-1 .5-.1 .5-.1 .5-1.4 .4 1.3 .5-1.3 .5 .1 .5-.3 .4-2 .5 3.8 .5-4 .5 3.4 .5-1.6 .4 1 .5 .6 .5 3.1 .5-6.5 .4 4.4 .5 .3 .5-3.5 .5 1.7 .4-3.7 .5 .6 .5 2.2 .5 .9 .4-1.2 .5 3.5 .5-3.1 .5 .2 .5 1.2 .4-1 .5 3.3 .5-4 .5-.5 .4 4.1 .5-2.2 .5-2.6 .5 2.3 .4 3.1 .5-.1 .5-3.2 .5-2 .4 4.3 .5-2.1 .5 1.3 .5-.7 .4-.5 .5 .5 .5 .9 .5-4.9 .5 3.8 .4 .1 .5-2.4 .5 2.2 .5 .3 .4-1.9 .5 4 .5-3.3 .5-.4 .4 .3 .5 1.3 .5 .1 .5 3.5 .4-2.9 .5-.6 .5-1.8 .5 .7 .5 1.4 .4 .5 .5-1 .5-.3 .5-1.8 .4 2.1 .5 .5 .5-.5 .5-.1 .4-.1 .5 3.6 .5-.7 .5 .3 .4-3.7 .5 .7 .5-1.1 .5-1.9 .4 4.4 .5-3.6 .5 1.6 .5 1.4 .5-3.5 .4 5.2 .5-.2 .5-1.4 .5-1.4 .4 1.2 .5 3.1 .5-3.1 .5-.3 .4-5.1 .5 2 .5 1.9 .5 2.5 .4-2.1 .5 2.4 .5-2 .5-.6 .4 1.5 .5-1.2 .5 .9 .5 .5 .5-4.1 .4 1.7 .5 1.3 .5 .3 .5-1.5 .4-.4 .5-.2 .5-.7 .5 2 .4 2.6 .5-5.6 .5 1.4 .5 .3 .4-.8 .5 5.2 .5-1.7 .5 .7 .5-2.4 .4 3.7 .5-1.4 .5-3.2 .5 1.3 .4 1.6 .5-4.1 .5 4.9 .5-3.3 .4 1.5 .5-1.5 .5 1.5 .5 .9 .4-1.7 .5 3 .5-2.8 .5 1.6 .4-2.5 .5 1.9 .5-.3 .5-2.1 .5-1.7 .4 6.1 .5-4.2 .5-1.1 .5 3.1 .4-.9 .5-2.1 .5 2.7 .5 .3 .4-4 .5 5 .5-.2 .5 2.6 .4-2.3 .5 .1 .5-4.4 .5 .7 .5 4.3 .4-5.4 .5 1.9 .5 1.8 .5-1.3 .4 .9 .5 1.2 .5 1.4 .5-1.4 .4-1.5 .5 1 .5 .4 .5-3.4 .4 2.8 .5-3.1 .5 2.9 .5-.4 .4 1.9 .5-2.4 .5 2 .5 1.8 .5-2.6 .4 .1 .5-2 .5 .3 .5 1.9 .4-.8 .5 3.7 .5-2.2 .5-3.3 .4-.1 .5 .8 .5 .8 .5-.6 .4 0 .5 4.1 .5-1.6 .5-3.8 .5-.1 .4 1.5 .5 .9 .5 .1 .5 .3 .4 .8 .5 1.9 .5-3.2 .5 .3 .4-.3 .5-3.4 .5 1.6 .5 3.1 .4-2.5 .5 3.8 .5-4.5 .5 1.6 .4 1.2 .5-1.2 .5-2.1 .5 3.3 .5 1 .4-5.8 .5 3.8 .5-2.5 .5 3.9 .4-1.8 .5 2 .5-2.2 .5 1.6 .4 1 .5-4 .5 1.7 .5 3.5 .4-3.3 .5 1.4 .5 .3 .5-.9 .5-.3 .4-.6 .5 1.8 .5 1.7 .5-2.2 .4-2.5 .5 3.6 .5-3.5 .5 .2 .4 1.6 .5-1.4 .5 1.3 .5-.4 .4 1.3 .5-2.1 .5-.7 .5 3.7 .4-3.4 .5 5.4 .5-2.6 .5-.6 .5-5.2 .4 4.4 .5-2.5 .5 5.5 .5-3.5 .4-.6 .5 1 .5 4.3 .5-5.1 .4-1.3 .5-.6 .5 1.9 .5 3.3 .4-2.7 .5-2.1 .5 3.5 .5-2.1 .4 2.3 .5-1.4 .5-1.9 .5 2.3 .5-7 .4 4.7 .5-.2 .5 2.5 .5-1.1 .4 1.7 .5 2.6 .5 0 .5-3.2 .4-.1 .5 4.5 .5-1.1 .5-3.3 .4-.3 .5-1.4 .5 3.9 .5-3.1 .5 1.4 .4 .2 .5-.9 .5-2 .5 .9 .4-.3 .5 2.2 .5-.6 .5 1.8 .4-1.3 .5-.7 .5 0 .5-2.1 .4 .3 .5 .2 .5 .9 .5-1.2 .4 1.8 .5-1.6 .5 1.2 .5-1.4 .5 1.6 .4 2.1 .5 .4 .5-5.2 .5 2.8 .4 .3 .5 .6 .5-.2 .5-5.8 .4 7 .5-1.6 .5 .5 .5 1.7 .4-.2 .5-1 .5-1 .5 .1 .5-2.7 .4 3.5 .5-3 .5-1.5 .5 1.7 .4 3.2 .5 3.2 .5-6.8 .5 .3 .4 2.3 .5-2.9 .5 2.5 .5-1 .4 1.9 .5-3 .5 1.5 .5 .4 .4-2.9 .5 1.9 .5 3.2 .5-3.9 .5-.7 .4 2.9 .5-.7 .5-1 .5 1.3 .4-1 .5-.8 .5 2.3 .5-4.7 .4 5.4 .5-.6 .5-4.7 .5-1 .4 4.3 .5 .6 .5 2 .5-3.7 .5 1 .4 1.8 .5-2.4 .5-1.9 .5 1.2 .4-3.1 .5 2.3 .5 1.5 .5 1.2 .4-.3 .5-1.7 .5 1 .5 .2 .4 1.4 .5-.8 .5-1.6 .5 2 .4 2.1 .5-4.9 .5 2.6 .5 1.7 .5-1.5 .4 .7 .5 2.6 .5-2.1 .5 2.2 .4-2.9 .5 1.1 .5-3.1 .5 2.1 .4-1.3 .5 .3 .5 .8 .5 1.6 .4-3.8 .5 1 .5 1 .5-.6 .5 .6 .4 .5 .5-1.6 .5-2.5 .5 2.9 .4 2.8 .5-.9 .5-4.3 .5 4.7 .4-3.8 .5 2.1 .5-1.1 .5 1.1 .4 2.8 .5-2.3 .5-4.3 .5 4.1 .4-1.5 .5 1.6 .5-.6 0 13.9-.5 0-.5 0-.4 0-.5 0-.5 0-.5 0-.4 0-.5 0-.5 0-.5 0-.4 0-.5 0-.5 0-.5 0-.4 0-.5 0-.5 0-.5 0-.4 0-.5 0-.5 0-.5 0-.5 0-.4 0-.5 0-.5 0-.5 0-.4 0-.5 0-.5 0-.5 0-.4 0-.5 0-.5 0-.5 0-.4 0-.5 0-.5 0-.5 0-.5 0-.4 0-.5 0-.5 0-.5 0-.4 0-.5 0-.5 0-.5 0-.4 0-.5 0-.5 0-.5 0-.4 0-.5 0-.5 0-.5 0-.4 0-.5 0-.5 0-.5 0-.5 0-.4 0-.5 0-.5 0-.5 0-.4 0-.5 0-.5 0-.5 0-.4 0-.5 0-.5 0-.5 0-.4 0-.5 0-.5 0-.5 0-.5 0-.4 0-.5 0-.5 0-.5 0-.4 0-.5 0-.5 0-.5 0-.4 0-.5 0-.5 0-.5 0-.4 0-.5 0-.5 0-.5 0-.4 0-.5 0-.5 0-.5 0-.5 0-.4 0-.5 0-.5 0-.5 0-.4 0-.5 0-.5 0-.5 0-.4 0-.5 0-.5 0-.5 0-.4 0-.5 0-.5 0-.5 0-.5 0-.4 0-.5 0-.5 0-.5 0-.4 0-.5 0-.5 0-.5 0-.4 0-.5 0-.5 0-.5 0-.4 0-.5 0-.5 0-.5 0-.4 0-.5 0-.5 0-.5 0-.5 0-.4 0-.5 0-.5 0-.5 0-.4 0-.5 0-.5 0-.5 0-.4 0-.5 0-.5 0-.5 0-.4 0-.5 0-.5 0-.5 0-.5 0-.4 0-.5 0-.5 0-.5 0-.4 0-.5 0-.5 0-.5 0-.4 0-.5 0-.5 0-.5 0-.4 0-.5 0-.5 0-.5 0-.4 0-.5 0-.5 0-.5 0-.5 0-.4 0-.5 0-.5 0-.5 0-.4 0-.5 0-.5 0-.5 0-.4 0-.5 0-.5 0-.5 0-.4 0-.5 0-.5 0-.5 0-.4 0-.5 0-.5 0-.5 0-.5 0-.4 0-.5 0-.5 0-.5 0-.4 0-.5 0-.5 0-.5 0-.4 0-.5 0-.5 0-.5 0-.4 0-.5 0-.5 0-.5 0-.5 0-.4 0-.5 0-.5 0-.5 0-.4 0-.5 0-.5 0-.5 0-.4 0-.5 0-.5 0-.5 0-.4 0-.5 0-.5 0-.5 0-.4 0-.5 0-.5 0-.5 0-.5 0-.4 0-.5 0-.5 0-.5 0-.4 0-.5 0-.5 0-.5 0-.4 0-.5 0-.5 0-.5 0-.4 0-.5 0-.5 0-.5 0-.5 0-.4 0-.5 0-.5 0-.5 0-.4 0-.5 0-.5 0-.5 0-.4 0-.5 0-.5 0-.5 0-.4 0-.5 0-.5 0-.5 0-.4 0-.5 0-.5 0-.5 0-.5 0-.4 0-.5 0-.5 0-.5 0-.4 0-.5 0-.5 0-.5 0-.4 0-.5 0-.5 0-.5 0-.4 0-.5 0-.5 0-.5 0-.5 0-.4 0-.5 0-.5 0-.5 0-.4 0-.5 0-.5 0-.5 0-.4 0-.5 0-.5 0-.5 0-.4 0-.5 0-.5 0-.5 0-.4 0-.5 0-.5 0-.5 0-.5 0-.4 0-.5 0-.5 0-.5 0-.4 0-.5 0-.5 0-.5 0-.4 0-.5 0-.5 0-.5 0-.4 0-.5 0-.5 0-.5 0-.5 0-.4 0-.5 0-.5 0-.5 0-.4 0-.5 0-.5 0-.5 0-.4 0-.5 0-.5 0-.5 0-.4 0-.5 0-.5 0-.5 0-.4 0-.5 0-.5 0-.5 0-.5 0-.4 0-.5 0-.5 0-.5 0-.4 0-.5 0-.5 0-.5 0-.4 0-.5 0-.5 0-.5 0-.4 0-.5 0-.5 0-.5 0-.4 0-.5 0-.5 0-.5 0-.5 0-.4 0-.5 0-.5 0-.5 0-.4 0-.5 0-.5 0-.5 0-.4 0-.5 0-.5 0-.5 0-.4 0-.5 0-.5 0-.5 0-.5 0-.4 0-.5 0-.5 0-.5 0-.4 0-.5 0-.5 0-.5 0-.4 0-.5 0-.5 0-.5 0-.4 0-.5 0-.5 0-.5 0-.4 0-.5 0-.5 0-.5 0-.5 0-.4 0-.5 0-.5 0-.5 0-.4 0-.5 0-.5 0-.5 0-.4 0-.5 0-.5 0-.5 0-.4 0-.5 0-.5 0-.5 0-.5 0-.4 0-.5 0-.5 0-.5 0-.4 0-.5 0-.5 0-.5 0-.4 0-.5 0-.5 0-.5 0-.4 0-.5 0-.5 0-.5 0-.4 0-.5 0-.5 0-.5 0-.5 0-.4 0-.5 0-.5 0-.5 0-.4 0-.5 0-.5 0-.5 0-.4 0-.5 0-.5 0-.5 0-.4 0-.5 0-.5 0-.5 0-.5 0-.4 0-.5 0-.5 0-.5 0-.4 0-.5 0-.5 0-.5 0-.4 0-.5 0-.5 0-.5 0-.4 0-.5 0-.5 0-.5 0-.4 0-.5 0-.5 0-.5 0-.5 0-.4 0-.5 0-.5 0-.5 0-.4 0-.5 0-.5 0-.5 0-.4 0-.5 0-.5 0-.5 0-.4 0-.5 0-.5 0-.5 0-.5 0-.4 0-.5 0-.5 0-.5 0-.4 0-.5 0-.5 0-.5 0-.4 0-.5 0-.5 0-.5 0-.4 0-.5 0-.5 0-.5 0-.4 0-.5 0-.5 0Z" fill="rgba(18,184,134,0.36)"/><path d="M620.5 423.1l.5 3.3 .5-9.7 .4 7.5 .5-2.5 .5-5.3 .5 7.9 .4 4.7 .5-1.8 .5-2.6 .5-7.6 .4 4.4 .5 1.5 .5-4 .5-2.4 .4 8.1 .5-7.5 .5 2.4 .5 2.5 .4 9.4 .5-8.8 .5-3.7 .5 5.5 .5-7.7 .4 6.6 .5 2.9 .5-6.7 .5-.3 .4-1.3 .5 3.7 .5-4.5 .5 7.3 .4-1.9 .5 5.1 .5-1.6 .5-4.1 .4 2.4 .5-.7 .5-.4 .5-1.4 .5-1.9 .4 0 .5-1.1 .5 3.1 .5 2.5 .4 4.6 .5-5.2 .5 2.6 .5 4 .4-14 .5 12.7 .5-8.9 .5-.5 .4 3.6 .5-11.1 .5 8.8 .5 2.8 .4-8.9 .5 10.2 .5 1.9 .5-1.8 .5-1.9 .4-2.3 .5 .5 .5 6.1 .5-6.1 .4-6.5 .5 10.2 .5-1.2 .5-2.7 .4-1.5 .5 5.9 .5 .6 .5-.6 .4-8 .5 1 .5 11.1 .5-.2 .5-3.7 .4 .9 .5-6.5 .5 1.8 .5-5.5 .4 4.6 .5 2.4 .5-3.8 .5 6.3 .4 1.4 .5-4.5 .5-3.3 .5 10.5 .4-8.9 .5-1.3 .5 4.8 .5-3.3 .4 1.9 .5-1.4 .5-3.6 .5 5.9 .5-7 .4 1.1 .5 .6 .5 11 .5-.2 .4-9.1 .5 4.5 .5-.1 .5 .5 .4 2.5 .5-3.7 .5 1 .5-.2 .4-5.1 .5 6.2 .5-7.2 .5 11.9 .5-16.7 .4 13.6 .5-7.8 .5-1.6 .5 3.2 .4-2.9 .5 3.3 .5 7.1 .5-7.1 .4-3 .5 5.4 .5 4 .5-3.6 .4-2.7 .5 .3 .5-2.3 .5 2 .4-1.2 .5 9.2 .5-15.8 .5 7.4 .5-2.4 .4 4.4 .5-1.2 .5-.4 .5-5.5 .4 .5 .5 2.8 .5-5.5 .5 9.2 .4-4 .5 4.1 .5-6.3 .5 4.6 .4-2.6 .5-2.8 .5 14.1 .5-15.7 .5 6 .4 1.4 .5 4.8 .5-5.6 .5 7.1 .4-8 .5 .8 .5-6.7 .5 7.7 .4-4.6 .5 0 .5-3.6 .5 8.6 .4-3.8 .5 9.6 .5-1.3 .5-2.5 .4-1 .5 4.4 .5-2.8 .5-3.8 .5 4.3 .4-2.2 .5 2.5 .5-7.8 .5-1.7 .4 5.9 .5 .4 .5-6.8 .5 4.1 .4 4.4 .5 2.7 .5-3 .5-10 .4 10.1 .5-12.4 .5 10.9 .5 1 .4-6.2 .5 4.2 .5-2.6 .5 4.7 .5 1 .4-1 .5-3.7 .5 3.1 .5 4.6 .4-9.4 .5 1.9 .5 1.6 .5 1.3 .4 6.9 .5-12.3 .5 7.1 .5-3.3 .4-2.8 .5 0 .5 3.7 .5 .2 .5-1.8 .4-2.2 .5 .5 .5 4.1 .5-2.7 .4-.1 .5-1.6 .5 .9 .5-4.2 .4 4.1 .5-2 .5 4 .5 2.5 .4 1.8 .5-3.1 .5-2.9 .5-3.7 .4 5.1 .5 1.4 .5-.2 .5-5.8 .5 4.5 .4 2.2 .5-4.3 .5 7.1 .5-5.8 .4 1 .5 .4 .5 3.4 .5-7.1 .4-3 .5 11.3 .5-4.7 .5-2.9 .4-5.7 .5 9.8 .5 1.8 .5-2.7 .5-7.7 .4 7.2 .5-.2 .5-5.3 .5 15.3 .4-1 .5-10.6 .5 .8 .5 7.8 .4-6.1 .5 .5 .5-1.3 .5 2.6 .4-1.8 .5 2.8 .5-3.2 .5 2.2 .4-6.4 .5 3.1 .5 8.3 .5-8.2 .5-3.6 .4 3.3 .5-3.4 .5 3.7 .5-3.4 .4 6.3 .5-5.9 .5 7.5 .5-8.9 .4 10.4 .5 2.1 .5-8.6 .5 2 .4-.5 .5-1.6 .5 1.2 .5 3.2 .5-4.6 .4 .4 .5 .6 .5-5.1 .5 10.3 .4-4.5 .5-2.5 .5 2.9 .5 2.3 .4-2.1 .5-6.1 .5 5 .5-2.7 .4 6.2 .5-3.8 .5 4.7 .5-.1 .4-4 .5-.2 .5-5.5 .5 12.1 .5-7.5 .4-4.1 .5 .6 .5 5.7 .5 1.8 .4-.8 .5-3.2 .5 1.3 .5-1.2 .4-.9 .5 6.1 .5-.5 .5 .4 .4 .3 .5-4.5 .5-1.4 .5-9 .5 7.3 .4 2.8 .5-4.6 .5 8.7 .5-3.6 .4-3 .5 .1 .5 .6 .5 2.3 .4 2.8 .5-3.4 .5 2.5 .5-4.6 .4 3.6 .5-3.1 .5 7.6 .5-8.8 .4 5.9 .5 2.3 .5 .1 .5-2.7 .5-5.6 .4 1.7 .5 6.2 .5-4.2 .5 .3 .4 5.7 .5-2.7 .5 3.1 .5-4.3 .4 6 .5-6.6 .5 .9 .5-.5 .4 .3 .5-6.2 .5 5.4 .5-1.5 .4-2 .5-1.4 .5 1.1 .5 4 .5 2.2 .4-.4 .5-1.9 .5-1.1 .5 .8 .4-5 .5 4.3 .5-6.9 .5 1.7 .4 5.4 .5-4.2 .5 12.3 .5-14.9 .4 3.8 .5 .9 .5 8.1 .5-14.9 .5 9.9 .4-.7 .5-4.8 .5 3.9 .5 1.7 .4-4.9 .5 6.3 .5-5.9 .5 4.4 .4-4.6 .5 8.7 .5-9.3 .5 2.5 .4-6.5 .5 9.5 .5-8.6 .5 3.9 .4-.6 .5 5 .5-3.8 .5-1.1 .5 6.1 .4 1.8 .5-2.5 .5-7.6 .5 4.1 .4-3.3 .5 2.6 .5 .9 .5 .3 .4 2.3 .5-6 .5 3.4 .5-.5 .4 5.7 .5-5.7 .5 4.3 .5-.9 .5-5.4 .4 7.4 .5-3.5 .5-2.5 .5-1.8 .4 6.5 .5-3.3 .5-.7 .5 5.1 .4 2.7 .5-1 .5-9.4 .5 1.5 .4 4.9 .5-2.5 .5 0 .5-.3 .4 .2 .5-7.9 .5 10.6 .5-2.9 .5 3.7 .4-.8 .5 1.1 .5-2.2 .5 .5 .4-3 .5-.2 .5 3.8 .5-10 .4 11 .5-5.5 .5-6.6 .5 9.7 .4-7.2 .5 0 .5 3.4 .5 8.4 .5-12.6 .4 4.5 .5 3.4 .5-6 .5 7.7 .4-5.8 .5 5.9 .5-3.7 .5 5.6 .4-2.9 .5 1.6 .5-1.7 .5-2.8 .4 1.3 .5-1.5 .5-3.7 .5 6.3 .4 6 .5-5.6 .5-1.5 .5-5.2 .5 .9 .4 1.8 .5 3.6 .5-2.7 .5 7.7 .4-11 .5 3.5 .5 .4 .5 2.3 .4-2.7 .5 2.3 .5-5 .5 6.9 .4-6.9 .5 2.1 .5-5.2 .5 8 .5 .4 .4-1.9 .5 .4 .5 .5 .5 3.2 .4 .2 .5-2.6 .5-1.2 .5 3 .4 .2 .5-2.3 .5-3.5 .5 3.9 .4-2.7 .5-.9 .5 .8 .5 3.9 .4-.4 .5 4.6 .5-5.1 0 30.2-.5 .6-.5-1.6-.4 1.5-.5-4.1-.5 4.3-.5 2.3-.4-2.8-.5-1.1-.5 1.1-.5-2.1-.4 3.8-.5-4.7-.5 4.3-.5 .9-.4-2.8-.5-2.9-.5 2.5-.5 1.6-.4-.5-.5-.6-.5 .6-.5-1-.5-1-.4 3.8-.5-1.6-.5-.8-.5-.3-.4 1.3-.5-2.1-.5 3.1-.5-1.1-.4 2.9-.5-2.2-.5 2.1-.5-2.6-.4-.7-.5 1.5-.5-1.7-.5-2.6-.5 4.9-.4-2.1-.5-2-.5 1.6-.5 .8-.4-1.4-.5-.2-.5-1-.5 1.7-.4 .3-.5-1.2-.5-1.5-.5-2.3-.4 3.1-.5-1.2-.5 1.9-.5 2.4-.4-1.8-.5-1-.5 3.7-.5-2-.5-.6-.4-4.3-.5 1-.5 4.7-.5 .6-.4-5.4-.5 4.7-.5-2.3-.5 .8-.4 1-.5-1.3-.5 1-.5 .7-.4-2.9-.5 .7-.5 3.9-.5-3.2-.5-1.9-.4 2.9-.5-.4-.5-1.5-.5 3-.4-1.9-.5 1-.5-2.5-.5 2.9-.4-2.3-.5-.3-.5 6.8-.5-3.2-.4-3.2-.5-1.7-.5 1.5-.5 3-.4-3.5-.5 2.7-.5-.1-.5 1-.5 1-.4 .2-.5-1.7-.5-.5-.5 1.6-.4-7-.5 5.8-.5 .2-.5-.6-.4-.3-.5-2.8-.5 5.2-.5-.4-.4-2.1-.5-1.6-.5 1.4-.5-1.2-.5 1.6-.4-1.8-.5 1.2-.5-.9-.5-.2-.4-.3-.5 2.1-.5 0-.5 .7-.4 1.3-.5-1.8-.5 .6-.5-2.2-.4 .3-.5-.9-.5 2-.5 .9-.4-.2-.5-1.4-.5 3.1-.5-3.9-.5 1.4-.4 .3-.5 3.3-.5 1.1-.5-4.5-.4 .1-.5 3.2-.5 0-.5-2.6-.4-1.7-.5 1.1-.5-2.5-.5 .2-.4-4.7-.5 7-.5-2.3-.5 1.9-.5 1.4-.4-2.3-.5 2.1-.5-3.5-.5 2.1-.4 2.7-.5-3.3-.5-1.9-.5 .6-.4 1.3-.5 5.1-.5-4.3-.5-1-.4 .6-.5 3.5-.5-5.5-.5 2.5-.4-4.4-.5 5.2-.5 .6-.5 2.6-.5-5.4-.4 3.4-.5-3.7-.5 .7-.5 2.1-.4-1.3-.5 .4-.5-1.3-.5 1.4-.4-1.6-.5-.2-.5 3.5-.5-3.6-.4 2.5-.5 2.2-.5-1.7-.5-1.8-.4 .6-.5 .3-.5 .9-.5-.3-.5-1.4-.4 3.3-.5-3.5-.5-1.7-.5 4-.4-1-.5-1.6-.5 2.2-.5-2-.4 1.8-.5-3.9-.5 2.5-.5-3.8-.4 5.8-.5-1-.5-3.3-.5 2.1-.5 1.2-.4-1.2-.5-1.6-.5 4.5-.5-3.8-.4 2.5-.5-3.1-.5-1.6-.5 3.4-.4 .3-.5-.3-.5 3.2-.5-1.9-.4-.8-.5-.3-.5-.1-.5-.9-.4-1.5-.5 .1-.5 3.8-.5 1.6-.5-4.1-.4 0-.5 .6-.5-.8-.5-.8-.4 .1-.5 3.3-.5 2.2-.5-3.7-.4 .8-.5-1.9-.5-.3-.5 2-.4-.1-.5 2.6-.5-1.8-.5-2-.5 2.4-.4-1.9-.5 .4-.5-2.9-.5 3.1-.4-2.8-.5 3.4-.5-.4-.5-1-.4 1.5-.5 1.4-.5-1.4-.5-1.2-.4-.9-.5 1.3-.5-1.8-.5-1.9-.4 5.4-.5-4.3-.5-.7-.5 4.4-.5-.1-.4 2.3-.5-2.6-.5 .2-.5-5-.4 4-.5-.3-.5-2.7-.5 2.1-.4 .9-.5-3.1-.5 1.1-.5 4.2-.4-6.1-.5 1.7-.5 2.1-.5 .3-.5-1.9-.4 2.5-.5-1.6-.5 2.8-.5-3-.4 1.7-.5-.9-.5-1.5-.5 1.5-.4-1.5-.5 3.3-.5-4.9-.5 4.1-.4-1.6-.5-1.3-.5 3.2-.5 1.4-.4-3.7-.5 2.4-.5-.7-.5 1.7-.5-5.2-.4 .8-.5-.3-.5-1.4-.5 5.6-.4-2.6-.5-2-.5 .7-.5 .2-.4 .4-.5 1.5-.5-.3-.5-1.3-.4-1.7-.5 4.1-.5-.5-.5-.9-.5 1.2-.4-1.5-.5 .6-.5 2-.5-2.4-.4 2.1-.5-2.5-.5-1.9-.5-2-.4 5.1-.5 .3-.5 3.1-.5-3.1-.4-1.2-.5 1.4-.5 1.4-.5 .2-.4-5.2-.5 3.5-.5-1.4-.5-1.6-.5 3.6-.4-4.4-.5 1.9-.5 1.1-.5-.7-.4 3.7-.5-.3-.5 .7-.5-3.6-.4 .1-.5 .1-.5 .5-.5-.5-.4-2.1-.5 1.8-.5 .3-.5 1-.4-.5-.5-1.4-.5-.7-.5 1.8-.5 .6-.4 2.9-.5-3.5-.5-.1-.5-1.3-.4-.3-.5 .4-.5 3.3-.5-4-.4 1.9-.5-.3-.5-2.2-.5 2.4-.4-.1-.5-3.8-.5 4.9-.5-.9-.5-.5-.4 .5-.5 .7-.5-1.3-.5 2.1-.4-4.3-.5 2-.5 3.2-.5 .1-.4-3.1-.5-2.3-.5 2.6-.5 2.2-.4-4.1-.5 .5-.5 4-.5-3.3-.4 1-.5-1.2-.5-.2-.5 3.1-.5-3.5-.4 1.2-.5-.9-.5-2.2-.5-.6-.4 3.7-.5-1.7-.5 3.5-.5-.3-.4-4.4-.5 6.5-.5-3.1-.5-.6-.4-1-.5 1.6-.5-3.4-.5 4-.5-3.8-.4 2-.5 .3-.5-.1-.5 1.3-.4-1.3-.5 1.4-.5 .1-.5 .1-.4 1-.5-4-.5 3.4-.5 0-.4-.7-.5 .7-.5 1.5-.5-4.6-.4 .8-.5 0-.5 .4-.5 1.2-.5 3.4-.4-5.8-.5 5.8-.5-3.1-.5 .9-.4-.8-.5-1.3-.5 1.5-.5-.2-.4 .1-.5 1.1-.5-1.2-.5-1.1-.4 2.2-.5 .8-.5-4.6-.5-.2-.5 7.7-.4-2.9-.5-2.1-.5 2.1-.5-2.4-.4-2.1-.5 3.8-.5-1.1-.5 .3-.4-.9-.5-.6-.5-.8-.5 1.3-.4 1.5-.5-2.9-.5 .7-.5 1.4-.4-1.2-.5 2.8-.5-3.7-.5-.5-.5-1.2-.4 3.7-.5-1.5-.5 .3-.5-4.2-.4 4.4-.5-1.8-.5-.6-.5 2.3-.4 1.1-.5-4-.5 4-.5-2.3-.4 3.4-.5-2.3-.5 2-.5 .1-.5-.6-.4-1.8-.5 .4-.5 .6-.5 0-.4 .2-.5 .1-.5-2.7-.5 1.1-.4 3.4-.5-.6-.5 2.7-.5-.7-.4-3-.5 1.8-.5-4.6-.5 .5-.4 .2-.5-1.5-.5 1.4Z" fill="rgba(92,200,194,0.36)"/><path d="M620.5 395.6l.5-7.1 .5 11.1 .4-1.7 .5 6.1 .5-7.8 .5 3.7 .4 4.7 .5-3.3 .5-10.7 .5 2.7 .4 2 .5-2.7 .5 10.1 .5-2.4 .4 1.8 .5-1.4 .5-1.5 .5-3.8 .4-2.3 .5 0 .5-6.1 .5 12.7 .5-2.2 .4-1.9 .5 5.2 .5-2.3 .5-3.1 .4 5.2 .5-5.2 .5-2.7 .5 9.3 .4 4.5 .5-9.6 .5 4.7 .5-4.6 .4 1.6 .5-2.5 .5-3.1 .5 1.8 .5 4.6 .4 2.9 .5 6.5 .5-1.2 .5-6.2 .4-3.9 .5 2 .5-.1 .5 2.4 .4 .5 .5 1 .5-8.6 .5 11.9 .4-10.8 .5 6.1 .5-6.1 .5 1.6 .4-2.4 .5-3.4 .5 9.1 .5 1.7 .5-1.7 .4 1.2 .5-5.2 .5 3.5 .5-2.1 .4-1.5 .5 4 .5-5.9 .5 12 .4-8 .5-.4 .5 4.7 .5-1.1 .4-7.2 .5 3.6 .5 5 .5-2.7 .5-9.7 .4 6.7 .5-8.2 .5-.6 .5 7.1 .4-1.4 .5 5.8 .5-.9 .5 1.2 .4-4.1 .5 6.7 .5-4.9 .5-.9 .4-2.1 .5 10.4 .5-1.4 .5-3.7 .4-3.6 .5-1.3 .5 .1 .5-6.2 .5 5.3 .4 .7 .5 5.4 .5-5.9 .5-.5 .4-.9 .5 2.6 .5-3.4 .5-4.1 .4 9.1 .5 6 .5-10.5 .5 1.1 .4 4.7 .5 .2 .5-11.9 .5 12.2 .5 2.4 .4-2.7 .5-5 .5 3.6 .5-1 .4-2.1 .5 2 .5-2.2 .5 1.7 .4 5.8 .5-4.4 .5 4.6 .5-7.4 .4 7 .5-2.1 .5 5.8 .5-5.6 .4 3.4 .5-11.4 .5 6.4 .5-3.2 .5 8.6 .4-1.3 .5-4.6 .5 6.1 .5-10.4 .4 5.6 .5-2.3 .5-.8 .5 2.2 .4-4.8 .5 5.9 .5-3.3 .5-3.2 .4 3.3 .5 .1 .5 2.1 .5-1.6 .5-2.5 .4 3.8 .5 6.8 .5-6.8 .5 .7 .4-2.1 .5 1.9 .5-6.5 .5 9.7 .4-1.1 .5-5.9 .5 5.9 .5-5.6 .4 2.1 .5 6.8 .5-10.1 .5-2.1 .4 4.7 .5 5.6 .5-8.1 .5 7.2 .5-3.5 .4-3.3 .5 4.4 .5 4.1 .5-7.2 .4-.3 .5 3.2 .5 .5 .5-5.3 .4 2.7 .5 2.7 .5 1.1 .5-2.1 .4 .1 .5 1.8 .5 5.5 .5-4.6 .4 1 .5-3.3 .5-3.5 .5 0 .5 1.5 .4 2 .5 1.1 .5-3 .5 2.6 .4-1.2 .5 .9 .5-3.3 .5 .3 .4-7 .5 5.2 .5 5.3 .5-4.5 .4 5.2 .5-6.3 .5 1.8 .5-8.7 .5 14.3 .4-3.6 .5 .5 .5-.8 .5-2.4 .4 6.3 .5-1.4 .5-4.1 .5-3.5 .4 7.8 .5 1.7 .5-10.3 .5 1.2 .4-.9 .5 8.5 .5-2.4 .5-.3 .4-.6 .5 2.6 .5-.4 .5-4.9 .5 5.7 .4-1.3 .5-.1 .5-.4 .5-1.6 .4 2.1 .5 .2 .5-7.2 .5 3.2 .4 2.4 .5-6.3 .5 5.8 .5-2 .4 1 .5 2.7 .5-.7 .5-2.3 .5 7 .4-3.9 .5-3.3 .5-.8 .5 0 .4-7.4 .5 6 .5 2.5 .5 1 .4 .2 .5-1.2 .5 3.1 .5-6.8 .4 10.2 .5-6.4 .5 .5 .5 5.9 .4-6.6 .5 .5 .5 4.5 .5-11.5 .5 5.4 .4 3.8 .5 .5 .5 .7 .5-4.6 .4 .6 .5 6.4 .5-1.3 .5-1.1 .4-1 .5 1.5 .5 1.5 .5-4.7 .4-.9 .5 2.4 .5 7.7 .5-7.9 .5-2.1 .4 2.1 .5-.7 .5 1.8 .5 6.4 .4 3.9 .5-12.4 .5 3.8 .5-4 .4 1.4 .5-.9 .5-6.2 .5 9 .4-5 .5 4 .5-3.6 .5-1 .4 0 .5 1.9 .5 5.5 .5-5.7 .5-2.5 .4 .2 .5-5.4 .5 6.7 .5 6.6 .4-2.9 .5-2 .5-4.2 .5 8.1 .4-7.4 .5 .4 .5 6.2 .5-5.8 .4 4.6 .5-2.7 .5 1.4 .5-2.4 .5 5.3 .4-6.8 .5 10.5 .5-6 .5 .3 .4-7.6 .5 3.9 .5 4.4 .5 2 .4-3.4 .5 2.3 .5-10 .5 19.1 .4-10.5 .5 9 .5-14 .5 7 .4-9.9 .5 6.7 .5-5.9 .5 3 .5-2.7 .4 4 .5 12.9 .5-8.4 .5 3.8 .4-9.3 .5 2.7 .5 1.9 .5-2.9 .4 1.3 .5 2.2 .5-9.3 .5 5 .4 1.3 .5 5.2 .5-3.2 .5-2.5 .4 .6 .5 1.1 .5-1.1 .5 3.9 .5-5 .4 6.2 .5-3.4 .5-.8 .5-4.9 .4 1.1 .5 2.1 .5 4 .5-1.6 .4-4.1 .5-2 .5 10.6 .5-3.2 .4-1.7 .5-2.1 .5 1.2 .5-3.4 .5 7.9 .4-10.7 .5 10.3 .5-4.5 .5-1 .4-1.2 .5 .5 .5-.9 .5-1 .4 6.2 .5-3.4 .5-4.3 .5 8.2 .4 2.8 .5-2.2 .5-9 .5 0 .4 6.8 .5-1.5 .5-.2 .5-2.1 .5 11.1 .4-5.3 .5-.4 .5-2.8 .5 .1 .4 .9 .5-2.5 .5 11.7 .5-21.4 .4 8.1 .5 .1 .5 6.5 .5-3.9 .4-6.7 .5 .6 .5 7.6 .5 5.1 .5-5.9 .4 .8 .5-4.3 .5 8.1 .5-5.4 .4-1.9 .5 3.7 .5-4.9 .5 7.8 .4-.6 .5-2.5 .5-4.7 .5 3.9 .4 .4 .5-4.9 .5 2.7 .5 3 .4-2 .5 1.3 .5-.9 .5 1.4 .5 3.6 .4-1.5 .5-.2 .5-3.1 .5-1.8 .4 5.5 .5-2.4 .5-2 .5-3.1 .4 3.8 .5-6.1 .5 7.1 .5-2.7 .4 3.4 .5 2.1 .5-4.7 .5-1.2 .5 .3 .4 .6 .5 2.7 .5 2.5 .5-1 .4-2.7 .5-1.7 .5 16.2 .5-15.3 .4-1.4 .5-1.2 .5 2.6 .5-1 .4 4 .5-.9 .5-2.9 .5 5.8 .4-1.3 .5-4.8 .5 6.1 .5-5 .5 5.3 .4-6.5 .5 1.5 .5 3.1 .5 .6 .4-1.3 .5 6.7 .5-7.1 .5-2.1 .4-4.5 .5 6.5 .5-2.2 .5-6.1 .4-.4 .5 7.5 .5-5.7 .5-.6 .5 3.3 .4 5.6 .5-1 .5-4.7 .5-6.9 .4 10.2 .5-6.5 .5-.9 .5 12.1 .4-3.1 .5-7.2 .5 1.5 .5 .8 .4 2.3 .5-3.1 .5 4.5 .5-11.4 .4 13.3 .5 2.4 .5-7.6 0 28.5-.5 5.1-.5-4.6-.4 .4-.5-3.9-.5-.8-.5 .9-.4 2.7-.5-3.9-.5 3.5-.5 2.3-.4-.2-.5-3-.5 1.2-.5 2.6-.4-.2-.5-3.2-.5-.5-.5-.4-.4 1.9-.5-.4-.5-8-.5 5.2-.5-2.1-.4 6.9-.5-6.9-.5 5-.5-2.3-.4 2.7-.5-2.3-.5-.4-.5-3.5-.4 11-.5-7.7-.5 2.7-.5-3.6-.4-1.8-.5-.9-.5 5.2-.5 1.5-.5 5.6-.4-6-.5-6.3-.5 3.7-.5 1.5-.4-1.3-.5 2.8-.5 1.7-.5-1.6-.4 2.9-.5-5.6-.5 3.7-.5-5.9-.4 5.8-.5-7.7-.5 6-.5-3.4-.4-4.5-.5 12.6-.5-8.4-.5-3.4-.5 0-.4 7.2-.5-9.7-.5 6.6-.5 5.5-.4-11-.5 10-.5-3.8-.5 .2-.4 3-.5-.5-.5 2.2-.5-1.1-.4 .8-.5-3.7-.5 2.9-.5-10.6-.5 7.9-.4-.2-.5 .3-.5 0-.5 2.5-.4-4.9-.5-1.5-.5 9.4-.5 1-.4-2.7-.5-5.1-.5 .7-.5 3.3-.4-6.5-.5 1.8-.5 2.5-.5 3.5-.4-7.4-.5 5.4-.5 .9-.5-4.3-.5 5.7-.4-5.7-.5 .5-.5-3.4-.5 6-.4-2.3-.5-.3-.5-.9-.5-2.6-.4 3.3-.5-4.1-.5 7.6-.5 2.5-.4-1.8-.5-6.1-.5 1.1-.5 3.8-.5-5-.4 .6-.5-3.9-.5 8.6-.5-9.5-.4 6.5-.5-2.5-.5 9.3-.5-8.7-.4 4.6-.5-4.4-.5 5.9-.5-6.3-.4 4.9-.5-1.7-.5-3.9-.5 4.8-.4 .7-.5-9.9-.5 14.9-.5-8.1-.5-.9-.4-3.8-.5 14.9-.5-12.3-.5 4.2-.4-5.4-.5-1.7-.5 6.9-.5-4.3-.4 5-.5-.8-.5 1.1-.5 1.9-.4 .4-.5-2.2-.5-4-.5-1.1-.5 1.4-.4 2-.5 1.5-.5-5.4-.5 6.2-.4-.3-.5 .5-.5-.9-.5 6.6-.4-6-.5 4.3-.5-3.1-.5 2.7-.4-5.7-.5-.3-.5 4.2-.5-6.2-.4-1.7-.5 5.6-.5 2.7-.5-.1-.5-2.3-.4-5.9-.5 8.8-.5-7.6-.5 3.1-.4-3.6-.5 4.6-.5-2.5-.5 3.4-.4-2.8-.5-2.3-.5-.6-.5-.1-.4 3-.5 3.6-.5-8.7-.5 4.6-.4-2.8-.5-7.3-.5 9-.5 1.4-.5 4.5-.4-.3-.5-.4-.5 .5-.5-6.1-.4 .9-.5 1.2-.5-1.3-.5 3.2-.4 .8-.5-1.8-.5-5.7-.5-.6-.4 4.1-.5 7.5-.5-12.1-.5 5.5-.5 .2-.4 4-.5 .1-.5-4.7-.5 3.8-.4-6.2-.5 2.7-.5-5-.5 6.1-.4 2.1-.5-2.3-.5-2.9-.5 2.5-.4 4.5-.5-10.3-.5 5.1-.5-.6-.4-.4-.5 4.6-.5-3.2-.5-1.2-.5 1.6-.4 .5-.5-2-.5 8.6-.5-2.1-.4-10.4-.5 8.9-.5-7.5-.5 5.9-.4-6.3-.5 3.4-.5-3.7-.5 3.4-.4-3.3-.5 3.6-.5 8.2-.5-8.3-.5-3.1-.4 6.4-.5-2.2-.5 3.2-.5-2.8-.4 1.8-.5-2.6-.5 1.3-.5-.5-.4 6.1-.5-7.8-.5-.8-.5 10.6-.4 1-.5-15.3-.5 5.3-.5 .2-.4-7.2-.5 7.7-.5 2.7-.5-1.8-.5-9.8-.4 5.7-.5 2.9-.5 4.7-.5-11.3-.4 3-.5 7.1-.5-3.4-.5-.4-.4-1-.5 5.8-.5-7.1-.5 4.3-.4-2.2-.5-4.5-.5 5.8-.5 .2-.5-1.4-.4-5.1-.5 3.7-.5 2.9-.5 3.1-.4-1.8-.5-2.5-.5-4-.5 2-.4-4.1-.5 4.2-.5-.9-.5 1.6-.4 .1-.5 2.7-.5-4.1-.5-.5-.4 2.2-.5 1.8-.5-.2-.5-3.7-.5 0-.4 2.8-.5 3.3-.5-7.1-.5 12.3-.4-6.9-.5-1.3-.5-1.6-.5-1.9-.4 9.4-.5-4.6-.5-3.1-.5 3.7-.4 1-.5-1-.5-4.7-.5 2.6-.5-4.2-.4 6.2-.5-1-.5-10.9-.5 12.4-.4-10.1-.5 10-.5 3-.5-2.7-.4-4.4-.5-4.1-.5 6.8-.5-.4-.4-5.9-.5 1.7-.5 7.8-.5-2.5-.4 2.2-.5-4.3-.5 3.8-.5 2.8-.5-4.4-.4 1-.5 2.5-.5 1.3-.5-9.6-.4 3.8-.5-8.6-.5 3.6-.5 0-.4 4.6-.5-7.7-.5 6.7-.5-.8-.4 8-.5-7.1-.5 5.6-.5-4.8-.4-1.4-.5-6-.5 15.7-.5-14.1-.5 2.8-.4 2.6-.5-4.6-.5 6.3-.5-4.1-.4 4-.5-9.2-.5 5.5-.5-2.8-.4-.5-.5 5.5-.5 .4-.5 1.2-.4-4.4-.5 2.4-.5-7.4-.5 15.8-.5-9.2-.4 1.2-.5-2-.5 2.3-.5-.3-.4 2.7-.5 3.6-.5-4-.5-5.4-.4 3-.5 7.1-.5-7.1-.5-3.3-.4 2.9-.5-3.2-.5 1.6-.5 7.8-.4-13.6-.5 16.7-.5-11.9-.5 7.2-.5-6.2-.4 5.1-.5 .2-.5-1-.5 3.7-.4-2.5-.5-.5-.5 .1-.5-4.5-.4 9.1-.5 .2-.5-11-.5-.6-.4-1.1-.5 7-.5-5.9-.5 3.6-.5 1.4-.4-1.9-.5 3.3-.5-4.8-.5 1.3-.4 8.9-.5-10.5-.5 3.3-.5 4.5-.4-1.4-.5-6.3-.5 3.8-.5-2.4-.4-4.6-.5 5.5-.5-1.8-.5 6.5-.4-.9-.5 3.7-.5 .2-.5-11.1-.5-1-.4 8-.5 .6-.5-.6-.5-5.9-.4 1.5-.5 2.7-.5 1.2-.5-10.2-.4 6.5-.5 6.1-.5-6.1-.5-.5-.4 2.3-.5 1.9-.5 1.8-.5-1.9-.5-10.2-.4 8.9-.5-2.8-.5-8.8-.5 11.1-.4-3.6-.5 .5-.5 8.9-.5-12.7-.4 14-.5-4-.5-2.6-.5 5.2-.4-4.6-.5-2.5-.5-3.1-.5 1.1-.4 0-.5 1.9-.5 1.4-.5 .4-.5 .7-.4-2.4-.5 4.1-.5 1.6-.5-5.1-.4 1.9-.5-7.3-.5 4.5-.5-3.7-.4 1.3-.5 .3-.5 6.7-.5-2.9-.4-6.6-.5 7.7-.5-5.5-.5 3.7-.5 8.8-.4-9.4-.5-2.5-.5-2.4-.5 7.5-.4-8.1-.5 2.4-.5 4-.5-1.5-.4-4.4-.5 7.6-.5 2.6-.5 1.8-.4-4.7-.5-7.9-.5 5.3-.5 2.5-.4-7.5-.5 9.7-.5-3.3Z" fill="rgba(22,165,232,0.36)"/><path d="M620.5 452.5l.5-1.4 .5 1.5 .4-.2 .5-.5 .5 4.6 .5-1.8 .4 3 .5 .7 .5-2.7 .5 .6 .4-3.4 .5-1.1 .5 2.7 .5-.1 .4-.2 .5 0 .5-.6 .5-.4 .4 1.8 .5 .6 .5-.1 .5-2 .5 2.3 .4-3.4 .5 2.3 .5-4 .5 4 .4-1.1 .5-2.3 .5 .6 .5 1.8 .4-4.4 .5 4.2 .5-.3 .5 1.5 .4-3.7 .5 1.2 .5 .5 .5 3.7 .5-2.8 .4 1.2 .5-1.4 .5-.7 .5 2.9 .4-1.5 .5-1.3 .5 .8 .5 .6 .4 .9 .5-.3 .5 1.1 .5-3.8 .4 2.1 .5 2.4 .5-2.1 .5 2.1 .4 2.9 .5-7.7 .5 .2 .5 4.6 .5-.8 .4-2.2 .5 1.1 .5 1.2 .5-1.1 .4-.1 .5 .2 .5-1.5 .5 1.3 .4 .8 .5-.9 .5 3.1 .5-5.8 .4 5.8 .5-3.4 .5-1.2 .5-.4 .5 0 .4-.8 .5 4.6 .5-1.5 .5-.7 .4 .7 .5 0 .5-3.4 .5 4 .4-1 .5-.1 .5-.1 .5-1.4 .4 1.3 .5-1.3 .5 .1 .5-.3 .4-2 .5 3.8 .5-4 .5 3.4 .5-1.6 .4 1 .5 .6 .5 3.1 .5-6.5 .4 4.4 .5 .3 .5-3.5 .5 1.7 .4-3.7 .5 .6 .5 2.2 .5 .9 .4-1.2 .5 3.5 .5-3.1 .5 .2 .5 1.2 .4-1 .5 3.3 .5-4 .5-.5 .4 4.1 .5-2.2 .5-2.6 .5 2.3 .4 3.1 .5-.1 .5-3.2 .5-2 .4 4.3 .5-2.1 .5 1.3 .5-.7 .4-.5 .5 .5 .5 .9 .5-4.9 .5 3.8 .4 .1 .5-2.4 .5 2.2 .5 .3 .4-1.9 .5 4 .5-3.3 .5-.4 .4 .3 .5 1.3 .5 .1 .5 3.5 .4-2.9 .5-.6 .5-1.8 .5 .7 .5 1.4 .4 .5 .5-1 .5-.3 .5-1.8 .4 2.1 .5 .5 .5-.5 .5-.1 .4-.1 .5 3.6 .5-.7 .5 .3 .4-3.7 .5 .7 .5-1.1 .5-1.9 .4 4.4 .5-3.6 .5 1.6 .5 1.4 .5-3.5 .4 5.2 .5-.2 .5-1.4 .5-1.4 .4 1.2 .5 3.1 .5-3.1 .5-.3 .4-5.1 .5 2 .5 1.9 .5 2.5 .4-2.1 .5 2.4 .5-2 .5-.6 .4 1.5 .5-1.2 .5 .9 .5 .5 .5-4.1 .4 1.7 .5 1.3 .5 .3 .5-1.5 .4-.4 .5-.2 .5-.7 .5 2 .4 2.6 .5-5.6 .5 1.4 .5 .3 .4-.8 .5 5.2 .5-1.7 .5 .7 .5-2.4 .4 3.7 .5-1.4 .5-3.2 .5 1.3 .4 1.6 .5-4.1 .5 4.9 .5-3.3 .4 1.5 .5-1.5 .5 1.5 .5 .9 .4-1.7 .5 3 .5-2.8 .5 1.6 .4-2.5 .5 1.9 .5-.3 .5-2.1 .5-1.7 .4 6.1 .5-4.2 .5-1.1 .5 3.1 .4-.9 .5-2.1 .5 2.7 .5 .3 .4-4 .5 5 .5-.2 .5 2.6 .4-2.3 .5 .1 .5-4.4 .5 .7 .5 4.3 .4-5.4 .5 1.9 .5 1.8 .5-1.3 .4 .9 .5 1.2 .5 1.4 .5-1.4 .4-1.5 .5 1 .5 .4 .5-3.4 .4 2.8 .5-3.1 .5 2.9 .5-.4 .4 1.9 .5-2.4 .5 2 .5 1.8 .5-2.6 .4 .1 .5-2 .5 .3 .5 1.9 .4-.8 .5 3.7 .5-2.2 .5-3.3 .4-.1 .5 .8 .5 .8 .5-.6 .4 0 .5 4.1 .5-1.6 .5-3.8 .5-.1 .4 1.5 .5 .9 .5 .1 .5 .3 .4 .8 .5 1.9 .5-3.2 .5 .3 .4-.3 .5-3.4 .5 1.6 .5 3.1 .4-2.5 .5 3.8 .5-4.5 .5 1.6 .4 1.2 .5-1.2 .5-2.1 .5 3.3 .5 1 .4-5.8 .5 3.8 .5-2.5 .5 3.9 .4-1.8 .5 2 .5-2.2 .5 1.6 .4 1 .5-4 .5 1.7 .5 3.5 .4-3.3 .5 1.4 .5 .3 .5-.9 .5-.3 .4-.6 .5 1.8 .5 1.7 .5-2.2 .4-2.5 .5 3.6 .5-3.5 .5 .2 .4 1.6 .5-1.4 .5 1.3 .5-.4 .4 1.3 .5-2.1 .5-.7 .5 3.7 .4-3.4 .5 5.4 .5-2.6 .5-.6 .5-5.2 .4 4.4 .5-2.5 .5 5.5 .5-3.5 .4-.6 .5 1 .5 4.3 .5-5.1 .4-1.3 .5-.6 .5 1.9 .5 3.3 .4-2.7 .5-2.1 .5 3.5 .5-2.1 .4 2.3 .5-1.4 .5-1.9 .5 2.3 .5-7 .4 4.7 .5-.2 .5 2.5 .5-1.1 .4 1.7 .5 2.6 .5 0 .5-3.2 .4-.1 .5 4.5 .5-1.1 .5-3.3 .4-.3 .5-1.4 .5 3.9 .5-3.1 .5 1.4 .4 .2 .5-.9 .5-2 .5 .9 .4-.3 .5 2.2 .5-.6 .5 1.8 .4-1.3 .5-.7 .5 0 .5-2.1 .4 .3 .5 .2 .5 .9 .5-1.2 .4 1.8 .5-1.6 .5 1.2 .5-1.4 .5 1.6 .4 2.1 .5 .4 .5-5.2 .5 2.8 .4 .3 .5 .6 .5-.2 .5-5.8 .4 7 .5-1.6 .5 .5 .5 1.7 .4-.2 .5-1 .5-1 .5 .1 .5-2.7 .4 3.5 .5-3 .5-1.5 .5 1.7 .4 3.2 .5 3.2 .5-6.8 .5 .3 .4 2.3 .5-2.9 .5 2.5 .5-1 .4 1.9 .5-3 .5 1.5 .5 .4 .4-2.9 .5 1.9 .5 3.2 .5-3.9 .5-.7 .4 2.9 .5-.7 .5-1 .5 1.3 .4-1 .5-.8 .5 2.3 .5-4.7 .4 5.4 .5-.6 .5-4.7 .5-1 .4 4.3 .5 .6 .5 2 .5-3.7 .5 1 .4 1.8 .5-2.4 .5-1.9 .5 1.2 .4-3.1 .5 2.3 .5 1.5 .5 1.2 .4-.3 .5-1.7 .5 1 .5 .2 .4 1.4 .5-.8 .5-1.6 .5 2 .4 2.1 .5-4.9 .5 2.6 .5 1.7 .5-1.5 .4 .7 .5 2.6 .5-2.1 .5 2.2 .4-2.9 .5 1.1 .5-3.1 .5 2.1 .4-1.3 .5 .3 .5 .8 .5 1.6 .4-3.8 .5 1 .5 1 .5-.6 .5 .6 .4 .5 .5-1.6 .5-2.5 .5 2.9 .4 2.8 .5-.9 .5-4.3 .5 4.7 .4-3.8 .5 2.1 .5-1.1 .5 1.1 .4 2.8 .5-2.3 .5-4.3 .5 4.1 .4-1.5 .5 1.6 .5-.6" stroke="#12b886" stroke-width="1.8" stroke-linejoin="round"/><path d="M620.5 423.1l.5 3.3 .5-9.7 .4 7.5 .5-2.5 .5-5.3 .5 7.9 .4 4.7 .5-1.8 .5-2.6 .5-7.6 .4 4.4 .5 1.5 .5-4 .5-2.4 .4 8.1 .5-7.5 .5 2.4 .5 2.5 .4 9.4 .5-8.8 .5-3.7 .5 5.5 .5-7.7 .4 6.6 .5 2.9 .5-6.7 .5-.3 .4-1.3 .5 3.7 .5-4.5 .5 7.3 .4-1.9 .5 5.1 .5-1.6 .5-4.1 .4 2.4 .5-.7 .5-.4 .5-1.4 .5-1.9 .4 0 .5-1.1 .5 3.1 .5 2.5 .4 4.6 .5-5.2 .5 2.6 .5 4 .4-14 .5 12.7 .5-8.9 .5-.5 .4 3.6 .5-11.1 .5 8.8 .5 2.8 .4-8.9 .5 10.2 .5 1.9 .5-1.8 .5-1.9 .4-2.3 .5 .5 .5 6.1 .5-6.1 .4-6.5 .5 10.2 .5-1.2 .5-2.7 .4-1.5 .5 5.9 .5 .6 .5-.6 .4-8 .5 1 .5 11.1 .5-.2 .5-3.7 .4 .9 .5-6.5 .5 1.8 .5-5.5 .4 4.6 .5 2.4 .5-3.8 .5 6.3 .4 1.4 .5-4.5 .5-3.3 .5 10.5 .4-8.9 .5-1.3 .5 4.8 .5-3.3 .4 1.9 .5-1.4 .5-3.6 .5 5.9 .5-7 .4 1.1 .5 .6 .5 11 .5-.2 .4-9.1 .5 4.5 .5-.1 .5 .5 .4 2.5 .5-3.7 .5 1 .5-.2 .4-5.1 .5 6.2 .5-7.2 .5 11.9 .5-16.7 .4 13.6 .5-7.8 .5-1.6 .5 3.2 .4-2.9 .5 3.3 .5 7.1 .5-7.1 .4-3 .5 5.4 .5 4 .5-3.6 .4-2.7 .5 .3 .5-2.3 .5 2 .4-1.2 .5 9.2 .5-15.8 .5 7.4 .5-2.4 .4 4.4 .5-1.2 .5-.4 .5-5.5 .4 .5 .5 2.8 .5-5.5 .5 9.2 .4-4 .5 4.1 .5-6.3 .5 4.6 .4-2.6 .5-2.8 .5 14.1 .5-15.7 .5 6 .4 1.4 .5 4.8 .5-5.6 .5 7.1 .4-8 .5 .8 .5-6.7 .5 7.7 .4-4.6 .5 0 .5-3.6 .5 8.6 .4-3.8 .5 9.6 .5-1.3 .5-2.5 .4-1 .5 4.4 .5-2.8 .5-3.8 .5 4.3 .4-2.2 .5 2.5 .5-7.8 .5-1.7 .4 5.9 .5 .4 .5-6.8 .5 4.1 .4 4.4 .5 2.7 .5-3 .5-10 .4 10.1 .5-12.4 .5 10.9 .5 1 .4-6.2 .5 4.2 .5-2.6 .5 4.7 .5 1 .4-1 .5-3.7 .5 3.1 .5 4.6 .4-9.4 .5 1.9 .5 1.6 .5 1.3 .4 6.9 .5-12.3 .5 7.1 .5-3.3 .4-2.8 .5 0 .5 3.7 .5 .2 .5-1.8 .4-2.2 .5 .5 .5 4.1 .5-2.7 .4-.1 .5-1.6 .5 .9 .5-4.2 .4 4.1 .5-2 .5 4 .5 2.5 .4 1.8 .5-3.1 .5-2.9 .5-3.7 .4 5.1 .5 1.4 .5-.2 .5-5.8 .5 4.5 .4 2.2 .5-4.3 .5 7.1 .5-5.8 .4 1 .5 .4 .5 3.4 .5-7.1 .4-3 .5 11.3 .5-4.7 .5-2.9 .4-5.7 .5 9.8 .5 1.8 .5-2.7 .5-7.7 .4 7.2 .5-.2 .5-5.3 .5 15.3 .4-1 .5-10.6 .5 .8 .5 7.8 .4-6.1 .5 .5 .5-1.3 .5 2.6 .4-1.8 .5 2.8 .5-3.2 .5 2.2 .4-6.4 .5 3.1 .5 8.3 .5-8.2 .5-3.6 .4 3.3 .5-3.4 .5 3.7 .5-3.4 .4 6.3 .5-5.9 .5 7.5 .5-8.9 .4 10.4 .5 2.1 .5-8.6 .5 2 .4-.5 .5-1.6 .5 1.2 .5 3.2 .5-4.6 .4 .4 .5 .6 .5-5.1 .5 10.3 .4-4.5 .5-2.5 .5 2.9 .5 2.3 .4-2.1 .5-6.1 .5 5 .5-2.7 .4 6.2 .5-3.8 .5 4.7 .5-.1 .4-4 .5-.2 .5-5.5 .5 12.1 .5-7.5 .4-4.1 .5 .6 .5 5.7 .5 1.8 .4-.8 .5-3.2 .5 1.3 .5-1.2 .4-.9 .5 6.1 .5-.5 .5 .4 .4 .3 .5-4.5 .5-1.4 .5-9 .5 7.3 .4 2.8 .5-4.6 .5 8.7 .5-3.6 .4-3 .5 .1 .5 .6 .5 2.3 .4 2.8 .5-3.4 .5 2.5 .5-4.6 .4 3.6 .5-3.1 .5 7.6 .5-8.8 .4 5.9 .5 2.3 .5 .1 .5-2.7 .5-5.6 .4 1.7 .5 6.2 .5-4.2 .5 .3 .4 5.7 .5-2.7 .5 3.1 .5-4.3 .4 6 .5-6.6 .5 .9 .5-.5 .4 .3 .5-6.2 .5 5.4 .5-1.5 .4-2 .5-1.4 .5 1.1 .5 4 .5 2.2 .4-.4 .5-1.9 .5-1.1 .5 .8 .4-5 .5 4.3 .5-6.9 .5 1.7 .4 5.4 .5-4.2 .5 12.3 .5-14.9 .4 3.8 .5 .9 .5 8.1 .5-14.9 .5 9.9 .4-.7 .5-4.8 .5 3.9 .5 1.7 .4-4.9 .5 6.3 .5-5.9 .5 4.4 .4-4.6 .5 8.7 .5-9.3 .5 2.5 .4-6.5 .5 9.5 .5-8.6 .5 3.9 .4-.6 .5 5 .5-3.8 .5-1.1 .5 6.1 .4 1.8 .5-2.5 .5-7.6 .5 4.1 .4-3.3 .5 2.6 .5 .9 .5 .3 .4 2.3 .5-6 .5 3.4 .5-.5 .4 5.7 .5-5.7 .5 4.3 .5-.9 .5-5.4 .4 7.4 .5-3.5 .5-2.5 .5-1.8 .4 6.5 .5-3.3 .5-.7 .5 5.1 .4 2.7 .5-1 .5-9.4 .5 1.5 .4 4.9 .5-2.5 .5 0 .5-.3 .4 .2 .5-7.9 .5 10.6 .5-2.9 .5 3.7 .4-.8 .5 1.1 .5-2.2 .5 .5 .4-3 .5-.2 .5 3.8 .5-10 .4 11 .5-5.5 .5-6.6 .5 9.7 .4-7.2 .5 0 .5 3.4 .5 8.4 .5-12.6 .4 4.5 .5 3.4 .5-6 .5 7.7 .4-5.8 .5 5.9 .5-3.7 .5 5.6 .4-2.9 .5 1.6 .5-1.7 .5-2.8 .4 1.3 .5-1.5 .5-3.7 .5 6.3 .4 6 .5-5.6 .5-1.5 .5-5.2 .5 .9 .4 1.8 .5 3.6 .5-2.7 .5 7.7 .4-11 .5 3.5 .5 .4 .5 2.3 .4-2.7 .5 2.3 .5-5 .5 6.9 .4-6.9 .5 2.1 .5-5.2 .5 8 .5 .4 .4-1.9 .5 .4 .5 .5 .5 3.2 .4 .2 .5-2.6 .5-1.2 .5 3 .4 .2 .5-2.3 .5-3.5 .5 3.9 .4-2.7 .5-.9 .5 .8 .5 3.9 .4-.4 .5 4.6 .5-5.1" stroke="#5cc8c2" stroke-width="1.8" stroke-linejoin="round"/><path d="M620.5 395.6l.5-7.1 .5 11.1 .4-1.7 .5 6.1 .5-7.8 .5 3.7 .4 4.7 .5-3.3 .5-10.7 .5 2.7 .4 2 .5-2.7 .5 10.1 .5-2.4 .4 1.8 .5-1.4 .5-1.5 .5-3.8 .4-2.3 .5 0 .5-6.1 .5 12.7 .5-2.2 .4-1.9 .5 5.2 .5-2.3 .5-3.1 .4 5.2 .5-5.2 .5-2.7 .5 9.3 .4 4.5 .5-9.6 .5 4.7 .5-4.6 .4 1.6 .5-2.5 .5-3.1 .5 1.8 .5 4.6 .4 2.9 .5 6.5 .5-1.2 .5-6.2 .4-3.9 .5 2 .5-.1 .5 2.4 .4 .5 .5 1 .5-8.6 .5 11.9 .4-10.8 .5 6.1 .5-6.1 .5 1.6 .4-2.4 .5-3.4 .5 9.1 .5 1.7 .5-1.7 .4 1.2 .5-5.2 .5 3.5 .5-2.1 .4-1.5 .5 4 .5-5.9 .5 12 .4-8 .5-.4 .5 4.7 .5-1.1 .4-7.2 .5 3.6 .5 5 .5-2.7 .5-9.7 .4 6.7 .5-8.2 .5-.6 .5 7.1 .4-1.4 .5 5.8 .5-.9 .5 1.2 .4-4.1 .5 6.7 .5-4.9 .5-.9 .4-2.1 .5 10.4 .5-1.4 .5-3.7 .4-3.6 .5-1.3 .5 .1 .5-6.2 .5 5.3 .4 .7 .5 5.4 .5-5.9 .5-.5 .4-.9 .5 2.6 .5-3.4 .5-4.1 .4 9.1 .5 6 .5-10.5 .5 1.1 .4 4.7 .5 .2 .5-11.9 .5 12.2 .5 2.4 .4-2.7 .5-5 .5 3.6 .5-1 .4-2.1 .5 2 .5-2.2 .5 1.7 .4 5.8 .5-4.4 .5 4.6 .5-7.4 .4 7 .5-2.1 .5 5.8 .5-5.6 .4 3.4 .5-11.4 .5 6.4 .5-3.2 .5 8.6 .4-1.3 .5-4.6 .5 6.1 .5-10.4 .4 5.6 .5-2.3 .5-.8 .5 2.2 .4-4.8 .5 5.9 .5-3.3 .5-3.2 .4 3.3 .5 .1 .5 2.1 .5-1.6 .5-2.5 .4 3.8 .5 6.8 .5-6.8 .5 .7 .4-2.1 .5 1.9 .5-6.5 .5 9.7 .4-1.1 .5-5.9 .5 5.9 .5-5.6 .4 2.1 .5 6.8 .5-10.1 .5-2.1 .4 4.7 .5 5.6 .5-8.1 .5 7.2 .5-3.5 .4-3.3 .5 4.4 .5 4.1 .5-7.2 .4-.3 .5 3.2 .5 .5 .5-5.3 .4 2.7 .5 2.7 .5 1.1 .5-2.1 .4 .1 .5 1.8 .5 5.5 .5-4.6 .4 1 .5-3.3 .5-3.5 .5 0 .5 1.5 .4 2 .5 1.1 .5-3 .5 2.6 .4-1.2 .5 .9 .5-3.3 .5 .3 .4-7 .5 5.2 .5 5.3 .5-4.5 .4 5.2 .5-6.3 .5 1.8 .5-8.7 .5 14.3 .4-3.6 .5 .5 .5-.8 .5-2.4 .4 6.3 .5-1.4 .5-4.1 .5-3.5 .4 7.8 .5 1.7 .5-10.3 .5 1.2 .4-.9 .5 8.5 .5-2.4 .5-.3 .4-.6 .5 2.6 .5-.4 .5-4.9 .5 5.7 .4-1.3 .5-.1 .5-.4 .5-1.6 .4 2.1 .5 .2 .5-7.2 .5 3.2 .4 2.4 .5-6.3 .5 5.8 .5-2 .4 1 .5 2.7 .5-.7 .5-2.3 .5 7 .4-3.9 .5-3.3 .5-.8 .5 0 .4-7.4 .5 6 .5 2.5 .5 1 .4 .2 .5-1.2 .5 3.1 .5-6.8 .4 10.2 .5-6.4 .5 .5 .5 5.9 .4-6.6 .5 .5 .5 4.5 .5-11.5 .5 5.4 .4 3.8 .5 .5 .5 .7 .5-4.6 .4 .6 .5 6.4 .5-1.3 .5-1.1 .4-1 .5 1.5 .5 1.5 .5-4.7 .4-.9 .5 2.4 .5 7.7 .5-7.9 .5-2.1 .4 2.1 .5-.7 .5 1.8 .5 6.4 .4 3.9 .5-12.4 .5 3.8 .5-4 .4 1.4 .5-.9 .5-6.2 .5 9 .4-5 .5 4 .5-3.6 .5-1 .4 0 .5 1.9 .5 5.5 .5-5.7 .5-2.5 .4 .2 .5-5.4 .5 6.7 .5 6.6 .4-2.9 .5-2 .5-4.2 .5 8.1 .4-7.4 .5 .4 .5 6.2 .5-5.8 .4 4.6 .5-2.7 .5 1.4 .5-2.4 .5 5.3 .4-6.8 .5 10.5 .5-6 .5 .3 .4-7.6 .5 3.9 .5 4.4 .5 2 .4-3.4 .5 2.3 .5-10 .5 19.1 .4-10.5 .5 9 .5-14 .5 7 .4-9.9 .5 6.7 .5-5.9 .5 3 .5-2.7 .4 4 .5 12.9 .5-8.4 .5 3.8 .4-9.3 .5 2.7 .5 1.9 .5-2.9 .4 1.3 .5 2.2 .5-9.3 .5 5 .4 1.3 .5 5.2 .5-3.2 .5-2.5 .4 .6 .5 1.1 .5-1.1 .5 3.9 .5-5 .4 6.2 .5-3.4 .5-.8 .5-4.9 .4 1.1 .5 2.1 .5 4 .5-1.6 .4-4.1 .5-2 .5 10.6 .5-3.2 .4-1.7 .5-2.1 .5 1.2 .5-3.4 .5 7.9 .4-10.7 .5 10.3 .5-4.5 .5-1 .4-1.2 .5 .5 .5-.9 .5-1 .4 6.2 .5-3.4 .5-4.3 .5 8.2 .4 2.8 .5-2.2 .5-9 .5 0 .4 6.8 .5-1.5 .5-.2 .5-2.1 .5 11.1 .4-5.3 .5-.4 .5-2.8 .5 .1 .4 .9 .5-2.5 .5 11.7 .5-21.4 .4 8.1 .5 .1 .5 6.5 .5-3.9 .4-6.7 .5 .6 .5 7.6 .5 5.1 .5-5.9 .4 .8 .5-4.3 .5 8.1 .5-5.4 .4-1.9 .5 3.7 .5-4.9 .5 7.8 .4-.6 .5-2.5 .5-4.7 .5 3.9 .4 .4 .5-4.9 .5 2.7 .5 3 .4-2 .5 1.3 .5-.9 .5 1.4 .5 3.6 .4-1.5 .5-.2 .5-3.1 .5-1.8 .4 5.5 .5-2.4 .5-2 .5-3.1 .4 3.8 .5-6.1 .5 7.1 .5-2.7 .4 3.4 .5 2.1 .5-4.7 .5-1.2 .5 .3 .4 .6 .5 2.7 .5 2.5 .5-1 .4-2.7 .5-1.7 .5 16.2 .5-15.3 .4-1.4 .5-1.2 .5 2.6 .5-1 .4 4 .5-.9 .5-2.9 .5 5.8 .4-1.3 .5-4.8 .5 6.1 .5-5 .5 5.3 .4-6.5 .5 1.5 .5 3.1 .5 .6 .4-1.3 .5 6.7 .5-7.1 .5-2.1 .4-4.5 .5 6.5 .5-2.2 .5-6.1 .4-.4 .5 7.5 .5-5.7 .5-.6 .5 3.3 .4 5.6 .5-1 .5-4.7 .5-6.9 .4 10.2 .5-6.5 .5-.9 .5 12.1 .4-3.1 .5-7.2 .5 1.5 .5 .8 .4 2.3 .5-3.1 .5 4.5 .5-11.4 .4 13.3 .5 2.4 .5-7.6" stroke="#16a5e8" stroke-width="1.8" stroke-linejoin="round"/></svg>
<span class="t" style="left:622.6px;top:475.7px;font-size:10px;font-weight:400;color:#9ba0ad;">Mar 7</span>
<span class="t" style="left:704.0px;top:475.7px;font-size:10px;font-weight:400;color:#9ba0ad;">Mar 8</span>
<span class="t" style="left:785.6px;top:475.7px;font-size:10px;font-weight:400;color:#9ba0ad;">Mar 9</span>
<span class="t" style="left:836.3px;top:475.7px;font-size:10px;font-weight:400;color:#9ba0ad;width:44.2px;overflow:hidden;">6:00:00pm</span>
<div style="position:absolute;left:598.3px;top:499.90000000000003px;width:7.6px;height:7.6px;background:#16a5e8;border-radius:1.5px;"></div>
<span class="t" style="left:610.4px;top:497.6px;font-size:11.8px;font-weight:400;color:#a0a5b3;">app:users</span>
<div style="position:absolute;left:669px;top:499.90000000000003px;width:7.6px;height:7.6px;background:#5cc8c2;border-radius:1.5px;"></div>
<span class="t" style="left:680.6px;top:497.6px;font-size:11.8px;font-weight:400;color:#a0a5b3;">app:log</span>
<div style="position:absolute;left:727px;top:499.90000000000003px;width:7.6px;height:7.6px;background:#12b886;border-radius:1.5px;"></div>
<span class="t" style="left:738.6px;top:497.6px;font-size:11.8px;font-weight:400;color:#a0a5b3;">app:sales</span>
<div style="position:absolute;left:901px;top:312px;width:314px;height:206px;background:#222737;border:1px solid #2c3142;border-radius:8px;box-sizing:border-box;"></div>
<span class="t m" style="left:916.0px;top:329.1px;font-size:11.6px;font-weight:400;color:#e6e8ee;-webkit-text-stroke:0.45px currentColor;">Slow queries per second</span>
<svg style="position:absolute;left:1186px;top:333px" width="11" height="4" viewBox="0 0 11 4"><g fill="#7d8294"><circle cx="1.5" cy="2" r="1"/><circle cx="5.2" cy="2" r="1"/><circle cx="8.9" cy="2" r="1"/></g></svg>
<span class="t" style="right:287.0px;top:375.2px;font-size:10px;font-weight:400;color:#9ba0ad;">0.7</span>
<div style="position:absolute;left:944px;top:380px;width:248px;height:1px;background:#2b3043;"></div>
<span class="t" style="right:287.0px;top:387.8px;font-size:10px;font-weight:400;color:#9ba0ad;">0.6</span>
<div style="position:absolute;left:944px;top:392px;width:248px;height:1px;background:#2b3043;"></div>
<span class="t" style="right:287.0px;top:400.4px;font-size:10px;font-weight:400;color:#9ba0ad;">0.5</span>
<div style="position:absolute;left:944px;top:405px;width:248px;height:1px;background:#2b3043;"></div>
<span class="t" style="right:287.0px;top:412.9px;font-size:10px;font-weight:400;color:#9ba0ad;">0.4</span>
<div style="position:absolute;left:944px;top:417px;width:248px;height:1px;background:#2b3043;"></div>
<span class="t" style="right:287.0px;top:425.5px;font-size:10px;font-weight:400;color:#9ba0ad;">0.3</span>
<div style="position:absolute;left:944px;top:430px;width:248px;height:1px;background:#2b3043;"></div>
<span class="t" style="right:287.0px;top:438.1px;font-size:10px;font-weight:400;color:#9ba0ad;">0.2</span>
<div style="position:absolute;left:944px;top:442px;width:248px;height:1px;background:#2b3043;"></div>
<span class="t" style="right:287.0px;top:450.7px;font-size:10px;font-weight:400;color:#9ba0ad;">0.1</span>
<div style="position:absolute;left:944px;top:455px;width:248px;height:1px;background:#2b3043;"></div>
<span class="t" style="right:287.0px;top:463.2px;font-size:10px;font-weight:400;color:#9ba0ad;">0</span>
<div style="position:absolute;left:943px;top:466px;width:250px;height:3px;background:#363b4f;border-radius:1px;"></div>
<svg style="position:absolute;left:0;top:0" width="1224" height="896" viewBox="0 0 1224 896" fill="none"><path d="M960.9 468 L961.4 400.1 L961.9 468" stroke="#16a5e8" stroke-width="1.8" stroke-linejoin="round"/><path d="M988.4 468 L988.9 444.1 L989.4 468" stroke="#16a5e8" stroke-width="1.8" stroke-linejoin="round"/><path d="M1043.5 468 L1044.0 382.5 L1044.5 468" stroke="#16a5e8" stroke-width="1.8" stroke-linejoin="round"/><path d="M1053.9 468 L1054.4 388.8 L1054.9 468" stroke="#16a5e8" stroke-width="1.8" stroke-linejoin="round"/><path d="M1070.9 468 L1071.4 383.8 L1071.9 468" stroke="#16a5e8" stroke-width="1.8" stroke-linejoin="round"/></svg>
<span class="t" style="left:946.6px;top:475.7px;font-size:10px;font-weight:400;color:#9ba0ad;">Mar 7</span>
<span class="t" style="left:1028.8px;top:475.7px;font-size:10px;font-weight:400;color:#9ba0ad;">Mar 8</span>
<span class="t" style="left:1111.8px;top:475.7px;font-size:10px;font-weight:400;color:#9ba0ad;">Mar 9</span>
<span class="t" style="left:1160.8px;top:475.7px;font-size:10px;font-weight:400;color:#9ba0ad;width:43.7px;overflow:hidden;">6:00:00pm</span>
<div style="position:absolute;left:922.3px;top:499.90000000000003px;width:7.6px;height:7.6px;background:#16a5e8;border-radius:1.5px;"></div>
<span class="t" style="left:934.2px;top:497.6px;font-size:11.8px;font-weight:400;color:#a0a5b3;">default/mysql-0/mysql</span>
<span class="t" style="left:1175.0px;top:496.5px;font-size:11px;font-weight:400;color:#a0a5b3;">+1</span>
<span class="t m" style="left:264.4px;top:536.3px;font-size:12.8px;font-weight:400;color:#eceef3;-webkit-text-stroke:0.4px currentColor;">Connections and network traffic</span>
<svg style="position:absolute;left:451px;top:540.5px" width="10" height="7" viewBox="0 0 10 7" fill="none" stroke="#b4b9c6" stroke-width="1.3" stroke-linecap="round" stroke-linejoin="round"><path d="M1.5 1.6 L5 5 L8.5 1.6"/></svg>
<span class="t" style="left:1135.0px;top:537.2px;font-size:12px;font-weight:400;color:#9ea3b1;">3 charts</span>
<svg style="position:absolute;left:1189px;top:541.5px" width="12" height="4" viewBox="0 0 12 4"><g fill="#858b9d"><circle cx="1.6" cy="2" r="1"/><circle cx="5.4" cy="2" r="1"/><circle cx="9.2" cy="2" r="1"/></g></svg>
<div style="position:absolute;left:253px;top:563px;width:314px;height:241px;background:#222737;border:1px solid #2c3142;border-radius:8px;box-sizing:border-box;"></div>
<span class="t m" style="left:268.0px;top:580.1px;font-size:11.6px;font-weight:400;color:#e6e8ee;-webkit-text-stroke:0.45px currentColor;">Connections</span>
<svg style="position:absolute;left:538px;top:584px" width="11" height="4" viewBox="0 0 11 4"><g fill="#7d8294"><circle cx="1.5" cy="2" r="1"/><circle cx="5.2" cy="2" r="1"/><circle cx="8.9" cy="2" r="1"/></g></svg>
<span class="t" style="right:942.5px;top:625.8px;font-size:10px;font-weight:400;color:#9ba0ad;">5</span>
<div style="position:absolute;left:288.5px;top:630px;width:255.79999999999995px;height:1px;background:#2b3043;"></div>
<span class="t" style="right:942.5px;top:650.6px;font-size:10px;font-weight:400;color:#9ba0ad;">4</span>
<div style="position:absolute;left:288.5px;top:655px;width:255.79999999999995px;height:1px;background:#2b3043;"></div>
<span class="t" style="right:942.5px;top:675.4px;font-size:10px;font-weight:400;color:#9ba0ad;">3</span>
<div style="position:absolute;left:288.5px;top:680px;width:255.79999999999995px;height:1px;background:#2b3043;"></div>
<span class="t" style="right:942.5px;top:700.1px;font-size:10px;font-weight:400;color:#9ba0ad;">2</span>
<div style="position:absolute;left:288.5px;top:704px;width:255.79999999999995px;height:1px;background:#2b3043;"></div>
<span class="t" style="right:942.5px;top:724.9px;font-size:10px;font-weight:400;color:#9ba0ad;">1</span>
<div style="position:absolute;left:288.5px;top:729px;width:255.79999999999995px;height:1px;background:#2b3043;"></div>
<span class="t" style="right:942.5px;top:749.6px;font-size:10px;font-weight:400;color:#9ba0ad;">0</span>
<svg style="position:absolute;left:0;top:0" width="1224" height="896" viewBox="0 0 1224 896" fill="none"><path d="M288.5 730.3l.5 0 .4-1.3 .5 .6 .5 .1 .5 .6 .4-.2 .5-.6 .5 .2 .5 1.3 .4-.7 .5-.6 .5-1.4 .5 2 .4 1 .5-2 .5 .8 .5 .6 .4-1 .5 .3 .5 .5 .5 .3 .4-.7 .5-.2 .5 1.2 .5-1.9 .4 1.3 .5-1.6 .5 .6 .5 .2 .4-.3 .5 .6 .5-.3 .5-.9 .4 1.3 .5-.9 .5 1.1 .5-.4 .4-.7 .5 1.3 .5-1 .5 1.5 .4-.7 .5-.5 .5-.8 .5 .1 .4 1 .5-.3 .5-.2 .5 1 .4-1.1 .5-.5 .5 0 .5 1.1 .4-.2 .5 .3 .5-.3 .5-.1 .4-.6 .5 .3 .5 .7 .4-1 .5-.1 .5 1 .5-.3 .4 0 .5 .9 .5-1 .5-.4 .4-.8 .5 1.1 .5 .2 .5-.2 .4-.4 .5-.1 .5 1 .5-.6 .4-.3 .5 1.6 .5-2.1 .5 1 .4-.8 .5 .6 .5 .1 .5-.1 .4-.1 .5-.2 .5 .8 .5 .5 .4-.2 .5 .1 .5-1 .5 1 .4-1.6 .5 .8 .5 .2 .5-.7 .4 .8 .5-.1 .5-.7 .5 0 .4 1.1 .5-2.1 .5 1 .5 1.2 .4-.4 .5-.6 .5 .4 .5-.3 .4-1 .5 .8 .5-.6 .5 .6 .4 .7 .5-1.3 .5 1.3 .5-1 .4 .2 .5 1 .5-.1 .4-.3 .5-.3 .5-.5 .5 .7 .4-1.1 .5 .7 .5 .9 .5-.1 .4-.3 .5 .4 .5-.3 .5-.6 .4 .3 .5-.4 .5 1.1 .5 0 .4 .4 .5 .3 .5-.9 .5-.2 .4 .1 .5-.1 .5-1.2 .5 2.1 .4-.7 .5 0 .5 .2 .5-1.5 .4 .9 .5-.7 .5 1.3 .5-1.9 .4-.2 .5 2 .5-.6 .5 .1 .4-.4 .5 .9 .5-1.1 .5-.1 .4 .8 .5 1.1 .5-.8 .5-.3 .4-.5 .5 1 .5 .3 .5-1 .4 .3 .5-.3 .5 .4 .5-.6 .4 .3 .5 1.4 .5-1.3 .5-.3 .4 .3 .5-.9 .5 1.3 .5-.8 .4 1.1 .5-.8 .5 .3 .4 .4 .5 .1 .5-1 .5-.2 .4 .6 .5 .3 .5-.1 .5-1.1 .4 1.3 .5-1.5 .5 1.8 .5-1.2 .4-.1 .5-.3 .5 1.1 .5 .3 .4 .3 .5-1.4 .5 .7 .5 .2 .4-.1 .5-.5 .5 .2 .5-.7 .4 2.1 .5-1.8 .5 .8 .5-.2 .4 .1 .5-.3 .5-.6 .5 .3 .4 1 .5-.9 .5 0 .5-.4 .4 .2 .5 .3 .5-.9 .5 1.5 .4-2 .5 1.7 .5 .2 .5-1.1 .4-.2 .5 0 .5 0 .5 .6 .4 .2 .5-.2 .5 .2 .5 .4 .4-1.2 .5-.2 .5 1.1 .5 .1 .4 .2 .5 .7 .5-.6 .4-.1 .5-.3 .5 .5 .5 .7 .4-1.6 .5-.7 .5 2.4 .5-1.3 .4-.6 .5 1.2 .5 .2 .5-.9 .4 .2 .5 .2 .5-1.3 .5 .2 .4 .4 .5 .5 .5 .1 .5-.8 .4 .7 .5-1.1 .5 .1 .5 1.2 .4-.8 .5-.6 .5 .5 .5 1 .4-.4 .5 .1 .5-.3 .5 0 .4 .4 .5-.8 .5-.3 .5 1.1 .4 .6 .5-1.2 .5 .2 .5-.3 .4 .5 .5-.5 .5 .7 .5-1.1 .4-.2 .5 1.7 .5 1 .5-1.4 .4 .1 .5-.5 .5 .1 .5-.3 .4-1.6 .5 2 .5-.1 .5-.4 .4 1.3 .5-1.6 .5 .9 .4 .5 .5-.4 .5-.9 .5-.4 .4-.2 .5 .4 .5 .8 .5-.8 .4 .5 .5-1.5 .5 2.9 .5-2.3 .4 .6 .5 .4 .5 .3 .5 .3 .4 .3 .5 .4 .5-2.2 .5 .7 .4 .1 .5 0 .5 1.4 .5-1 .4-.4 .5-.7 .5 1.3 .5-.8 .4 .3 .5-.2 .5 .6 .5-.6 .4 .3 .5 1.2 .5-1.9 .5-.5 .4 1.8 .5-1.1 .5 1.2 .5-.3 .4-1.5 .5 .8 .5-.7 .5 .7 .4-.4 .5 .6 .5-.9 .5-.2 .4 .7 .5 .8 .5-.1 .5 .4 .4-1.1 .5 .2 .5 .7 .5-1.1 .4 1 .5-1.4 .5 .6 .4-.5 .5 1.5 .5 .3 .5 .5 .4-1.5 .5 1 .5-1.7 .5 .8 .4-.4 .5 1.1 .5-.4 .5-.5 .4-.3 .5 1.2 .5-.9 .5 .8 .4-.9 .5 .7 .5-.1 .5-.4 .4-.5 .5 .8 .5-.9 .5 1.2 .4-.8 .5 .9 .5-.9 .5 .8 .4-.6 .5-.2 .5 .9 .5 .5 .4-1 .5-.5 .5 .3 .5 .7 .4-1.2 .5 .7 .5-.6 .5 1.2 .4-.7 .5-.3 .5 1 .5-.3 .4-.5 .5 0 .5 .1 .5 .2 .4 .9 .5-1 .5 .7 .5-.7 .4 1.5 .5-2.2 .5-.4 .5 1 .4 .8 .5-.3 .5-.7 .5 0 .4 .8 .5-1.3 .5 .4 .4 0 .5 .4 .5-.2 .5 .6 .4-.4 .5 .6 .5-1.1 .5 .8 .4 0 .5 0 .5 0 .5 .9 .4-1.8 .5 .7 .5 .3 .5 .1 .4-.2 .5-.1 .5-.3 .5 .6 .4-.5 .5-.1 .5 .6 .5-1.8 .4 1.3 .5-.3 .5 0 .5 .1 .4-.5 .5-.4 .5 1 .5 .6 .4-.8 .5 1.8 .5-1.2 .5 .3 .4-.3 .5 1.1 .5-.8 .5 .4 .4-.2 .5-.8 .5 .2 .5 .1 .4-1 .5 .7 .5 1.4 .5-.8 .4-1 .5 0 .5 .2 .5 .1 .4 .6 .5-.5 .5 .7 .5-.1 .4 .1 .5-.1 .5-.3 .4-.2 .5 .4 .5-1 .5 1 .4-1.2 .5 .3 .5 1.5 .5-1.2 .4 1.4 .5-1.7 .5 .6 .5 .7 .4 .8 .5-1.1 .5 .5 .5-1.5 .4 1.5 .5-.5 .5-.4 .5 .2 .4-.1 .5 .2 .5-.5 .5 1 .4-.9 .5 .9 .5-.9 .5 .8 .4-.6 .5-.4 .5-.4 .5 1.9 .4-.7 .5 .2 .5-1.4 .5 1.3 .4-1.1 .5 .9 .5 .4 .5-1.1 .4 .9 .5-1.1 .5-.1 .5-.2 .4 1.4 .5-1.7 .5 .4 .5 1.7 .4-2.5 .5 .3 .5 1.7 .5-.9 .4 .9 .5-.6 .5-.1 .5-.1 .4 .9 .5-.5 0 24.6-.5 0-.4 0-.5 0-.5 0-.5 0-.4 0-.5 0-.5 0-.5 0-.4 0-.5 0-.5 0-.5 0-.4 0-.5 0-.5 0-.5 0-.4 0-.5 0-.5 0-.5 0-.4 0-.5 0-.5 0-.5 0-.4 0-.5 0-.5 0-.5 0-.4 0-.5 0-.5 0-.5 0-.4 0-.5 0-.5 0-.5 0-.4 0-.5 0-.5 0-.5 0-.4 0-.5 0-.5 0-.5 0-.4 0-.5 0-.5 0-.5 0-.4 0-.5 0-.5 0-.5 0-.4 0-.5 0-.5 0-.5 0-.4 0-.5 0-.5 0-.4 0-.5 0-.5 0-.5 0-.4 0-.5 0-.5 0-.5 0-.4 0-.5 0-.5 0-.5 0-.4 0-.5 0-.5 0-.5 0-.4 0-.5 0-.5 0-.5 0-.4 0-.5 0-.5 0-.5 0-.4 0-.5 0-.5 0-.5 0-.4 0-.5 0-.5 0-.5 0-.4 0-.5 0-.5 0-.5 0-.4 0-.5 0-.5 0-.5 0-.4 0-.5 0-.5 0-.5 0-.4 0-.5 0-.5 0-.5 0-.4 0-.5 0-.5 0-.5 0-.4 0-.5 0-.5 0-.5 0-.4 0-.5 0-.5 0-.4 0-.5 0-.5 0-.5 0-.4 0-.5 0-.5 0-.5 0-.4 0-.5 0-.5 0-.5 0-.4 0-.5 0-.5 0-.5 0-.4 0-.5 0-.5 0-.5 0-.4 0-.5 0-.5 0-.5 0-.4 0-.5 0-.5 0-.5 0-.4 0-.5 0-.5 0-.5 0-.4 0-.5 0-.5 0-.5 0-.4 0-.5 0-.5 0-.5 0-.4 0-.5 0-.5 0-.5 0-.4 0-.5 0-.5 0-.5 0-.4 0-.5 0-.5 0-.5 0-.4 0-.5 0-.5 0-.5 0-.4 0-.5 0-.5 0-.5 0-.4 0-.5 0-.5 0-.4 0-.5 0-.5 0-.5 0-.4 0-.5 0-.5 0-.5 0-.4 0-.5 0-.5 0-.5 0-.4 0-.5 0-.5 0-.5 0-.4 0-.5 0-.5 0-.5 0-.4 0-.5 0-.5 0-.5 0-.4 0-.5 0-.5 0-.5 0-.4 0-.5 0-.5 0-.5 0-.4 0-.5 0-.5 0-.5 0-.4 0-.5 0-.5 0-.5 0-.4 0-.5 0-.5 0-.5 0-.4 0-.5 0-.5 0-.5 0-.4 0-.5 0-.5 0-.5 0-.4 0-.5 0-.5 0-.5 0-.4 0-.5 0-.5 0-.4 0-.5 0-.5 0-.5 0-.4 0-.5 0-.5 0-.5 0-.4 0-.5 0-.5 0-.5 0-.4 0-.5 0-.5 0-.5 0-.4 0-.5 0-.5 0-.5 0-.4 0-.5 0-.5 0-.5 0-.4 0-.5 0-.5 0-.5 0-.4 0-.5 0-.5 0-.5 0-.4 0-.5 0-.5 0-.5 0-.4 0-.5 0-.5 0-.5 0-.4 0-.5 0-.5 0-.5 0-.4 0-.5 0-.5 0-.5 0-.4 0-.5 0-.5 0-.5 0-.4 0-.5 0-.5 0-.5 0-.4 0-.5 0-.5 0-.4 0-.5 0-.5 0-.5 0-.4 0-.5 0-.5 0-.5 0-.4 0-.5 0-.5 0-.5 0-.4 0-.5 0-.5 0-.5 0-.4 0-.5 0-.5 0-.5 0-.4 0-.5 0-.5 0-.5 0-.4 0-.5 0-.5 0-.5 0-.4 0-.5 0-.5 0-.5 0-.4 0-.5 0-.5 0-.5 0-.4 0-.5 0-.5 0-.5 0-.4 0-.5 0-.5 0-.5 0-.4 0-.5 0-.5 0-.5 0-.4 0-.5 0-.5 0-.5 0-.4 0-.5 0-.5 0-.5 0-.4 0-.5 0-.5 0-.4 0-.5 0-.5 0-.5 0-.4 0-.5 0-.5 0-.5 0-.4 0-.5 0-.5 0-.5 0-.4 0-.5 0-.5 0-.5 0-.4 0-.5 0-.5 0-.5 0-.4 0-.5 0-.5 0-.5 0-.4 0-.5 0-.5 0-.5 0-.4 0-.5 0-.5 0-.5 0-.4 0-.5 0-.5 0-.5 0-.4 0-.5 0-.5 0-.5 0-.4 0-.5 0-.5 0-.5 0-.4 0-.5 0-.5 0-.5 0-.4 0-.5 0-.5 0-.5 0-.4 0-.5 0-.5 0-.5 0-.4 0-.5 0-.5 0-.5 0-.4 0-.5 0-.5 0-.4 0-.5 0-.5 0-.5 0-.4 0-.5 0-.5 0-.5 0-.4 0-.5 0-.5 0-.5 0-.4 0-.5 0-.5 0-.5 0-.4 0-.5 0-.5 0-.5 0-.4 0-.5 0-.5 0-.5 0-.4 0-.5 0-.5 0-.5 0-.4 0-.5 0-.5 0-.5 0-.4 0-.5 0-.5 0-.5 0-.4 0-.5 0-.5 0-.5 0-.4 0-.5 0-.5 0-.5 0-.4 0-.5 0-.5 0-.5 0-.4 0-.5 0-.5 0-.5 0-.4 0-.5 0-.5 0-.5 0-.4 0-.5 0-.5 0-.4 0-.5 0-.5 0-.5 0-.4 0-.5 0-.5 0-.5 0-.4 0-.5 0-.5 0-.5 0-.4 0-.5 0-.5 0-.5 0-.4 0-.5 0-.5 0-.5 0-.4 0-.5 0-.5 0-.5 0-.4 0-.5 0-.5 0-.5 0-.4 0-.5 0-.5 0-.5 0-.4 0-.5 0-.5 0-.5 0-.4 0-.5 0-.5 0-.5 0-.4 0-.5 0-.5 0-.5 0-.4 0-.5 0-.5 0-.5 0-.4 0-.5 0-.5 0-.5 0-.4 0-.5 0-.5 0-.5 0-.4 0-.5 0Z" fill="rgba(92,200,194,0.36)"/><path d="M288.5 650.2l.5 3.3 .4 5.6 .5-17.2 .5 6.9 .5 17.7 .4-14.8 .5 3.6 .5 2.1 .5-5.7 .4 5.4 .5-14.9 .5 9.6 .5 .3 .4-6.9 .5 .2 .5-2.5 .5 5.1 .4 5.9 .5 .8 .5 17.6 .5-6.8 .4-18.5 .5 11.2 .5-17.2 .5-.5 .4 24.5 .5-12.6 .5-9.1 .5 17.2 .4-8.8 .5 5.2 .5-.1 .5-1.1 .4-.8 .5-5.1 .5 35.3 .5-32.5 .4 11.6 .5-10 .5 0 .5 8 .4-8.2 .5 6.6 .5 .6 .5-15.6 .4 21.8 .5-17.4 .5-2.3 .5 9.6 .4-11.3 .5 2.5 .5 17.6 .5-14.5 .4 .7 .5 7.5 .5-10.5 .5-1.9 .4 11.4 .5 10.5 .5-17.4 .4 9.1 .5 6.9 .5-10.9 .5 15.8 .4-15.9 .5-14.7 .5 34.4 .5-26 .4 9.9 .5-5.2 .5 3.8 .5-13.2 .4 5.9 .5 4.9 .5 6.2 .5-5.9 .4-10.4 .5 18.1 .5-11.6 .5-.4 .4 17.1 .5-24.2 .5 8.7 .5-13.8 .4 0 .5 15.2 .5-1.5 .5 7 .4 2.4 .5-16.1 .5 9.1 .5 1.6 .4-2.4 .5-5.7 .5-3.8 .5 8.4 .4 1.5 .5-1.4 .5-14.3 .5 31.1 .4-8.8 .5-12.5 .5 1.8 .5-9.1 .4 1.6 .5-4.1 .5 19.2 .5-9.9 .4 7.8 .5-11.1 .5 6.4 .5-5.1 .4 12.8 .5-7.4 .5 5.8 .5-2 .4 1.7 .5 3.6 .5-16.9 .4 19.5 .5-20.2 .5 16.7 .5 7.3 .4-9.9 .5-3.3 .5-6.8 .5-1.3 .4-1 .5-2.1 .5 7.3 .5 4.4 .4 5.5 .5-11.4 .5 9.1 .5 .7 .4-10.5 .5 2.6 .5-5 .5 11.5 .4-13 .5 6.4 .5 4.2 .5 5.6 .4 2.2 .5 .3 .5-20.9 .5 22.3 .4-17.1 .5 8 .5 3.3 .5-.3 .4-3.5 .5-8 .5 2.6 .5 4.3 .4 8.4 .5 2.6 .5-25.4 .5 18.6 .4 3.5 .5-18.9 .5 21.4 .5-15.6 .4 11.5 .5-8 .5-6.4 .5 18.2 .4-1.6 .5-5.1 .5-2.7 .5 .6 .4-4.7 .5 9.6 .5 9.2 .5-18.6 .4 4.9 .5-8.4 .5-7.5 .5 12.6 .4-4.2 .5 11.1 .5-13.9 .4 4 .5 21.3 .5-24.8 .5 38.5 .4-34.4 .5 .3 .5-8.4 .5 27 .4-14 .5-15.1 .5 17.1 .5-.7 .4-16.4 .5 0 .5 12.9 .5 6 .4-1 .5-1.3 .5 2.8 .5-.9 .4-7.1 .5 1 .5 19.8 .5-19.7 .4 10 .5-15 .5 3.8 .5 8.3 .4-3.1 .5-5.2 .5 1.9 .5 2.3 .4-6.8 .5-2.1 .5 11.8 .5-2.3 .4 8.2 .5-7.8 .5-5.5 .5-4.6 .4 6.3 .5 2.2 .5 4.3 .5-6.1 .4 11.4 .5-10.8 .5-.5 .5 6.6 .4-10 .5 3.8 .5-6 .5 9.4 .4-6.1 .5-7.6 .5 11.1 .5-5.5 .4 10.5 .5-1.8 .5 11 .4-13.4 .5 8 .5 10.7 .5-4 .4-9.3 .5-8 .5-2.8 .5 16.4 .4-8.9 .5-17.3 .5 7.2 .5 4.8 .4 21.2 .5-14 .5-10.5 .5 1.6 .4-1.8 .5-4.5 .5 7 .5-6.2 .4 22 .5-26.8 .5 17 .5 1.7 .4-16.4 .5 5.4 .5-2.5 .5 11.7 .4-6.9 .5-3.1 .5 15.8 .5-7.8 .4 .5 .5 .1 .5 3.2 .5 3.8 .4-13 .5 1.3 .5-7 .5 8.4 .4 4.9 .5 5.1 .5-9.9 .5 2.9 .4-15.2 .5 0 .5 2.3 .5 16.9 .4 5 .5-8.9 .5 5.9 .5-19 .4 11.1 .5 2.1 .5-3.6 .5-10.3 .4 18.2 .5-10.9 .5 15.4 .4-8.2 .5 28.6 .5-31.4 .5 .6 .4-7.7 .5 3.9 .5 10.2 .5 4.4 .4-3.5 .5-3.9 .5-2.2 .5 4 .4-15.2 .5 .9 .5 9.3 .5 2.2 .4-2.1 .5-1.1 .5 .2 .5 13.7 .4-8.7 .5 12.1 .5-14.8 .5-5.2 .4 12.8 .5 7.3 .5-12.9 .5 .2 .4-17.7 .5 5.2 .5 3 .5 8.1 .4 10.4 .5-11.3 .5-4.6 .5 10.7 .4-6 .5 3.1 .5 21.3 .5-37.7 .4 7.4 .5 11.3 .5 5.2 .5-5.9 .4 .6 .5-2.4 .5 7.1 .5-5.8 .4-7.8 .5-3.2 .5 19 .5-14.8 .4 8.2 .5 0 .5-4.3 .5 3.5 .4-11.4 .5-1.2 .5 9.5 .4 2.2 .5-18.8 .5-.1 .5 11.2 .4 3.4 .5 7.1 .5-20.4 .5 14.8 .4-16.6 .5 15.5 .5-9.1 .5 11.3 .4-3.9 .5 3.3 .5-4 .5-9.2 .4 15.7 .5-5 .5-7.1 .5 8.1 .4-15.6 .5 25.2 .5-25.2 .5 20.6 .4-12.7 .5-5 .5 7 .5 15.8 .4-7.9 .5-3.1 .5-3.8 .5-3 .4-2.5 .5-3.8 .5 18.3 .5-16.9 .4 22.7 .5-13.7 .5 9.8 .5 5.6 .4-19.6 .5 7.3 .5-8 .5 20.4 .4-2.3 .5-8.7 .5 4.6 .5-7.3 .4 5 .5-3.7 .5 6.3 .5-19.7 .4 13.5 .5 7 .5-13.4 .5 1.4 .4 3.3 .5-.1 .5 4.5 .5-1.1 .4 16.5 .5-6.7 .5-3.5 .4-11.4 .5-8.8 .5 20.6 .5-10.6 .4-9.9 .5 12 .5-8.3 .5 2.6 .4 15 .5 1.7 .5-14.5 .5 11.4 .4-.6 .5 1.7 .5-20.1 .5-3.9 .4 7.5 .5-7.5 .5 22.5 .5-22.5 .4 0 .5 0 .5 21.3 .5-16.3 .4 10.1 .5-9 .5 14.5 .5-7.3 .4 4.5 .5-8.8 .5 3.7 .5 10.8 .4-17 .5 3.6 .5 3.8 .5 2.9 .4-3 .5-6.2 .5 4.8 .5-2.1 .4 2.4 .5 .3 .5 4.5 .5 10.3 .4-18.1 .5 25.3 .5-12.1 .5-22.9 .4 42.6 .5-35.9 .5 4.6 .5 .3 .4-6.4 .5 1.9 .5 7.1 .5 7.9 .4 1.7 .5-10.9 .5-12.3 .4 6 .5 7.7 .5-3.5 .5-2.7 .4-7.5 .5 19.2 .5-10 .5 2.4 .4 8.3 .5 1.7 .5-19.4 .5 5.9 .4 5.1 .5-3 .5-7.4 .5 7.4 .4 11.1 .5-8.5 .5 4.8 .5-4.4 .4 6.6 .5-4.2 .5-13.8 .5-2.4 .4 6.4 .5 2.5 .5 8.8 .5 1.7 .4-10.6 .5 16.9 .5-7.4 .5-.9 .4-15.5 .5 5.3 .5 7.1 .5-1.9 .4-7.8 .5 8.1 .5 .5 .5 13.4 .4 15 .5-14 .5 1.7 .5-18.4 .4-1.3 .5 10.3 .5-10.1 .5 .8 .4 4.8 .5 10.4 .5-24.3 .5 1.2 .4 14.4 .5-17.1 .5 13.1 .5 9.1 .4-1.8 .5 13.3 0 55.6-.5 .5-.4-.9-.5 .1-.5 .1-.5 .6-.4-.9-.5 .9-.5-1.7-.5-.3-.4 2.5-.5-1.7-.5-.4-.5 1.7-.4-1.4-.5 .2-.5 .1-.5 1.1-.4-.9-.5 1.1-.5-.4-.5-.9-.4 1.1-.5-1.3-.5 1.4-.5-.2-.4 .7-.5-1.9-.5 .4-.5 .4-.4 .6-.5-.8-.5 .9-.5-.9-.4 .9-.5-1-.5 .5-.5-.2-.4 .1-.5-.2-.5 .4-.5 .5-.4-1.5-.5 1.5-.5-.5-.5 1.1-.4-.8-.5-.7-.5-.6-.5 1.7-.4-1.4-.5 1.2-.5-1.5-.5-.3-.4 1.2-.5-1-.5 1-.5-.4-.4 .2-.5 .3-.5 .1-.4-.1-.5 .1-.5-.7-.5 .5-.4-.6-.5-.1-.5-.2-.5 0-.4 1-.5 .8-.5-1.4-.5-.7-.4 1-.5-.1-.5-.2-.5 .8-.4 .2-.5-.4-.5 .8-.5-1.1-.4 .3-.5-.3-.5 1.2-.5-1.8-.4 .8-.5-.6-.5-1-.5 .4-.4 .5-.5-.1-.5 0-.5 .3-.4-1.3-.5 1.8-.5-.6-.5 .1-.4 .5-.5-.6-.5 .3-.5 .1-.4 .2-.5-.1-.5-.3-.5-.7-.4 1.8-.5-.9-.5 0-.5 0-.4 0-.5-.8-.5 1.1-.5-.6-.4 .4-.5-.6-.5 .2-.5-.4-.4 0-.5-.4-.5 1.3-.4-.8-.5 0-.5 .7-.5 .3-.4-.8-.5-1-.5 .4-.5 2.2-.4-1.5-.5 .7-.5-.7-.5 1-.4-.9-.5-.2-.5-.1-.5 0-.4 .5-.5 .3-.5-1-.5 .3-.4 .7-.5-1.2-.5 .6-.5-.7-.4 1.2-.5-.7-.5-.3-.5 .5-.4 1-.5-.5-.5-.9-.5 .2-.4 .6-.5-.8-.5 .9-.5-.9-.4 .8-.5-1.2-.5 .9-.5-.8-.4 .5-.5 .4-.5 .1-.5-.7-.4 .9-.5-.8-.5 .9-.5-1.2-.4 .3-.5 .5-.5 .4-.5-1.1-.4 .4-.5-.8-.5 1.7-.5-1-.4 1.5-.5-.5-.5-.3-.5-1.5-.4 .5-.5-.6-.5 1.4-.4-1-.5 1.1-.5-.7-.5-.2-.4 1.1-.5-.4-.5 .1-.5-.8-.4-.7-.5 .2-.5 .9-.5-.6-.4 .4-.5-.7-.5 .7-.5-.8-.4 1.5-.5 .3-.5-1.2-.5 1.1-.4-1.8-.5 .5-.5 1.9-.5-1.2-.4-.3-.5 .6-.5-.6-.5 .2-.4-.3-.5 .8-.5-1.3-.5 .7-.4 .4-.5 1-.5-1.4-.5 0-.4-.1-.5-.7-.5 2.2-.5-.4-.4-.3-.5-.3-.5-.3-.5-.4-.4-.6-.5 2.3-.5-2.9-.5 1.5-.4-.5-.5 .8-.5-.8-.5-.4-.4 .2-.5 .4-.5 .9-.5 .4-.4-.5-.5-.9-.5 1.6-.4-1.3-.5 .4-.5 .1-.5-2-.4 1.6-.5 .3-.5-.1-.5 .5-.4-.1-.5 1.4-.5-1-.5-1.7-.4 .2-.5 1.1-.5-.7-.5 .5-.4-.5-.5 .3-.5-.2-.5 1.2-.4-.6-.5-1.1-.5 .3-.5 .8-.4-.4-.5 0-.5 .3-.5-.1-.4 .4-.5-1-.5-.5-.5 .6-.4 .8-.5-1.2-.5-.1-.5 1.1-.4-.7-.5 .8-.5-.1-.5-.5-.4-.4-.5-.2-.5 1.3-.5-.2-.4-.2-.5 .9-.5-.2-.5-1.2-.4 .6-.5 1.3-.5-2.4-.5 .7-.4 1.6-.5-.7-.5-.5-.5 .3-.4 .1-.5 .6-.5-.7-.4-.2-.5-.1-.5-1.1-.5 .2-.4 1.2-.5-.4-.5-.2-.5 .2-.4-.2-.5-.6-.5 0-.5 0-.4 .2-.5 1.1-.5-.2-.5-1.7-.4 2-.5-1.5-.5 .9-.5-.3-.4-.2-.5 .4-.5 0-.5 .9-.4-1-.5-.3-.5 .6-.5 .3-.4-.1-.5 .2-.5-.8-.5 1.8-.4-2.1-.5 .7-.5-.2-.5 .5-.4 .1-.5-.2-.5-.7-.5 1.4-.4-.3-.5-.3-.5-1.1-.5 .3-.4 .1-.5 1.2-.5-1.8-.5 1.5-.4-1.3-.5 1.1-.5 .1-.5-.3-.4-.6-.5 .2-.5 1-.5-.1-.4-.4-.5-.3-.5 .8-.4-1.1-.5 .8-.5-1.3-.5 .9-.4-.3-.5 .3-.5 1.3-.5-1.4-.4-.3-.5 .6-.5-.4-.5 .3-.4-.3-.5 1-.5-.3-.5-1-.4 .5-.5 .3-.5 .8-.5-1.1-.4-.8-.5 .1-.5 1.1-.5-.9-.4 .4-.5-.1-.5 .6-.5-2-.4 .2-.5 1.9-.5-1.3-.5 .7-.4-.9-.5 1.5-.5-.2-.5 0-.4 .7-.5-2.1-.5 1.2-.5 .1-.4-.1-.5 .2-.5 .9-.5-.3-.4-.4-.5 0-.5-1.1-.5 .4-.4-.3-.5 .6-.5 .3-.5-.4-.4 .3-.5 .1-.5-.9-.5-.7-.4 1.1-.5-.7-.5 .5-.5 .3-.4 .3-.5 .1-.5-1-.4-.2-.5 1-.5-1.3-.5 1.3-.4-.7-.5-.6-.5 .6-.5-.8-.4 1-.5 .3-.5-.4-.5 .6-.4 .4-.5-1.2-.5-1-.5 2.1-.4-1.1-.5 0-.5 .7-.5 .1-.4-.8-.5 .7-.5-.2-.5-.8-.4 1.6-.5-1-.5 1-.5-.1-.4 .2-.5-.5-.5-.8-.5 .2-.4 .1-.5 .1-.5-.1-.5-.6-.4 .8-.5-1-.5 2.1-.5-1.6-.4 .3-.5 .6-.5-1-.5 .1-.4 .4-.5 .2-.5-.2-.5-1.1-.4 .8-.5 .4-.5 1-.5-.9-.4 0-.5 .3-.5-1-.5 .1-.4 1-.5-.7-.5-.3-.4 .6-.5 .1-.5 .3-.5-.3-.4 .2-.5-1.1-.5 0-.5 .5-.4 1.1-.5-1-.5 .2-.5 .3-.4-1-.5-.1-.5 .8-.5 .5-.4 .7-.5-1.5-.5 1-.5-1.3-.4 .7-.5 .4-.5-1.1-.5 .9-.4-1.3-.5 .9-.5 .3-.5-.6-.4 .3-.5-.2-.5-.6-.5 1.6-.4-1.3-.5 1.9-.5-1.2-.5 .2-.4 .7-.5-.3-.5-.5-.5-.3-.4 1-.5-.6-.5-.8-.5 2-.4-1-.5-2-.5 1.4-.5 .6-.4 .7-.5-1.3-.5-.2-.5 .6-.4 .2-.5-.6-.5-.1-.5-.6-.4 1.3-.5 0Z" fill="rgba(22,165,232,0.4)"/><path d="M288.5 730.3l.5 0 .4-1.3 .5 .6 .5 .1 .5 .6 .4-.2 .5-.6 .5 .2 .5 1.3 .4-.7 .5-.6 .5-1.4 .5 2 .4 1 .5-2 .5 .8 .5 .6 .4-1 .5 .3 .5 .5 .5 .3 .4-.7 .5-.2 .5 1.2 .5-1.9 .4 1.3 .5-1.6 .5 .6 .5 .2 .4-.3 .5 .6 .5-.3 .5-.9 .4 1.3 .5-.9 .5 1.1 .5-.4 .4-.7 .5 1.3 .5-1 .5 1.5 .4-.7 .5-.5 .5-.8 .5 .1 .4 1 .5-.3 .5-.2 .5 1 .4-1.1 .5-.5 .5 0 .5 1.1 .4-.2 .5 .3 .5-.3 .5-.1 .4-.6 .5 .3 .5 .7 .4-1 .5-.1 .5 1 .5-.3 .4 0 .5 .9 .5-1 .5-.4 .4-.8 .5 1.1 .5 .2 .5-.2 .4-.4 .5-.1 .5 1 .5-.6 .4-.3 .5 1.6 .5-2.1 .5 1 .4-.8 .5 .6 .5 .1 .5-.1 .4-.1 .5-.2 .5 .8 .5 .5 .4-.2 .5 .1 .5-1 .5 1 .4-1.6 .5 .8 .5 .2 .5-.7 .4 .8 .5-.1 .5-.7 .5 0 .4 1.1 .5-2.1 .5 1 .5 1.2 .4-.4 .5-.6 .5 .4 .5-.3 .4-1 .5 .8 .5-.6 .5 .6 .4 .7 .5-1.3 .5 1.3 .5-1 .4 .2 .5 1 .5-.1 .4-.3 .5-.3 .5-.5 .5 .7 .4-1.1 .5 .7 .5 .9 .5-.1 .4-.3 .5 .4 .5-.3 .5-.6 .4 .3 .5-.4 .5 1.1 .5 0 .4 .4 .5 .3 .5-.9 .5-.2 .4 .1 .5-.1 .5-1.2 .5 2.1 .4-.7 .5 0 .5 .2 .5-1.5 .4 .9 .5-.7 .5 1.3 .5-1.9 .4-.2 .5 2 .5-.6 .5 .1 .4-.4 .5 .9 .5-1.1 .5-.1 .4 .8 .5 1.1 .5-.8 .5-.3 .4-.5 .5 1 .5 .3 .5-1 .4 .3 .5-.3 .5 .4 .5-.6 .4 .3 .5 1.4 .5-1.3 .5-.3 .4 .3 .5-.9 .5 1.3 .5-.8 .4 1.1 .5-.8 .5 .3 .4 .4 .5 .1 .5-1 .5-.2 .4 .6 .5 .3 .5-.1 .5-1.1 .4 1.3 .5-1.5 .5 1.8 .5-1.2 .4-.1 .5-.3 .5 1.1 .5 .3 .4 .3 .5-1.4 .5 .7 .5 .2 .4-.1 .5-.5 .5 .2 .5-.7 .4 2.1 .5-1.8 .5 .8 .5-.2 .4 .1 .5-.3 .5-.6 .5 .3 .4 1 .5-.9 .5 0 .5-.4 .4 .2 .5 .3 .5-.9 .5 1.5 .4-2 .5 1.7 .5 .2 .5-1.1 .4-.2 .5 0 .5 0 .5 .6 .4 .2 .5-.2 .5 .2 .5 .4 .4-1.2 .5-.2 .5 1.1 .5 .1 .4 .2 .5 .7 .5-.6 .4-.1 .5-.3 .5 .5 .5 .7 .4-1.6 .5-.7 .5 2.4 .5-1.3 .4-.6 .5 1.2 .5 .2 .5-.9 .4 .2 .5 .2 .5-1.3 .5 .2 .4 .4 .5 .5 .5 .1 .5-.8 .4 .7 .5-1.1 .5 .1 .5 1.2 .4-.8 .5-.6 .5 .5 .5 1 .4-.4 .5 .1 .5-.3 .5 0 .4 .4 .5-.8 .5-.3 .5 1.1 .4 .6 .5-1.2 .5 .2 .5-.3 .4 .5 .5-.5 .5 .7 .5-1.1 .4-.2 .5 1.7 .5 1 .5-1.4 .4 .1 .5-.5 .5 .1 .5-.3 .4-1.6 .5 2 .5-.1 .5-.4 .4 1.3 .5-1.6 .5 .9 .4 .5 .5-.4 .5-.9 .5-.4 .4-.2 .5 .4 .5 .8 .5-.8 .4 .5 .5-1.5 .5 2.9 .5-2.3 .4 .6 .5 .4 .5 .3 .5 .3 .4 .3 .5 .4 .5-2.2 .5 .7 .4 .1 .5 0 .5 1.4 .5-1 .4-.4 .5-.7 .5 1.3 .5-.8 .4 .3 .5-.2 .5 .6 .5-.6 .4 .3 .5 1.2 .5-1.9 .5-.5 .4 1.8 .5-1.1 .5 1.2 .5-.3 .4-1.5 .5 .8 .5-.7 .5 .7 .4-.4 .5 .6 .5-.9 .5-.2 .4 .7 .5 .8 .5-.1 .5 .4 .4-1.1 .5 .2 .5 .7 .5-1.1 .4 1 .5-1.4 .5 .6 .4-.5 .5 1.5 .5 .3 .5 .5 .4-1.5 .5 1 .5-1.7 .5 .8 .4-.4 .5 1.1 .5-.4 .5-.5 .4-.3 .5 1.2 .5-.9 .5 .8 .4-.9 .5 .7 .5-.1 .5-.4 .4-.5 .5 .8 .5-.9 .5 1.2 .4-.8 .5 .9 .5-.9 .5 .8 .4-.6 .5-.2 .5 .9 .5 .5 .4-1 .5-.5 .5 .3 .5 .7 .4-1.2 .5 .7 .5-.6 .5 1.2 .4-.7 .5-.3 .5 1 .5-.3 .4-.5 .5 0 .5 .1 .5 .2 .4 .9 .5-1 .5 .7 .5-.7 .4 1.5 .5-2.2 .5-.4 .5 1 .4 .8 .5-.3 .5-.7 .5 0 .4 .8 .5-1.3 .5 .4 .4 0 .5 .4 .5-.2 .5 .6 .4-.4 .5 .6 .5-1.1 .5 .8 .4 0 .5 0 .5 0 .5 .9 .4-1.8 .5 .7 .5 .3 .5 .1 .4-.2 .5-.1 .5-.3 .5 .6 .4-.5 .5-.1 .5 .6 .5-1.8 .4 1.3 .5-.3 .5 0 .5 .1 .4-.5 .5-.4 .5 1 .5 .6 .4-.8 .5 1.8 .5-1.2 .5 .3 .4-.3 .5 1.1 .5-.8 .5 .4 .4-.2 .5-.8 .5 .2 .5 .1 .4-1 .5 .7 .5 1.4 .5-.8 .4-1 .5 0 .5 .2 .5 .1 .4 .6 .5-.5 .5 .7 .5-.1 .4 .1 .5-.1 .5-.3 .4-.2 .5 .4 .5-1 .5 1 .4-1.2 .5 .3 .5 1.5 .5-1.2 .4 1.4 .5-1.7 .5 .6 .5 .7 .4 .8 .5-1.1 .5 .5 .5-1.5 .4 1.5 .5-.5 .5-.4 .5 .2 .4-.1 .5 .2 .5-.5 .5 1 .4-.9 .5 .9 .5-.9 .5 .8 .4-.6 .5-.4 .5-.4 .5 1.9 .4-.7 .5 .2 .5-1.4 .5 1.3 .4-1.1 .5 .9 .5 .4 .5-1.1 .4 .9 .5-1.1 .5-.1 .5-.2 .4 1.4 .5-1.7 .5 .4 .5 1.7 .4-2.5 .5 .3 .5 1.7 .5-.9 .4 .9 .5-.6 .5-.1 .5-.1 .4 .9 .5-.5" stroke="#5cc8c2" stroke-width="1.5"/><path d="M288.5 650.2l.5 3.3 .4 5.6 .5-17.2 .5 6.9 .5 17.7 .4-14.8 .5 3.6 .5 2.1 .5-5.7 .4 5.4 .5-14.9 .5 9.6 .5 .3 .4-6.9 .5 .2 .5-2.5 .5 5.1 .4 5.9 .5 .8 .5 17.6 .5-6.8 .4-18.5 .5 11.2 .5-17.2 .5-.5 .4 24.5 .5-12.6 .5-9.1 .5 17.2 .4-8.8 .5 5.2 .5-.1 .5-1.1 .4-.8 .5-5.1 .5 35.3 .5-32.5 .4 11.6 .5-10 .5 0 .5 8 .4-8.2 .5 6.6 .5 .6 .5-15.6 .4 21.8 .5-17.4 .5-2.3 .5 9.6 .4-11.3 .5 2.5 .5 17.6 .5-14.5 .4 .7 .5 7.5 .5-10.5 .5-1.9 .4 11.4 .5 10.5 .5-17.4 .4 9.1 .5 6.9 .5-10.9 .5 15.8 .4-15.9 .5-14.7 .5 34.4 .5-26 .4 9.9 .5-5.2 .5 3.8 .5-13.2 .4 5.9 .5 4.9 .5 6.2 .5-5.9 .4-10.4 .5 18.1 .5-11.6 .5-.4 .4 17.1 .5-24.2 .5 8.7 .5-13.8 .4 0 .5 15.2 .5-1.5 .5 7 .4 2.4 .5-16.1 .5 9.1 .5 1.6 .4-2.4 .5-5.7 .5-3.8 .5 8.4 .4 1.5 .5-1.4 .5-14.3 .5 31.1 .4-8.8 .5-12.5 .5 1.8 .5-9.1 .4 1.6 .5-4.1 .5 19.2 .5-9.9 .4 7.8 .5-11.1 .5 6.4 .5-5.1 .4 12.8 .5-7.4 .5 5.8 .5-2 .4 1.7 .5 3.6 .5-16.9 .4 19.5 .5-20.2 .5 16.7 .5 7.3 .4-9.9 .5-3.3 .5-6.8 .5-1.3 .4-1 .5-2.1 .5 7.3 .5 4.4 .4 5.5 .5-11.4 .5 9.1 .5 .7 .4-10.5 .5 2.6 .5-5 .5 11.5 .4-13 .5 6.4 .5 4.2 .5 5.6 .4 2.2 .5 .3 .5-20.9 .5 22.3 .4-17.1 .5 8 .5 3.3 .5-.3 .4-3.5 .5-8 .5 2.6 .5 4.3 .4 8.4 .5 2.6 .5-25.4 .5 18.6 .4 3.5 .5-18.9 .5 21.4 .5-15.6 .4 11.5 .5-8 .5-6.4 .5 18.2 .4-1.6 .5-5.1 .5-2.7 .5 .6 .4-4.7 .5 9.6 .5 9.2 .5-18.6 .4 4.9 .5-8.4 .5-7.5 .5 12.6 .4-4.2 .5 11.1 .5-13.9 .4 4 .5 21.3 .5-24.8 .5 38.5 .4-34.4 .5 .3 .5-8.4 .5 27 .4-14 .5-15.1 .5 17.1 .5-.7 .4-16.4 .5 0 .5 12.9 .5 6 .4-1 .5-1.3 .5 2.8 .5-.9 .4-7.1 .5 1 .5 19.8 .5-19.7 .4 10 .5-15 .5 3.8 .5 8.3 .4-3.1 .5-5.2 .5 1.9 .5 2.3 .4-6.8 .5-2.1 .5 11.8 .5-2.3 .4 8.2 .5-7.8 .5-5.5 .5-4.6 .4 6.3 .5 2.2 .5 4.3 .5-6.1 .4 11.4 .5-10.8 .5-.5 .5 6.6 .4-10 .5 3.8 .5-6 .5 9.4 .4-6.1 .5-7.6 .5 11.1 .5-5.5 .4 10.5 .5-1.8 .5 11 .4-13.4 .5 8 .5 10.7 .5-4 .4-9.3 .5-8 .5-2.8 .5 16.4 .4-8.9 .5-17.3 .5 7.2 .5 4.8 .4 21.2 .5-14 .5-10.5 .5 1.6 .4-1.8 .5-4.5 .5 7 .5-6.2 .4 22 .5-26.8 .5 17 .5 1.7 .4-16.4 .5 5.4 .5-2.5 .5 11.7 .4-6.9 .5-3.1 .5 15.8 .5-7.8 .4 .5 .5 .1 .5 3.2 .5 3.8 .4-13 .5 1.3 .5-7 .5 8.4 .4 4.9 .5 5.1 .5-9.9 .5 2.9 .4-15.2 .5 0 .5 2.3 .5 16.9 .4 5 .5-8.9 .5 5.9 .5-19 .4 11.1 .5 2.1 .5-3.6 .5-10.3 .4 18.2 .5-10.9 .5 15.4 .4-8.2 .5 28.6 .5-31.4 .5 .6 .4-7.7 .5 3.9 .5 10.2 .5 4.4 .4-3.5 .5-3.9 .5-2.2 .5 4 .4-15.2 .5 .9 .5 9.3 .5 2.2 .4-2.1 .5-1.1 .5 .2 .5 13.7 .4-8.7 .5 12.1 .5-14.8 .5-5.2 .4 12.8 .5 7.3 .5-12.9 .5 .2 .4-17.7 .5 5.2 .5 3 .5 8.1 .4 10.4 .5-11.3 .5-4.6 .5 10.7 .4-6 .5 3.1 .5 21.3 .5-37.7 .4 7.4 .5 11.3 .5 5.2 .5-5.9 .4 .6 .5-2.4 .5 7.1 .5-5.8 .4-7.8 .5-3.2 .5 19 .5-14.8 .4 8.2 .5 0 .5-4.3 .5 3.5 .4-11.4 .5-1.2 .5 9.5 .4 2.2 .5-18.8 .5-.1 .5 11.2 .4 3.4 .5 7.1 .5-20.4 .5 14.8 .4-16.6 .5 15.5 .5-9.1 .5 11.3 .4-3.9 .5 3.3 .5-4 .5-9.2 .4 15.7 .5-5 .5-7.1 .5 8.1 .4-15.6 .5 25.2 .5-25.2 .5 20.6 .4-12.7 .5-5 .5 7 .5 15.8 .4-7.9 .5-3.1 .5-3.8 .5-3 .4-2.5 .5-3.8 .5 18.3 .5-16.9 .4 22.7 .5-13.7 .5 9.8 .5 5.6 .4-19.6 .5 7.3 .5-8 .5 20.4 .4-2.3 .5-8.7 .5 4.6 .5-7.3 .4 5 .5-3.7 .5 6.3 .5-19.7 .4 13.5 .5 7 .5-13.4 .5 1.4 .4 3.3 .5-.1 .5 4.5 .5-1.1 .4 16.5 .5-6.7 .5-3.5 .4-11.4 .5-8.8 .5 20.6 .5-10.6 .4-9.9 .5 12 .5-8.3 .5 2.6 .4 15 .5 1.7 .5-14.5 .5 11.4 .4-.6 .5 1.7 .5-20.1 .5-3.9 .4 7.5 .5-7.5 .5 22.5 .5-22.5 .4 0 .5 0 .5 21.3 .5-16.3 .4 10.1 .5-9 .5 14.5 .5-7.3 .4 4.5 .5-8.8 .5 3.7 .5 10.8 .4-17 .5 3.6 .5 3.8 .5 2.9 .4-3 .5-6.2 .5 4.8 .5-2.1 .4 2.4 .5 .3 .5 4.5 .5 10.3 .4-18.1 .5 25.3 .5-12.1 .5-22.9 .4 42.6 .5-35.9 .5 4.6 .5 .3 .4-6.4 .5 1.9 .5 7.1 .5 7.9 .4 1.7 .5-10.9 .5-12.3 .4 6 .5 7.7 .5-3.5 .5-2.7 .4-7.5 .5 19.2 .5-10 .5 2.4 .4 8.3 .5 1.7 .5-19.4 .5 5.9 .4 5.1 .5-3 .5-7.4 .5 7.4 .4 11.1 .5-8.5 .5 4.8 .5-4.4 .4 6.6 .5-4.2 .5-13.8 .5-2.4 .4 6.4 .5 2.5 .5 8.8 .5 1.7 .4-10.6 .5 16.9 .5-7.4 .5-.9 .4-15.5 .5 5.3 .5 7.1 .5-1.9 .4-7.8 .5 8.1 .5 .5 .5 13.4 .4 15 .5-14 .5 1.7 .5-18.4 .4-1.3 .5 10.3 .5-10.1 .5 .8 .4 4.8 .5 10.4 .5-24.3 .5 1.2 .4 14.4 .5-17.1 .5 13.1 .5 9.1 .4-1.8 .5 13.3" stroke="#16a5e8" stroke-width="1.7" stroke-linejoin="round"/></svg>
<span class="t" style="left:291.9px;top:762.3px;font-size:10px;font-weight:400;color:#9ba0ad;">Mar 7</span>
<span class="t" style="left:376.2px;top:762.3px;font-size:10px;font-weight:400;color:#9ba0ad;">Mar 8</span>
<span class="t" style="left:461.0px;top:762.3px;font-size:10px;font-weight:400;color:#9ba0ad;">Mar 9</span>
<span class="t" style="left:512.8px;top:762.3px;font-size:10px;font-weight:400;color:#9ba0ad;width:44.2px;overflow:hidden;">6:00:00pm</span>
<div style="position:absolute;left:274.5px;top:786.1999999999999px;width:7.6px;height:7.6px;background:#16a5e8;border-radius:1.5px;"></div>
<span class="t" style="left:285.8px;top:783.9px;font-size:11.8px;font-weight:400;color:#a0a5b3;">default/mysql-0/mysql</span>
<span class="t" style="left:527.2px;top:782.8px;font-size:11px;font-weight:400;color:#a0a5b3;">+1</span>
<div style="position:absolute;left:577px;top:563px;width:314px;height:241px;background:#222737;border:1px solid #2c3142;border-radius:8px;box-sizing:border-box;"></div>
<span class="t m" style="left:592.0px;top:580.1px;font-size:11.6px;font-weight:400;color:#e6e8ee;-webkit-text-stroke:0.45px currentColor;">New connections per second</span>
<svg style="position:absolute;left:862px;top:584px" width="11" height="4" viewBox="0 0 11 4"><g fill="#7d8294"><circle cx="1.5" cy="2" r="1"/><circle cx="5.2" cy="2" r="1"/><circle cx="8.9" cy="2" r="1"/></g></svg>
<span class="t" style="right:613.5px;top:625.8px;font-size:10px;font-weight:400;color:#9ba0ad;">15</span>
<div style="position:absolute;left:618px;top:630px;width:249px;height:1px;background:#2b3043;"></div>
<span class="t" style="right:613.5px;top:650.6px;font-size:10px;font-weight:400;color:#9ba0ad;">12</span>
<div style="position:absolute;left:618px;top:655px;width:249px;height:1px;background:#2b3043;"></div>
<span class="t" style="right:613.5px;top:675.4px;font-size:10px;font-weight:400;color:#9ba0ad;">9</span>
<div style="position:absolute;left:618px;top:680px;width:249px;height:1px;background:#2b3043;"></div>
<span class="t" style="right:613.5px;top:700.1px;font-size:10px;font-weight:400;color:#9ba0ad;">6</span>
<div style="position:absolute;left:618px;top:704px;width:249px;height:1px;background:#2b3043;"></div>
<span class="t" style="right:613.5px;top:724.9px;font-size:10px;font-weight:400;color:#9ba0ad;">3</span>
<div style="position:absolute;left:618px;top:729px;width:249px;height:1px;background:#2b3043;"></div>
<span class="t" style="right:613.5px;top:749.6px;font-size:10px;font-weight:400;color:#9ba0ad;">0</span>
<svg style="position:absolute;left:0;top:0" width="1224" height="896" viewBox="0 0 1224 896" fill="none"><path d="M618.4 653.4l.5 3.7 .5-2.4 .5 80.7 .5-76.7 .5-1 .5 77.7 .5-80 .5-.4 .5 3.2 .5-3.1 .5 6 .5-5.6 .5 .5 .5 .8 .5 4 .5-4 .5 2.7 .5-7.2 .5 4.7 .5-.3 .5 .1 .5-2 .5 1 .5-.9 .5 3.6 .5-5.9 .5 4.4 .4-3.4 .5 1.8 .5-2.1 .5 3.4 .5 3.7 .5-.7 .5-3 .5 78.7 .5-78.3 .5-1.3 .5-2.8 .5 4.7 .5-2.4 .5 .5 .5 2.3 .5-2.3 .5-1.9 .5 .1 .5 3.6 .5-6.4 .5 4.8 .5 1 .5 1 .5 .6 .5-4.9 .5 9.1 .5-6 .5 3.8 .5-3.4 .5 0 .5 78.2 .5-76.1 .5-6.3 .5 4.7 .5-2.1 .5 79.8 .5-81.4 .5-1.2 .5 82.6 .5-80.3 .5-.2 .5 5.1 .5-6.5 .5 5 .5 1 .5-1.8 .5 .4 .5 77.3 .5-81.7 .5-1.6 .5 4 .5 1.8 .5-.7 .5 2.1 .5-1.3 .5-6.8 .4 6.8 .5-1.2 .5-2.5 .5 1.5 .5-1.2 .5 4.3 .5 1.2 .5-6.6 .5 4.9 .5-1.7 .5-.9 .5 5.2 .5-4.7 .5 1.6 .5-2.8 .5 1.7 .5 5.4 .5-8.4 .5 9 .5-5.5 .5 1.1 .5-.7 .5-.8 .5-3.1 .5 4.8 .5-.6 .5-3.7 .5-.5 .5-.6 .5 1 .5 1.2 .5 .8 .5 .2 .5-3.7 .5-1.2 .5-.3 .5 84.2 .5-78.6 .5-.4 .5 .3 .5 2 .5-7.5 .5 1.4 .5 4.3 .5 .5 .5-.5 .5 3.1 .5-2.7 .5-3.2 .5-2.2 .5 2.4 .5-1.6 .5 6.4 .5 3.7 .5-9.5 .4 2.4 .5 .9 .5-4.9 .5 7 .5-.5 .5-.4 .5-6.6 .5 2 .5 7.5 .5-9.2 .5 4.3 .5-.6 .5 3.4 .5-7.3 .5 4 .5-1.8 .5 6.4 .5-4.7 .5 2.1 .5 .2 .5 1.5 .5-.2 .5 .8 .5-2.2 .5-.8 .5-1.6 .5 5.6 .5-1.1 .5-1 .5 2.7 .5-3.6 .5 0 .5-.5 .5-1.5 .5-1.6 .5 .3 .5 1.9 .5-1.3 .5 3.9 .5 .3 .5-4.5 .5-.4 .5-3 .5 5.7 .5 2.4 .5-3.4 .5 2.4 .5 1.4 .5-6.4 .5-2 .5 3.9 .5 2.7 .5-2.2 .5 .7 .5 3.5 .5-5.4 .4 80.9 .5-82.7 .5 5.2 .5-1.3 .5-.2 .5 4.4 .5-9.6 .5 10.3 .5-2.6 .5-2.7 .5 3.8 .5-5.1 .5 2.5 .5-1.7 .5-.1 .5 .5 .5 79.3 .5-78.9 .5-2 .5-.6 .5 2.3 .5 .9 .5-.6 .5-1.1 .5 1.7 .5 .3 .5 3 .5-9.2 .5 8.3 .5-7.9 .5 2.7 .5-.5 .5 2.4 .5-1 .5 .3 .5-.9 .5-.9 .5-2.3 .5 7.2 .5-3.6 .5-3.8 .5 .4 .5 6.9 .5-4.4 .5 0 .5 .6 .5 80.7 .5-81.7 .5 7.3 .5-9.8 .5 3.8 .5 1.7 .5-1.9 .5 1.1 .5 1.7 .4-1.4 .5-1.2 .5 3.6 .5-3.8 .5-.8 .5 0 .5 .2 .5-.4 .5 1.5 .5-1.5 .5 3.9 .5-1.8 .5-2.8 .5-1.4 .5 5.8 .5 3 .5-9.3 .5 1.9 .5-1.7 .5 2.5 .5 1.8 .5 2 .5 1.6 .5-6.6 .5 1.7 .5 1.8 .5 4.3 .5-1.9 .5-.2 .5-1 .5 5.4 .5-7.3 .5-3.9 .5 5.6 .5-2.1 .5 0 .5 3 .5-3.4 .5 3.4 .5-.6 .5-2.5 .5 1.5 .5-1.1 .5 3.1 .5-4.5 .5 81.4 .5-82 .5 3.7 .5 2 .5-3.1 .5 2.5 .5-1.5 .5-1 .5-2.7 .5-.2 .4 1.1 .5 2.3 .5 3.6 .5-3.3 .5 .2 .5-.5 .5 1.2 .5 .2 .5-4.4 .5 5.9 .5-4.1 .5-3.1 .5 5.8 .5 1 .5-1.8 .5 .3 .5-1.6 .5-3 .5 4.3 .5-1.9 .5 3.6 .5-.5 .5-2.7 .5 2.8 .5-5.5 .5 3.8 .5-.9 .5 79.5 .5-78.6 .5 1.5 .5-.7 .5 4 .5-5 .5-4.7 .5 10.3 .5-10.4 .5 83.6 .5-81.5 .5 5 .5-7.7 .5 8.5 .5-2.4 .5 78.1 .5-75.3 .5 2.7 .5-7 .5 2 .5 .2 .5 .1 .5 1.6 .5-8.5 .5 .5 .5 7.8 .5-3.2 .5 1.4 .5-3.8 .4 5.1 .5-7.3 .5 4.5 .5 1.9 .5-2.1 .5 1.7 .5-6.5 .5 4.3 .5 2 .5-1.3 .5-4.2 .5 6.9 .5 2.3 .5-8.6 .5 1.7 .5 2.8 .5-.9 .5-3.1 .5 9.7 .5-10.2 .5 4.7 .5-2.1 .5 1.8 .5-5.8 .5 8.2 .5-5.1 .5 8.5 .5-5.9 .5-2.3 .5 6.2 .5 1.5 .5-6.3 .5-2.6 .5-.5 .5 5.1 .5-3.3 .5 4.9 .5-8.4 .5 6.2 .5-5.4 .5 4.4 .5 .1 .5-5.2 .5 7.3 .5-5.9 .5 5.1 .5 1.5 .5 76.1 .5-82.8 .5 3.3 .5 .9 .5 3.2 .5-7.4 .5 .8 .5 2.2 .4-1.5 .5 8.7 .5-5.9 .5-2.2 .5-.2 .5 2 .5-2.2 .5 3.6 .5 0 .5 77.5 .5-79.9 .5 2.5 .5-.6 .5-6 .5 4.5 .5 .3 .5 4.4 .5-3.3 .5-4.1 .5 .9 .5 1.5 .5 .8 .5-1 .5-1.3 .5 2.6 .5 6 .5-11.5 .5 1.9 .5 4.5 .5-4.6 .5 82.4 .5-82.4 .5 3 .5-2.2 .5 3.3 .5-1.6 .5-.8 .5 80.7 .5-81.1 .5 .4 .5 2.8 .5-6.3 .5 3.8 .5 1.7 .5 .9 .5 3 .5-1.2 .5 2.3 .5-5.3 .5-.4 .5-1.3 .5 4 .5-2.7 .5 .7 .5-3.9 .5 7.4 .4 .2 .5-8 .5 3.5 .5 5.2 .5-8.1 .5-.6 .5 .9 .5 9.3 .5-6.3 .5 2.4 .5-1.4 .5 3.8 .5-9.9 .5 6.3 .5-2.5 .5-1.3 .5 1 .5 1.4 .5 2.1 .5-2.1 .5 .9 .5 5.5 .5-9.7 .5 4.9 .5 77.7 .5-77.9 .5 3.2 .5-.3 0 94-.5 0-.5 0-.5 0-.5 0-.5 0-.5 0-.5 0-.5 0-.5 0-.5 0-.5 0-.5 0-.5 0-.5 0-.5 0-.5 0-.5 0-.5 0-.5 0-.5 0-.5 0-.5 0-.5 0-.5 0-.5 0-.5 0-.5 0-.4 0-.5 0-.5 0-.5 0-.5 0-.5 0-.5 0-.5 0-.5 0-.5 0-.5 0-.5 0-.5 0-.5 0-.5 0-.5 0-.5 0-.5 0-.5 0-.5 0-.5 0-.5 0-.5 0-.5 0-.5 0-.5 0-.5 0-.5 0-.5 0-.5 0-.5 0-.5 0-.5 0-.5 0-.5 0-.5 0-.5 0-.5 0-.5 0-.5 0-.5 0-.5 0-.5 0-.5 0-.5 0-.5 0-.5 0-.5 0-.5 0-.5 0-.5 0-.5 0-.5 0-.5 0-.5 0-.5 0-.4 0-.5 0-.5 0-.5 0-.5 0-.5 0-.5 0-.5 0-.5 0-.5 0-.5 0-.5 0-.5 0-.5 0-.5 0-.5 0-.5 0-.5 0-.5 0-.5 0-.5 0-.5 0-.5 0-.5 0-.5 0-.5 0-.5 0-.5 0-.5 0-.5 0-.5 0-.5 0-.5 0-.5 0-.5 0-.5 0-.5 0-.5 0-.5 0-.5 0-.5 0-.5 0-.5 0-.5 0-.5 0-.5 0-.5 0-.5 0-.5 0-.5 0-.5 0-.5 0-.5 0-.5 0-.5 0-.4 0-.5 0-.5 0-.5 0-.5 0-.5 0-.5 0-.5 0-.5 0-.5 0-.5 0-.5 0-.5 0-.5 0-.5 0-.5 0-.5 0-.5 0-.5 0-.5 0-.5 0-.5 0-.5 0-.5 0-.5 0-.5 0-.5 0-.5 0-.5 0-.5 0-.5 0-.5 0-.5 0-.5 0-.5 0-.5 0-.5 0-.5 0-.5 0-.5 0-.5 0-.5 0-.5 0-.5 0-.5 0-.5 0-.5 0-.5 0-.5 0-.5 0-.5 0-.5 0-.5 0-.5 0-.5 0-.5 0-.4 0-.5 0-.5 0-.5 0-.5 0-.5 0-.5 0-.5 0-.5 0-.5 0-.5 0-.5 0-.5 0-.5 0-.5 0-.5 0-.5 0-.5 0-.5 0-.5 0-.5 0-.5 0-.5 0-.5 0-.5 0-.5 0-.5 0-.5 0-.5 0-.5 0-.5 0-.5 0-.5 0-.5 0-.5 0-.5 0-.5 0-.5 0-.5 0-.5 0-.5 0-.5 0-.5 0-.5 0-.5 0-.5 0-.5 0-.5 0-.5 0-.5 0-.5 0-.5 0-.5 0-.5 0-.5 0-.4 0-.5 0-.5 0-.5 0-.5 0-.5 0-.5 0-.5 0-.5 0-.5 0-.5 0-.5 0-.5 0-.5 0-.5 0-.5 0-.5 0-.5 0-.5 0-.5 0-.5 0-.5 0-.5 0-.5 0-.5 0-.5 0-.5 0-.5 0-.5 0-.5 0-.5 0-.5 0-.5 0-.5 0-.5 0-.5 0-.5 0-.5 0-.5 0-.5 0-.5 0-.5 0-.5 0-.5 0-.5 0-.5 0-.5 0-.5 0-.5 0-.5 0-.5 0-.5 0-.5 0-.5 0-.5 0-.4 0-.5 0-.5 0-.5 0-.5 0-.5 0-.5 0-.5 0-.5 0-.5 0-.5 0-.5 0-.5 0-.5 0-.5 0-.5 0-.5 0-.5 0-.5 0-.5 0-.5 0-.5 0-.5 0-.5 0-.5 0-.5 0-.5 0-.5 0-.5 0-.5 0-.5 0-.5 0-.5 0-.5 0-.5 0-.5 0-.5 0-.5 0-.5 0-.5 0-.5 0-.5 0-.5 0-.5 0-.5 0-.5 0-.5 0-.5 0-.5 0-.5 0-.5 0-.5 0-.5 0-.5 0-.5 0-.5 0-.4 0-.5 0-.5 0-.5 0-.5 0-.5 0-.5 0-.5 0-.5 0-.5 0-.5 0-.5 0-.5 0-.5 0-.5 0-.5 0-.5 0-.5 0-.5 0-.5 0-.5 0-.5 0-.5 0-.5 0-.5 0-.5 0-.5 0-.5 0-.5 0-.5 0-.5 0-.5 0-.5 0-.5 0-.5 0-.5 0-.5 0-.5 0-.5 0-.5 0-.5 0-.5 0-.5 0-.5 0-.5 0-.5 0-.5 0-.5 0-.5 0-.5 0-.5 0-.5 0-.5 0-.5 0-.5 0-.4 0-.5 0-.5 0-.5 0-.5 0-.5 0-.5 0-.5 0-.5 0-.5 0-.5 0-.5 0-.5 0-.5 0-.5 0-.5 0-.5 0-.5 0-.5 0-.5 0-.5 0-.5 0-.5 0-.5 0-.5 0-.5 0-.5 0-.5 0-.5 0-.5 0-.5 0-.5 0-.5 0-.5 0-.5 0-.5 0-.5 0-.5 0-.5 0-.5 0-.5 0-.5 0-.5 0-.5 0-.5 0-.5 0-.5 0-.5 0-.5 0-.5 0-.5 0-.5 0-.5 0-.5 0-.5 0-.5 0-.4 0-.5 0-.5 0-.5 0-.5 0-.5 0-.5 0-.5 0-.5 0-.5 0-.5 0-.5 0-.5 0-.5 0-.5 0-.5 0-.5 0-.5 0-.5 0-.5 0-.5 0-.5 0-.5 0-.5 0-.5 0-.5 0-.5 0-.5 0Z" fill="rgba(22,165,232,0.42)"/><path d="M618.4 653.4l.5 3.7 .5-2.4 .5 80.7 .5-76.7 .5-1 .5 77.7 .5-80 .5-.4 .5 3.2 .5-3.1 .5 6 .5-5.6 .5 .5 .5 .8 .5 4 .5-4 .5 2.7 .5-7.2 .5 4.7 .5-.3 .5 .1 .5-2 .5 1 .5-.9 .5 3.6 .5-5.9 .5 4.4 .4-3.4 .5 1.8 .5-2.1 .5 3.4 .5 3.7 .5-.7 .5-3 .5 78.7 .5-78.3 .5-1.3 .5-2.8 .5 4.7 .5-2.4 .5 .5 .5 2.3 .5-2.3 .5-1.9 .5 .1 .5 3.6 .5-6.4 .5 4.8 .5 1 .5 1 .5 .6 .5-4.9 .5 9.1 .5-6 .5 3.8 .5-3.4 .5 0 .5 78.2 .5-76.1 .5-6.3 .5 4.7 .5-2.1 .5 79.8 .5-81.4 .5-1.2 .5 82.6 .5-80.3 .5-.2 .5 5.1 .5-6.5 .5 5 .5 1 .5-1.8 .5 .4 .5 77.3 .5-81.7 .5-1.6 .5 4 .5 1.8 .5-.7 .5 2.1 .5-1.3 .5-6.8 .4 6.8 .5-1.2 .5-2.5 .5 1.5 .5-1.2 .5 4.3 .5 1.2 .5-6.6 .5 4.9 .5-1.7 .5-.9 .5 5.2 .5-4.7 .5 1.6 .5-2.8 .5 1.7 .5 5.4 .5-8.4 .5 9 .5-5.5 .5 1.1 .5-.7 .5-.8 .5-3.1 .5 4.8 .5-.6 .5-3.7 .5-.5 .5-.6 .5 1 .5 1.2 .5 .8 .5 .2 .5-3.7 .5-1.2 .5-.3 .5 84.2 .5-78.6 .5-.4 .5 .3 .5 2 .5-7.5 .5 1.4 .5 4.3 .5 .5 .5-.5 .5 3.1 .5-2.7 .5-3.2 .5-2.2 .5 2.4 .5-1.6 .5 6.4 .5 3.7 .5-9.5 .4 2.4 .5 .9 .5-4.9 .5 7 .5-.5 .5-.4 .5-6.6 .5 2 .5 7.5 .5-9.2 .5 4.3 .5-.6 .5 3.4 .5-7.3 .5 4 .5-1.8 .5 6.4 .5-4.7 .5 2.1 .5 .2 .5 1.5 .5-.2 .5 .8 .5-2.2 .5-.8 .5-1.6 .5 5.6 .5-1.1 .5-1 .5 2.7 .5-3.6 .5 0 .5-.5 .5-1.5 .5-1.6 .5 .3 .5 1.9 .5-1.3 .5 3.9 .5 .3 .5-4.5 .5-.4 .5-3 .5 5.7 .5 2.4 .5-3.4 .5 2.4 .5 1.4 .5-6.4 .5-2 .5 3.9 .5 2.7 .5-2.2 .5 .7 .5 3.5 .5-5.4 .4 80.9 .5-82.7 .5 5.2 .5-1.3 .5-.2 .5 4.4 .5-9.6 .5 10.3 .5-2.6 .5-2.7 .5 3.8 .5-5.1 .5 2.5 .5-1.7 .5-.1 .5 .5 .5 79.3 .5-78.9 .5-2 .5-.6 .5 2.3 .5 .9 .5-.6 .5-1.1 .5 1.7 .5 .3 .5 3 .5-9.2 .5 8.3 .5-7.9 .5 2.7 .5-.5 .5 2.4 .5-1 .5 .3 .5-.9 .5-.9 .5-2.3 .5 7.2 .5-3.6 .5-3.8 .5 .4 .5 6.9 .5-4.4 .5 0 .5 .6 .5 80.7 .5-81.7 .5 7.3 .5-9.8 .5 3.8 .5 1.7 .5-1.9 .5 1.1 .5 1.7 .4-1.4 .5-1.2 .5 3.6 .5-3.8 .5-.8 .5 0 .5 .2 .5-.4 .5 1.5 .5-1.5 .5 3.9 .5-1.8 .5-2.8 .5-1.4 .5 5.8 .5 3 .5-9.3 .5 1.9 .5-1.7 .5 2.5 .5 1.8 .5 2 .5 1.6 .5-6.6 .5 1.7 .5 1.8 .5 4.3 .5-1.9 .5-.2 .5-1 .5 5.4 .5-7.3 .5-3.9 .5 5.6 .5-2.1 .5 0 .5 3 .5-3.4 .5 3.4 .5-.6 .5-2.5 .5 1.5 .5-1.1 .5 3.1 .5-4.5 .5 81.4 .5-82 .5 3.7 .5 2 .5-3.1 .5 2.5 .5-1.5 .5-1 .5-2.7 .5-.2 .4 1.1 .5 2.3 .5 3.6 .5-3.3 .5 .2 .5-.5 .5 1.2 .5 .2 .5-4.4 .5 5.9 .5-4.1 .5-3.1 .5 5.8 .5 1 .5-1.8 .5 .3 .5-1.6 .5-3 .5 4.3 .5-1.9 .5 3.6 .5-.5 .5-2.7 .5 2.8 .5-5.5 .5 3.8 .5-.9 .5 79.5 .5-78.6 .5 1.5 .5-.7 .5 4 .5-5 .5-4.7 .5 10.3 .5-10.4 .5 83.6 .5-81.5 .5 5 .5-7.7 .5 8.5 .5-2.4 .5 78.1 .5-75.3 .5 2.7 .5-7 .5 2 .5 .2 .5 .1 .5 1.6 .5-8.5 .5 .5 .5 7.8 .5-3.2 .5 1.4 .5-3.8 .4 5.1 .5-7.3 .5 4.5 .5 1.9 .5-2.1 .5 1.7 .5-6.5 .5 4.3 .5 2 .5-1.3 .5-4.2 .5 6.9 .5 2.3 .5-8.6 .5 1.7 .5 2.8 .5-.9 .5-3.1 .5 9.7 .5-10.2 .5 4.7 .5-2.1 .5 1.8 .5-5.8 .5 8.2 .5-5.1 .5 8.5 .5-5.9 .5-2.3 .5 6.2 .5 1.5 .5-6.3 .5-2.6 .5-.5 .5 5.1 .5-3.3 .5 4.9 .5-8.4 .5 6.2 .5-5.4 .5 4.4 .5 .1 .5-5.2 .5 7.3 .5-5.9 .5 5.1 .5 1.5 .5 76.1 .5-82.8 .5 3.3 .5 .9 .5 3.2 .5-7.4 .5 .8 .5 2.2 .4-1.5 .5 8.7 .5-5.9 .5-2.2 .5-.2 .5 2 .5-2.2 .5 3.6 .5 0 .5 77.5 .5-79.9 .5 2.5 .5-.6 .5-6 .5 4.5 .5 .3 .5 4.4 .5-3.3 .5-4.1 .5 .9 .5 1.5 .5 .8 .5-1 .5-1.3 .5 2.6 .5 6 .5-11.5 .5 1.9 .5 4.5 .5-4.6 .5 82.4 .5-82.4 .5 3 .5-2.2 .5 3.3 .5-1.6 .5-.8 .5 80.7 .5-81.1 .5 .4 .5 2.8 .5-6.3 .5 3.8 .5 1.7 .5 .9 .5 3 .5-1.2 .5 2.3 .5-5.3 .5-.4 .5-1.3 .5 4 .5-2.7 .5 .7 .5-3.9 .5 7.4 .4 .2 .5-8 .5 3.5 .5 5.2 .5-8.1 .5-.6 .5 .9 .5 9.3 .5-6.3 .5 2.4 .5-1.4 .5 3.8 .5-9.9 .5 6.3 .5-2.5 .5-1.3 .5 1 .5 1.4 .5 2.1 .5-2.1 .5 .9 .5 5.5 .5-9.7 .5 4.9 .5 77.7 .5-77.9 .5 3.2 .5-.3" stroke="#16a5e8" stroke-width="1.8" stroke-linejoin="round"/></svg>
<span class="t" style="left:619.5px;top:762.3px;font-size:10px;font-weight:400;color:#9ba0ad;">Mar 7</span>
<span class="t" style="left:702.9px;top:762.3px;font-size:10px;font-weight:400;color:#9ba0ad;">Mar 8</span>
<span class="t" style="left:785.9px;top:762.3px;font-size:10px;font-weight:400;color:#9ba0ad;">Mar 9</span>
<span class="t" style="left:836.7px;top:762.3px;font-size:10px;font-weight:400;color:#9ba0ad;width:43.8px;overflow:hidden;">6:00:00pm</span>
<div style="position:absolute;left:597.4px;top:786.1999999999999px;width:7.6px;height:7.6px;background:#16a5e8;border-radius:1.5px;"></div>
<span class="t" style="left:609.5px;top:783.9px;font-size:11.8px;font-weight:400;color:#a0a5b3;">default/mysql-0/mysql</span>
<span class="t" style="left:850.4px;top:782.8px;font-size:11px;font-weight:400;color:#a0a5b3;">+1</span>
<div style="position:absolute;left:901px;top:563px;width:314px;height:241px;background:#222737;border:1px solid #2c3142;border-radius:8px;box-sizing:border-box;"></div>
<span class="t m" style="left:916.0px;top:580.1px;font-size:11.6px;font-weight:400;color:#e6e8ee;-webkit-text-stroke:0.45px currentColor;">Network traffic sent and received</span>
<svg style="position:absolute;left:1186px;top:584px" width="11" height="4" viewBox="0 0 11 4"><g fill="#7d8294"><circle cx="1.5" cy="2" r="1"/><circle cx="5.2" cy="2" r="1"/><circle cx="8.9" cy="2" r="1"/></g></svg>
<span class="t" style="right:275.5px;top:625.8px;font-size:10px;font-weight:400;color:#9ba0ad;">15 kB</span>
<div style="position:absolute;left:956px;top:630px;width:236px;height:1px;background:#2b3043;"></div>
<span class="t" style="right:275.5px;top:650.6px;font-size:10px;font-weight:400;color:#9ba0ad;">12 kB</span>
<div style="position:absolute;left:956px;top:655px;width:236px;height:1px;background:#2b3043;"></div>
<span class="t" style="right:275.5px;top:675.4px;font-size:10px;font-weight:400;color:#9ba0ad;">9 kB</span>
<div style="position:absolute;left:956px;top:680px;width:236px;height:1px;background:#2b3043;"></div>
<span class="t" style="right:275.5px;top:700.1px;font-size:10px;font-weight:400;color:#9ba0ad;">6 kB</span>
<div style="position:absolute;left:956px;top:704px;width:236px;height:1px;background:#2b3043;"></div>
<span class="t" style="right:275.5px;top:724.9px;font-size:10px;font-weight:400;color:#9ba0ad;">3 kB</span>
<div style="position:absolute;left:956px;top:729px;width:236px;height:1px;background:#2b3043;"></div>
<span class="t" style="right:275.5px;top:749.6px;font-size:10px;font-weight:400;color:#9ba0ad;">0 kB</span>
<div style="position:absolute;left:955px;top:753px;width:238px;height:3px;background:#363b4f;border-radius:1px;"></div>
<svg style="position:absolute;left:0;top:0" width="1224" height="896" viewBox="0 0 1224 896" fill="none"><path d="M956 747.6l.5-.2 .5 .2 .5-.2 .5 0 .5-.1 .5 .1 .4 .2 .5 .1 .5-.1 .5 .1 .5-.4 .5 .3 .5 .3 .5-.4 .5-.1 .5 .3 .5-.3 .5 .4 .5-.3 .5 .1 .4-.1 .5 0 .5 .2 .5-.3 .5 .2 .5-.1 .5-.2 .5 .4 .5-.2 .5-.2 .5 0 .5 .4 .5 0 .5-.2 .4 .2 .5-.2 .5 .3 .5-.4 .5 .4 .5-.3 .5-.1 .5 .3 .5 .1 .5 0 .5 .1 .5-.6 .5 .6 .4-.1 .5-.3 .5 0 .5-.1 .5-.1 .5 .2 .5 .1 .5 0 .5 0 .5-.2 .5 .1 .5-.1 .5 .4 .5-.1 .4 0 .5-.1 .5 .1 .5-.3 .5 0 .5-.1 .5 .3 .5 0 .5-.1 .5 .1 .5 .1 .5-.3 .5 .5 .5-.3 .4 .3 .5-.5 .5 .4 .5-.1 .5-.1 .5 .1 .5-.2 .5 .1 .5-.4 .5 .6 .5-.1 .5-.2 .5 0 .4 0 .5 .1 .5-.2 .5 .1 .5-.2 .5 .5 .5-.3 .5 .1 .5-.1 .5 .2 .5-.3 .5 .4 .5-.4 .5 .1 .4 .3 .5-.3 .5 .4 .5-.4 .5 .3 .5-.2 .5 0 .5 .2 .5 .1 .5-.4 .5 .1 .5-.2 .5 .2 .5-.5 .4 .4 .5-.2 .5 .2 .5 0 .5 0 .5 .2 .5 0 .5-.4 .5 .3 .5 .1 .5-.2 .5 .2 .5-.2 .5-.1 .4-.1 .5-.1 .5 .2 .5 0 .5 .1 .5 0 .5 .1 .5-.4 .5 .4 .5-.3 .5 .3 .5-.3 .5 .7 .4-.5 .5 .1 .5-.3 .5 0 .5 .3 .5 0 .5-.2 .5 .1 .5 0 .5-.1 .5 .4 .5-.5 .5 .2 .5 .5 .4-.3 .5-.1 .5-.4 .5 .3 .5 .3 .5-.5 .5 .2 .5 0 .5-.1 .5 .2 .5 0 .5-.2 .5 .1 .5-.1 .4 .2 .5-.3 .5 .5 .5 0 .5-.4 .5 .2 .5-.1 .5 0 .5 .1 .5 .1 .5-.2 .5-.2 .5 .4 .4-.5 .5 .1 .5 .4 .5-.3 .5 .3 .5-.2 .5 .2 .5-.1 .5 .2 .5-.2 .5 .1 .5 0 .5 .2 .5-.4 .4-.3 .5 .4 .5 0 .5 .1 .5-.1 .5 .1 .5 .1 .5-.1 .5-.1 .5-.1 .5 .1 .5-.1 .5-.2 .5 .1 .4 .2 .5 .2 .5-.2 .5-.1 .5-.1 .5 .1 .5-.4 .5 .5 .5-.2 .5 .3 .5 0 .5-.1 .5-.1 .4-.1 .5 .7 .5-.8 .5 0 .5 0 .5 .1 .5 .2 .5-.2 .5-.1 .5 .4 .5-.3 .5 .1 .5 .1 .5-.4 .4 .4 .5 .1 .5-.2 .5 .1 .5-.3 .5 .5 .5 0 .5-.3 .5-.1 .5 .3 .5-.4 .5 .6 .5-.5 .5 .3 .4-.1 .5-.4 .5 .3 .5 .1 .5-.1 .5-.3 .5 .3 .5 .2 .5-.2 .5 .2 .5 0 .5-.1 .5-.2 .4 .2 .5-.1 .5-.2 .5 0 .5 .5 .5-.3 .5 .2 .5-.3 .5 .1 .5 0 .5 .1 .5 .1 .5 .1 .5-.4 .4 .2 .5-.1 .5 0 .5-.1 .5-.2 .5 .4 .5-.2 .5 .4 .5-.2 .5 .1 .5-.1 .5-.2 .5 .1 .5 0 .4 0 .5 .1 .5 0 .5 0 .5 0 .5 0 .5 0 .5 .2 .5-.3 .5 0 .5 0 .5 .2 .5 0 .4-.3 .5 .3 .5-.2 .5 .2 .5 0 .5 .1 .5-.2 .5 0 .5 .1 .5-.4 .5 .2 .5 .2 .5-.4 .5 .1 .4 .3 .5 0 .5-.1 .5-.2 .5 .4 .5-.4 .5 .2 .5-.2 .5 .2 .5-.1 .5-.1 .5-.1 .5 .4 .5-.5 .4 .5 .5-.2 .5-.1 .5 .1 .5-.1 .5 .4 .5-.3 .5-.1 .5 .1 .5 .2 .5-.2 .5 0 .5 .2 .4-.4 .5 .3 .5 .1 .5-.2 .5 .1 .5 0 .5-.1 .5 .1 .5-.2 .5 .1 .5-.2 .5 .4 .5-.2 .5 0 .4 0 .5 .4 .5-.2 .5-.2 .5-.1 .5 .1 .5 0 .5-.2 .5 .3 .5 .1 .5-.4 .5 .1 .5 .2 .5 .1 .4-.4 .5 .3 .5 .1 .5-.4 .5 .5 .5-.2 .5-.2 .5 .2 .5 0 .5-.1 .5 .2 .5-.1 .5-.2 .5 .3 .4-.4 .5 .3 .5 0 .5 0 .5-.2 .5 .2 .5-.1 .5-.2 .5 0 .5 .5 .5-.5 .5 .3 .5-.1 .4 0 .5 0 .5 .1 .5-.2 .5 0 .5 .2 .5-.1 .5-.1 .5 0 .5 .1 .5 0 .5 0 .5 .1 .5-.1 .4 .1 .5 0 .5 .3 .5-.1 .5-.3 .5-.1 .5 .1 .5 0 .5 .1 .5-.2 .5 .2 .5-.1 .5-.2 .5 .5 .4-.2 .5 0 .5 .3 .5-.2 .5-.3 .5 .1 .5 .1 .5-.3 .5 .4 .5-.5 .5 .4 .5 0 .5-.2 .4 .1 .5 0 .5 .1 .5 .2 .5 .1 .5-.4 .5-.1 .5 .3 .5-.2 .5 .3 .5 0 .5-.2 .5-.2 .5 0 .4-.1 .5 .4 .5-.1 .5-.2 .5 .3 .5-.1 .5-.1 .5 0 .5-.1 .5 .1 .5 .1 .5 .3 .5-.5 .5 0 .4 .1 .5 0 .5 0 .5-.2 .5 .3 .5 0 .5 .1" stroke="#ec952c" stroke-width="1.6" stroke-linejoin="round"/><path d="M956 734.3l.5-.7 .5 .7 .5 0 .5 .1 .5 0 .5-.4 .4-.2 .5 .3 .5 .4 .5-.4 .5 .3 .5 .6 .5-.9 .5 .6 .5-.3 .5-.2 .5 .1 .5 0 .5-.6 .5 .2 .4-.2 .5 .4 .5 0 .5-.5 .5 .8 .5-.3 .5 0 .5 0 .5-.1 .5 .1 .5-.2 .5 .6 .5-.5 .5 .5 .4-.7 .5 .1 .5 .3 .5 .1 .5-.1 .5-.2 .5 .7 .5-.2 .5-.6 .5 .4 .5 .3 .5 .3 .5-.6 .4 .4 .5-.6 .5 .1 .5-.6 .5 1 .5-.6 .5 .6 .5-.1 .5-.2 .5 .2 .5-.9 .5 .6 .5 .2 .5-1 .4 1 .5-.1 .5 0 .5 .1 .5-.4 .5-.2 .5 .8 .5-.3 .5 0 .5 .3 .5 0 .5-.3 .5 .2 .5-.4 .4-.2 .5 .2 .5 0 .5 .4 .5-.1 .5-.3 .5-.1 .5 .2 .5-.2 .5 .3 .5 .3 .5-.5 .5 .2 .4 .4 .5-.8 .5 .2 .5-.1 .5 .3 .5-.6 .5 .3 .5-.1 .5 .5 .5-.1 .5-.5 .5 .4 .5 0 .5-.5 .4 .1 .5 .3 .5-.5 .5 1.1 .5-.5 .5 .2 .5-.7 .5 0 .5 .6 .5-.2 .5-.2 .5 .1 .5 .1 .5-.2 .4-.3 .5 .6 .5 .3 .5-.3 .5 0 .5 .1 .5-.3 .5 0 .5-.1 .5 .1 .5 .1 .5 .4 .5-.2 .5 .2 .4-.4 .5 .1 .5 0 .5-.2 .5 .3 .5-.4 .5 0 .5 .6 .5-.7 .5 .5 .5 .1 .5-.1 .5 .3 .4-.5 .5-.3 .5 .9 .5-.6 .5-.1 .5 0 .5 0 .5 .1 .5 .2 .5-.4 .5 .2 .5-.2 .5 .2 .5 .2 .4-.1 .5-.2 .5-.1 .5 .9 .5-.2 .5 .1 .5-.3 .5 0 .5-.3 .5 .2 .5-.5 .5 .6 .5 0 .5 .1 .4-.2 .5-.2 .5 .2 .5 .2 .5 .1 .5-.5 .5 .3 .5 .1 .5-.2 .5-.2 .5-.5 .5 .1 .5 .8 .4-.2 .5 .5 .5 0 .5 0 .5-.9 .5 .3 .5 .5 .5-.3 .5 0 .5 0 .5-.7 .5 1.1 .5-.5 .5-.2 .4-.1 .5 .9 .5-.8 .5 .5 .5-.2 .5 .3 .5-.7 .5-.8 .5 .7 .5 .4 .5 .4 .5-.8 .5-.1 .5 .7 .4-.6 .5 .9 .5-.2 .5-.5 .5 .5 .5-.6 .5-.3 .5 .5 .5-.2 .5-.3 .5 .3 .5-.2 .5-.1 .4 .8 .5-1 .5 .3 .5 .3 .5-.2 .5 .2 .5 0 .5 .4 .5-.2 .5 0 .5-.5 .5 .2 .5 .1 .5 .1 .4-.4 .5 1.2 .5-.5 .5-.6 .5 .4 .5-.3 .5-.3 .5 .2 .5 .7 .5-.3 .5 .2 .5-.5 .5-.1 .5 .4 .4-.3 .5 .2 .5-.6 .5 .5 .5 0 .5-.1 .5-.2 .5 .2 .5 .2 .5 0 .5-.2 .5 0 .5 .3 .4 .1 .5-.1 .5-.3 .5 .3 .5 .2 .5-.2 .5 0 .5-.3 .5 .3 .5 0 .5-.7 .5 .4 .5 .5 .5-.7 .4 .5 .5 .1 .5-.4 .5 .6 .5-.4 .5-.2 .5-.1 .5 .4 .5 0 .5-.1 .5-.4 .5 .9 .5-.8 .5 .2 .4-.4 .5 .8 .5-.7 .5 .6 .5-.3 .5 .2 .5 .6 .5-.7 .5-.1 .5-.2 .5 .5 .5 .1 .5-.5 .4 .3 .5-.5 .5-.1 .5 .6 .5-.1 .5 .2 .5 .4 .5-.6 .5-.3 .5-.1 .5 .4 .5-.6 .5 .7 .5-.1 .4 .1 .5 0 .5 0 .5 .1 .5-.1 .5-.2 .5 0 .5 .4 .5-.5 .5 .4 .5-.4 .5 .2 .5 .6 .5-.3 .4-.6 .5 .5 .5 0 .5-.1 .5-.2 .5-.1 .5 .3 .5-.7 .5 .8 .5-.1 .5-.1 .5-.1 .5-.4 .4-.3 .5 .9 .5-.1 .5-.2 .5 .2 .5-.3 .5 .6 .5-.6 .5 1 .5-.9 .5 0 .5-.6 .5 1.1 .5-.5 .4 0 .5 .5 .5-.4 .5 .3 .5 .1 .5 .2 .5-.5 .5 .3 .5 .3 .5-.7 .5 .6 .5-.7 .5 .1 .5 .3 .4 .3 .5-.2 .5 .1 .5-.3 .5 0 .5-.9 .5 1.4 .5-.4 .5-.4 .5-.1 .5-.1 .5 .7 .5-.6 .5 1.2 .4-.9 .5-.3 .5 .1 .5 .6 .5-.2 .5 .5 .5-.5 .5 .2 .5-.5 .5 .3 .5-.4 .5 .2 .5 .1 .4-.7 .5 .2 .5 .8 .5-.9 .5 .2 .5-.1 .5 .2 .5 .8 .5-.5 .5 .7 .5-.4 .5-.2 .5-.6 .5 .4 .4-.1 .5-.2 .5 .6 .5-.7 .5 .3 .5 .4 .5-.1 .5-.1 .5-.3 .5-.3 .5 .6 .5 0 .5-.7 .5-.4 .4 .4 .5 .5 .5 .2 .5-.3 .5 .1 .5 .3 .5-.7 .5-.3 .5 1.1 .5-.1 .5-.1 .5 .3 .5-.7 .4 .7 .5-.6 .5 .1 .5-.2 .5 .8 .5-.6 .5 0 .5-.2 .5 .2 .5 .3 .5-.6 .5-.1 .5 0 .5 .7 .4-.4 .5 .5 .5-.3 .5-.3 .5 .7 .5-1.3 .5 .5 .5 .6 .5 0 .5-.2 .5 0 .5 .4 .5-.4 .5 .5 .4-.3 .5-.8 .5 .6 .5 .1 .5-.6 .5 .4 .5-.1" stroke="#12b886" stroke-width="1.6" stroke-linejoin="round"/><path d="M956 723.5l.5 2.3 .5-.2 .5-.6 .5 .6 .5-1.2 .5 1 .4-1.3 .5 .6 .5 .3 .5-1 .5 .1 .5 .3 .5 .4 .5-.2 .5 1.5 .5 0 .5-1 .5-.7 .5-1.3 .5 1.1 .4 1.1 .5-.4 .5 .6 .5-1 .5 .1 .5-.1 .5-.2 .5-.6 .5 .3 .5 1.5 .5-1.7 .5 1.5 .5-1.1 .5 .2 .4-1.3 .5 1.5 .5 0 .5 .1 .5-.9 .5 .5 .5 .4 .5-.9 .5-1 .5 .4 .5 .1 .5 1.6 .5-.3 .4-.2 .5 1.5 .5-2.8 .5 2.6 .5-1.5 .5 1.3 .5-1.1 .5-.6 .5 .3 .5 1.1 .5-.2 .5-1.3 .5 .9 .5-.2 .4-.7 .5 2.8 .5-2.2 .5-.8 .5-.4 .5 .8 .5 1.2 .5-1.4 .5-.7 .5 2 .5 .1 .5-.5 .5 .2 .5 1.4 .4 .2 .5-.8 .5-.6 .5-.9 .5 .8 .5-.5 .5-1 .5-1.3 .5 1.7 .5 1.5 .5-1.6 .5 .8 .5-.3 .4-.5 .5 .2 .5 1.7 .5-.2 .5-1.1 .5-.4 .5-1.1 .5 1.2 .5 .8 .5 .1 .5 .2 .5 .5 .5 0 .5-.6 .4-.6 .5 .7 .5-.6 .5 .2 .5 0 .5 .2 .5-.6 .5 .2 .5 2.2 .5-2.4 .5 .1 .5 .6 .5-.6 .5 .7 .4-.7 .5 .8 .5-1.2 .5 .2 .5 1.5 .5-.6 .5-1.2 .5 .3 .5 .2 .5 1 .5-.3 .5-.7 .5-.1 .5 .2 .4 .7 .5-.5 .5 .2 .5 .6 .5-.1 .5-.2 .5 .5 .5-1.6 .5-.2 .5-.1 .5 1.3 .5 0 .5-.8 .4 .6 .5-.1 .5 0 .5 1 .5-2.3 .5 2.2 .5 .1 .5-1.9 .5 1.5 .5-1.7 .5 .5 .5 0 .5 .6 .5 .9 .4-.2 .5-1.1 .5 .2 .5 .9 .5-.1 .5-.2 .5-.6 .5-.4 .5-.4 .5 1 .5-1.4 .5 .5 .5-.6 .5 1.9 .4-1.1 .5-.5 .5 2.3 .5-2.1 .5 .4 .5-.4 .5 .6 .5-.8 .5 1.3 .5 0 .5-1 .5 0 .5 1.7 .4-2 .5 0 .5 .1 .5 1.4 .5-1.6 .5 .6 .5-.3 .5 .8 .5 .3 .5 .2 .5-.1 .5-1.2 .5 1.3 .5-.1 .4-.7 .5 .4 .5 1.5 .5-1.2 .5-.2 .5-1.6 .5 .8 .5 1.3 .5 .1 .5-.5 .5-.6 .5 .8 .5-.9 .5 1.4 .4-1.3 .5-.7 .5 3 .5-2.1 .5-.2 .5-.1 .5 .2 .5 .2 .5-.3 .5 .1 .5 .1 .5-1.2 .5 .4 .4 .1 .5 1.2 .5-.1 .5-1.2 .5 1.7 .5-1.7 .5 1.9 .5-2.8 .5 .7 .5 1.5 .5-.1 .5 1.3 .5-1.6 .5-1 .4 .4 .5 .7 .5-1.8 .5 1.2 .5 .1 .5 .6 .5-.7 .5-1.7 .5 1.8 .5 1.7 .5-1.6 .5-1.3 .5 .6 .5 1.3 .4-.7 .5 1.5 .5-1.7 .5 1.2 .5-.3 .5 .1 .5 .1 .5-1.9 .5 .1 .5 1.5 .5-.4 .5-1.2 .5 1.6 .4 .1 .5 .3 .5-1.9 .5 1.1 .5 .1 .5 .4 .5 .4 .5-1.5 .5 1.3 .5-.2 .5 1 .5-.5 .5-.5 .5 0 .4 .8 .5-.7 .5-.4 .5 2 .5-2.5 .5 .6 .5 .9 .5-.9 .5-.5 .5 .3 .5 0 .5 0 .5-.5 .5 1.6 .4-.6 .5-.8 .5 .3 .5 .9 .5-.6 .5 .3 .5-.6 .5 1.4 .5-.1 .5-.1 .5-1.1 .5-2 .5 1.2 .4-.2 .5 .9 .5-1.2 .5 1 .5 .2 .5-.8 .5 1.8 .5 .8 .5-.8 .5-2.1 .5 .4 .5 .6 .5 .3 .5 0 .4-.5 .5 1 .5-1.3 .5 1.4 .5-1.8 .5 1.3 .5 .5 .5-.5 .5 .5 .5-.7 .5 1.4 .5-1.1 .5-.4 .5-.3 .4 .7 .5-1.3 .5 2.3 .5-1.2 .5 .2 .5-.4 .5 .3 .5-1.4 .5 1.1 .5 .8 .5-2.8 .5 2 .5 .2 .4-.9 .5 1.2 .5-.3 .5-.8 .5 1.6 .5-.6 .5-1.1 .5-.7 .5 1.5 .5 0 .5-.9 .5 2 .5-.6 .5 .1 .4 1 .5 .7 .5-2 .5-1.1 .5 .2 .5-.5 .5 3.2 .5-2 .5-1.2 .5 1.7 .5 .4 .5-1.3 .5 .2 .5-.5 .4 .5 .5-1 .5 .5 .5 .3 .5 .5 .5-.8 .5 1.1 .5-1.3 .5-.2 .5 .2 .5 1.8 .5-1.4 .5 0 .5-.4 .4 2 .5-.8 .5-.4 .5-1.2 .5 1.6 .5-1.2 .5 .6 .5-1.4 .5 1.3 .5 1.5 .5-1 .5-.5 .5-.8 .4 .5 .5 .8 .5 .8 .5-1.1 .5 .1 .5-1.1 .5 .3 .5 1.9 .5 .7 .5-1.5 .5-.6 .5 1 .5-.3 .5-1.4 .4 .3 .5 2 .5-1.6 .5 .1 .5 .3 .5-.6 .5 0 .5-1.6 .5 1.8 .5 .8 .5-.2 .5-.9 .5-1 .5 1 .4 .1 .5 .2 .5 .6 .5-.4 .5 1 .5-1.6 .5 .2 .5 .3 .5 .8 .5-.5 .5 .3 .5-.7 .5 .5 .4-.6 .5-.4 .5-.3 .5 1.9 .5-.6 .5 .6 .5-1.9 .5 1.7 .5-1.8 .5 1.5 .5-1.2 .5 1.3 .5-.3 .5-.3 .4 .1 .5 .1 .5-.6 .5-.4 .5 .2 .5 1.1 .5 1.1 .5-1.6 .5 2.4 .5-2.8 .5 0 .5 1.5 .5-1.4 .5 1 .4-1.6 .5 1.6 .5 .1 .5-.1 .5-.8 .5 1.1 .5-2.7" stroke="#5cc8c2" stroke-width="1.5" stroke-linejoin="round"/><path d="M956 647.9l.5 16.3 .5-19.7 .5 19.7 .5-15.1 .5-3.1 .5 4.1 .4-3.3 .5 1 .5-3 .5 4.3 .5-.3 .5 .9 .5 .8 .5-3.1 .5 2.7 .5-2.8 .5 2 .5 1.4 .5 2.6 .5-6.2 .4 6.1 .5-5.2 .5 1.3 .5-1.7 .5 1.2 .5 7.8 .5-8.1 .5 5.1 .5-5.8 .5 8.3 .5-5.8 .5 3.3 .5 .7 .5 2.5 .4-6 .5 1.8 .5-6 .5 1.4 .5-.9 .5 4.3 .5-2.5 .5 6.4 .5-3.5 .5-.5 .5 7.5 .5-2.8 .5 3.5 .4-10.4 .5 1.2 .5-4.8 .5-1.3 .5 4.5 .5-3.1 .5 1.6 .5 3.6 .5-1.1 .5-1.1 .5 1.4 .5 17.6 .5-10.4 .5-6.9 .4-2.6 .5 2.6 .5 6.4 .5-10.6 .5 .3 .5 4.4 .5-3.1 .5 1.6 .5-3.7 .5 2.6 .5 0 .5 27 .5-28.1 .5 10 .4-10.2 .5 5.2 .5-5.9 .5 5 .5-4.6 .5-1.8 .5 11.8 .5-1.7 .5-10.9 .5 5.1 .5 9.8 .5 3.7 .5-8.8 .4-2.3 .5 1.4 .5-3.5 .5 7.8 .5-.1 .5-11.2 .5 7.1 .5-3.3 .5 1.5 .5-4.2 .5 5 .5-5.3 .5-.8 .5 2 .4 5.7 .5 7.7 .5-2.5 .5-10.6 .5-3.2 .5 10.6 .5-7.4 .5 24 .5-20.9 .5-1.7 .5 .3 .5-3 .5 2.7 .5 7.9 .4-12 .5 6.3 .5-4.4 .5 6.5 .5-4.5 .5-4.1 .5 12.6 .5-1.2 .5-7.8 .5-1.5 .5 3.8 .5-1.9 .5 9.9 .5-11.7 .4 8.8 .5-7.5 .5 3.3 .5-7.6 .5 7.2 .5-4.7 .5-2.4 .5 3.2 .5-.7 .5 .3 .5 .8 .5 2.1 .5 3.2 .4-.6 .5-6 .5-.5 .5 4 .5-4.3 .5 5 .5 6.6 .5-8.7 .5 1.8 .5 14.3 .5-19 .5 3.5 .5-2.2 .5-1 .4 5.8 .5-3.4 .5-3.3 .5 2.8 .5-.5 .5 13.3 .5-11.7 .5-1.6 .5 .1 .5-1 .5 1.2 .5 5 .5-2.7 .5 1.2 .4-1.6 .5-1.1 .5-3.4 .5 2 .5 2.1 .5-1.7 .5 1.6 .5 12.6 .5-14.4 .5 23.4 .5-22 .5 20.3 .5-3.6 .4 12.7 .5-30.9 .5 5.9 .5-3.8 .5-.2 .5 6.4 .5-5.5 .5-4.3 .5 3 .5 .3 .5 8.2 .5-8.6 .5 1.3 .5 14.3 .4 3.1 .5-22.3 .5 2.5 .5-.4 .5 .2 .5 .4 .5 6 .5 1.6 .5-11.2 .5 3.8 .5-2.8 .5 5.7 .5-4.3 .5 4.8 .4 13.2 .5-17.5 .5 4.4 .5-5.5 .5-1.1 .5 12.6 .5-11.4 .5 2.8 .5 3.9 .5-5.6 .5 8 .5-9.3 .5 5.5 .4-6.1 .5 6.8 .5-7.5 .5 12.7 .5-7.3 .5 1.1 .5 7.3 .5 2.2 .5-11.4 .5 10.2 .5-3.4 .5-10.2 .5 9.4 .5-1.4 .4-9.2 .5 14.6 .5-9 .5-.8 .5 1 .5 3.1 .5-3.9 .5-1.1 .5 1.1 .5-4.5 .5 2.9 .5 10.7 .5-8.7 .5 3.8 .4 10.6 .5-16 .5-.8 .5 2.6 .5 7.3 .5-6.9 .5-3.2 .5 6.1 .5-2.8 .5-3.9 .5 14.1 .5-5.8 .5-8.3 .4 3.4 .5 .8 .5 3.9 .5-5.4 .5-1.3 .5-1.9 .5 14.3 .5-15.5 .5 4.2 .5-.1 .5-1.2 .5 7.1 .5-8.6 .5 8.5 .4-5.3 .5 1.3 .5 4.2 .5-4.1 .5-3.1 .5-1.5 .5 10.9 .5-2.2 .5-8.3 .5 5.1 .5-3.2 .5 14.6 .5-12.8 .5 5.5 .4-5.5 .5 3.6 .5-6.9 .5 0 .5-3.2 .5 13.4 .5-7.4 .5-.9 .5-3.5 .5 2.4 .5 20.3 .5-21.2 .5 2.9 .4-5 .5 7.9 .5-3.6 .5-.7 .5 17.2 .5-17.9 .5-1 .5 3.4 .5-2.5 .5 .5 .5 4.1 .5 20.7 .5-23.3 .5 14.3 .4-12.2 .5-.1 .5-5 .5-1.5 .5 27 .5-22.3 .5 .5 .5-5.3 .5 2.7 .5 30.2 .5-30.4 .5 2.3 .5 13.6 .5-15.5 .4-4.7 .5 9.5 .5-3.8 .5-2.2 .5 9.3 .5-7.2 .5 5.9 .5-5.4 .5-3.2 .5-2 .5 3 .5 3.7 .5-.6 .4 1.4 .5-2 .5-2.4 .5-1.1 .5 10.1 .5 21.7 .5-32.3 .5 .2 .5 6.9 .5-2.6 .5-6.5 .5 4.7 .5-2.5 .5 18.4 .4-15.3 .5-4.5 .5 1.5 .5 1.5 .5 5.5 .5-3.6 .5 .6 .5-3.4 .5 11.1 .5-3 .5 .5 .5-7.1 .5-1.9 .5 2.5 .4-.2 .5 21.1 .5-20.8 .5-2.6 .5 .2 .5 1 .5 4.8 .5-2.1 .5 4.9 .5-3.8 .5-5.5 .5 15.7 .5-11 .5-1.9 .4-.9 .5 6.4 .5-7.8 .5-.2 .5 2.6 .5-.8 .5 13.2 .5-.6 .5-12.6 .5-.5 .5 2.9 .5-2.1 .5 1.4 .4-2.5 .5 1 .5-1.5 .5 1.6 .5-1 .5 1.5 .5-2.3 .5 6.7 .5 1.6 .5-1.7 .5 5.1 .5-10.6 .5 1.1 .5-.4 .4 2.8 .5 2.3 .5 13.2 .5-5.9 .5-10.3 .5 .2 .5-5.9 .5-.3 .5 5 .5 20.9 .5-21.7 .5 3.4 .5-5.8 .5 5.3 .4-6.6 .5 11.8 .5-8 .5 1.8 .5-2.5 .5 10.7 .5-6.9 .5-8.3 .5 6.8 .5-.4 .5 8 .5-12.6 .5 6.5 .4-3.5 .5 .7 .5 13.9 .5-12 .5-2.2 .5 8.2 .5-8.1 .5-4.5 .5 2.6 .5 1.6 .5-.8 .5 10.1 .5-.9 .5-9.7 .4 1.1 .5-2.7 .5 4.3 .5 10.6 .5 8.6 .5-16.6 .5-3.5 .5 3.2 .5 3 .5-4.7 .5 8.5 .5-10.9 .5-1.5 .5 17.3 .4-17.3 .5 4 .5-3.6 .5 17 .5 6.7 .5-24.8 .5 .1" stroke="#16a5e8" stroke-width="1.5" stroke-linejoin="round"/></svg>
<span class="t" style="left:957.6px;top:762.3px;font-size:10px;font-weight:400;color:#9ba0ad;">Mar 7</span>
<span class="t" style="left:1035.6px;top:762.3px;font-size:10px;font-weight:400;color:#9ba0ad;">Mar 8</span>
<span class="t" style="left:1114.2px;top:762.3px;font-size:10px;font-weight:400;color:#9ba0ad;">Mar 9</span>
<span class="t" style="left:1160.7px;top:762.3px;font-size:10px;font-weight:400;color:#9ba0ad;width:43.8px;overflow:hidden;">6:00:00pm</span>
<div style="position:absolute;left:921.4px;top:786.1999999999999px;width:7.6px;height:7.6px;background:#16a5e8;border-radius:1.5px;"></div>
<span class="t" style="left:933.5px;top:783.9px;font-size:11.8px;font-weight:400;color:#a0a5b3;">default/mysql-0/mysql sent</span>
<span class="t" style="left:1172.8px;top:782.8px;font-size:11px;font-weight:400;color:#a0a5b3;">+3</span>
</div></body></html>
